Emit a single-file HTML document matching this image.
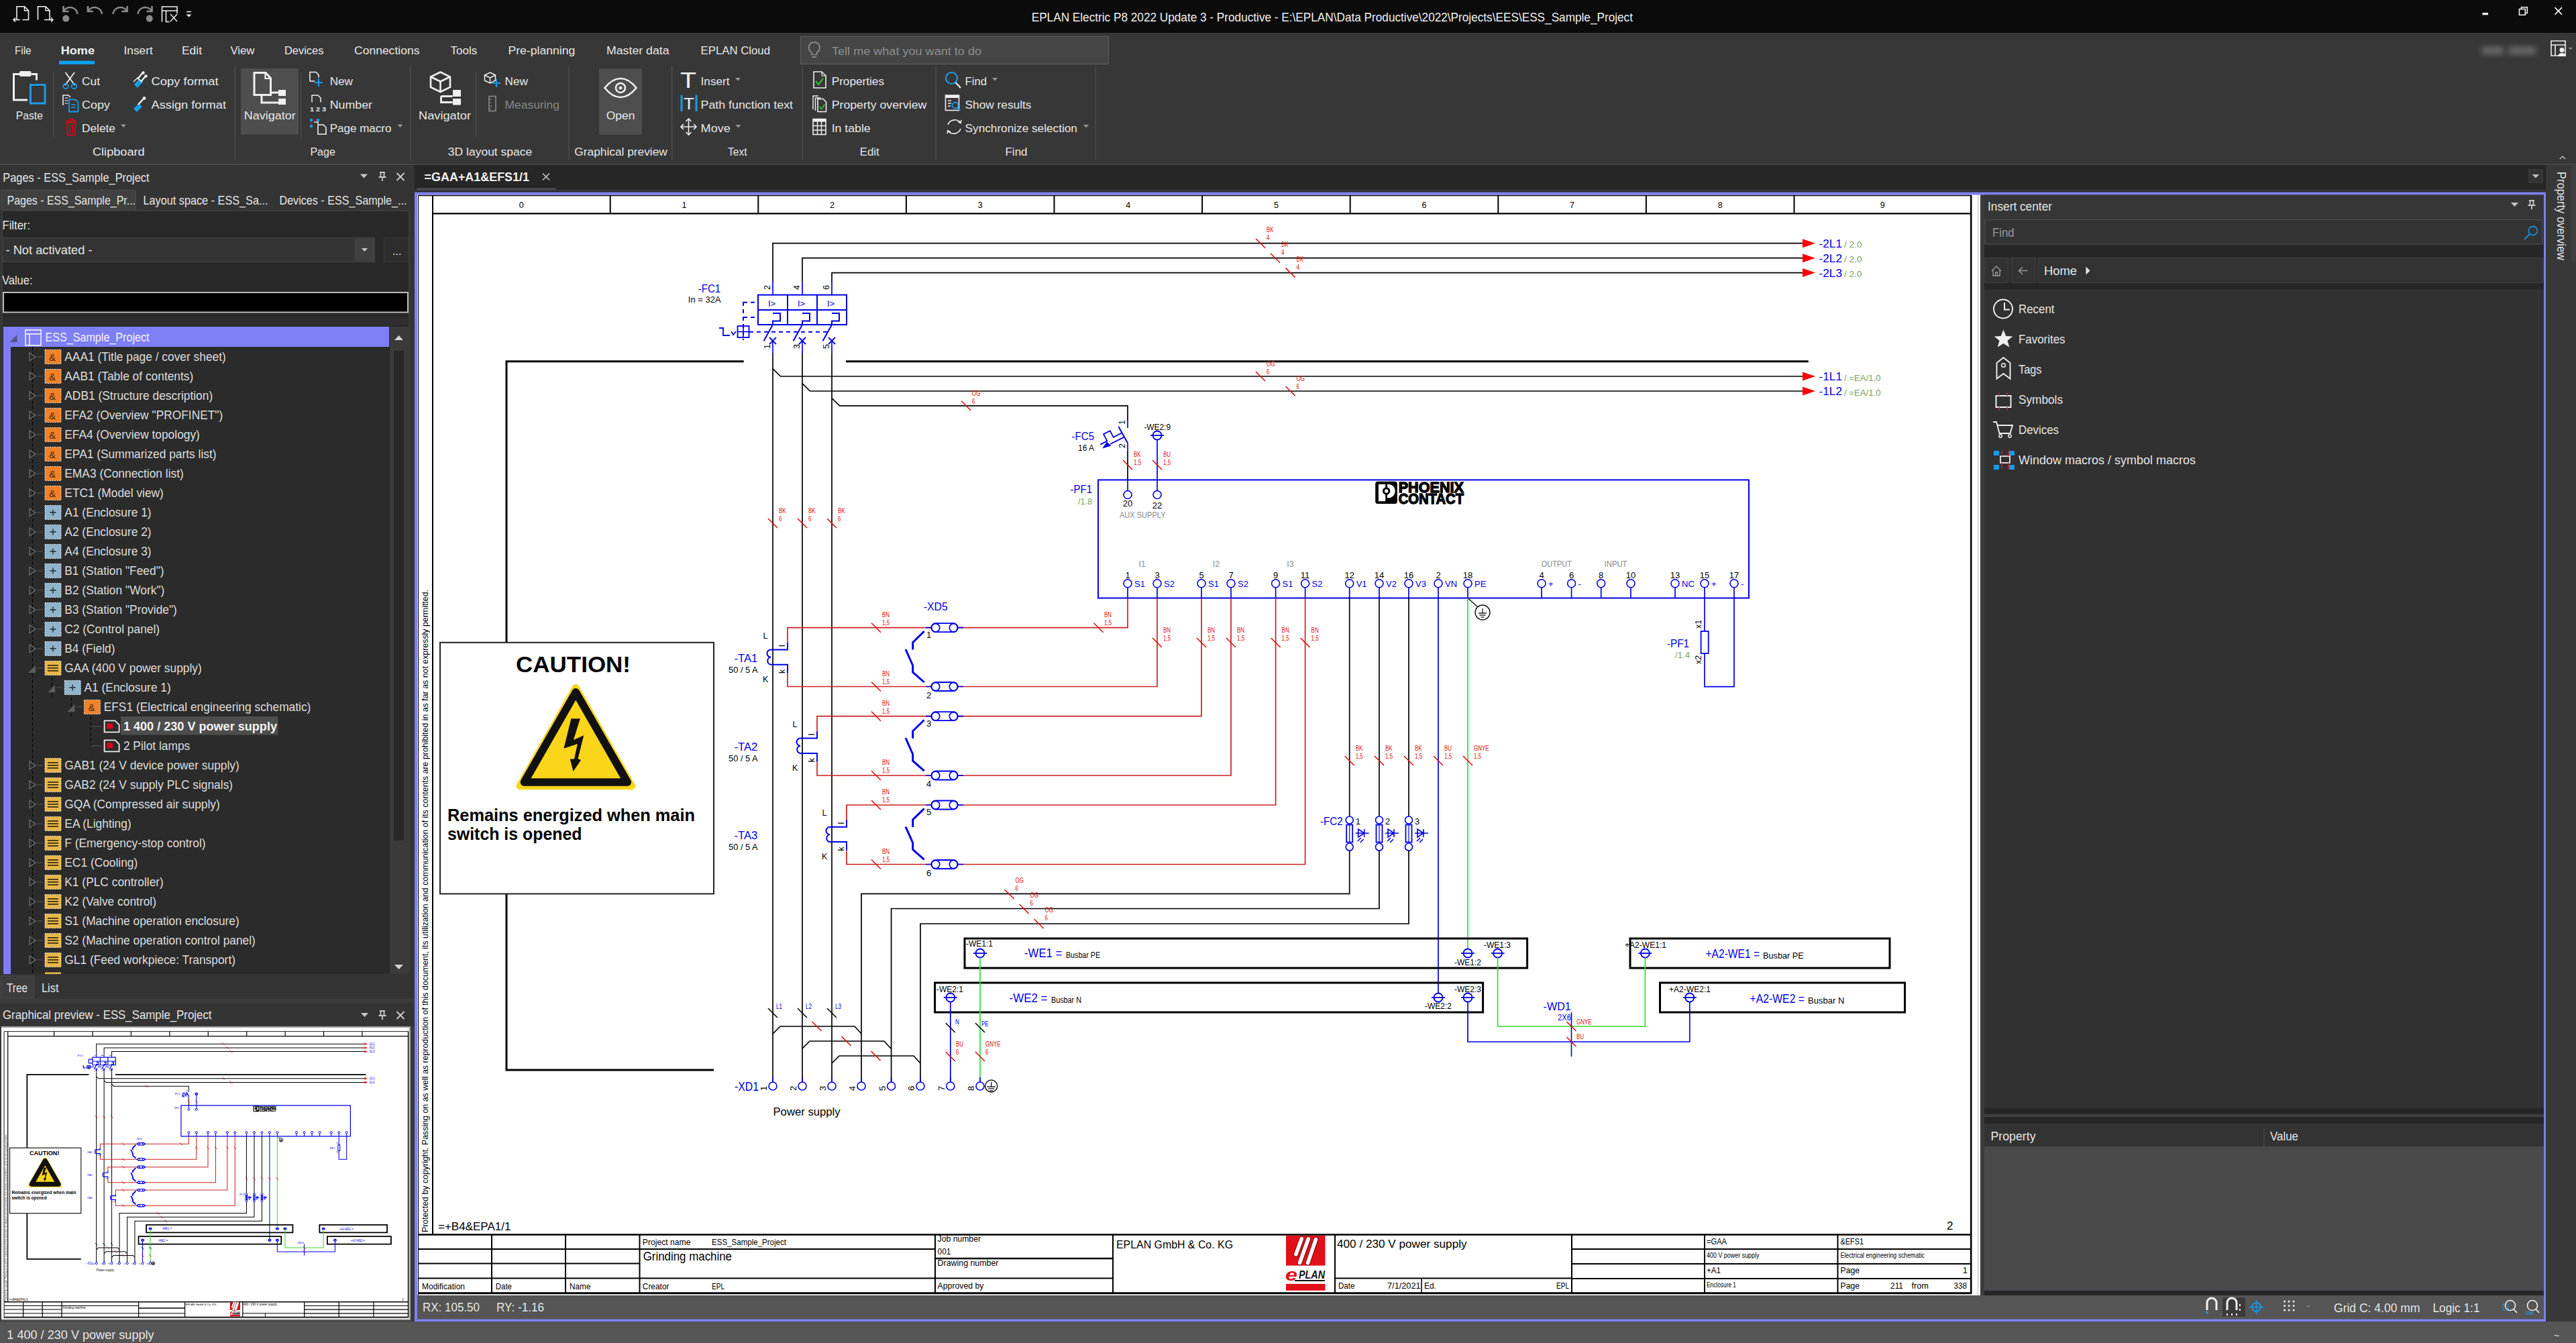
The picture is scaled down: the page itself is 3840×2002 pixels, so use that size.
<!DOCTYPE html><html><head><meta charset="utf-8"><title>EPLAN</title><style>html,body{margin:0;padding:0;background:#3a3a3a;overflow:hidden}svg{display:block}text{font-family:"Liberation Sans",sans-serif;white-space:pre}</style></head><body>
<svg width="3840" height="2002" viewBox="0 0 3840 2002">
<defs><filter id="blur" x="-50%" y="-50%" width="200%" height="200%"><feGaussianBlur stdDeviation="4"/></filter>
</defs>
<rect x="0" y="0" width="3840" height="49" fill="#0b0b0b"/>
<path d="M25 29.5V9.8h11.5l6 6v13.7h-9" fill="none" stroke="#f2f2f2" stroke-width="1.6"/>
<path d="M36.5 9.8v6h6" fill="none" stroke="#f2f2f2" stroke-width="1.4"/>
<path d="M30 29.5h-10m3 -3l-3 3l3 3" fill="none" stroke="#f2f2f2" stroke-width="1.6"/>
<path d="M56.5 29.5V9.8h11.5l6 6v13.7" fill="none" stroke="#f2f2f2" stroke-width="1.6"/>
<path d="M68 9.8v6h6" fill="none" stroke="#f2f2f2" stroke-width="1.4"/>
<path d="M66 29.5h13m-3 -3l3 3l-3 3" fill="none" stroke="#f2f2f2" stroke-width="1.6"/>
<path d="M94.5 9v8h8" fill="none" stroke="#8a8a8a" stroke-width="2.6"/>
<path d="M95 16.5a11 11 0 0 1 20.5 4.5" fill="none" stroke="#8a8a8a" stroke-width="2.6"/>
<circle cx="98.3" cy="27.6" r="5" fill="#8a8a8a" stroke="none" stroke-width="1"/>
<path d="M131 9v8h8" fill="none" stroke="#8a8a8a" stroke-width="2.6"/>
<path d="M131.5 16.5a11 11 0 0 1 20.5 4.5" fill="none" stroke="#8a8a8a" stroke-width="2.6"/>
<path d="M189.5 9v8h-8" fill="none" stroke="#8a8a8a" stroke-width="2.6"/>
<path d="M189 16.5a11 11 0 0 0 -20.5 4.5" fill="none" stroke="#8a8a8a" stroke-width="2.6"/>
<path d="M226.5 9v8h-8" fill="none" stroke="#8a8a8a" stroke-width="2.6"/>
<path d="M226 16.5a11 11 0 0 0 -20.5 4.5" fill="none" stroke="#8a8a8a" stroke-width="2.6"/>
<circle cx="222.8" cy="27.6" r="5" fill="#8a8a8a" stroke="none" stroke-width="1"/>
<path d="M241.5 32.5V10h22.5v10M241.5 16h22.5M247.5 16v16.5h5" fill="none" stroke="#f2f2f2" stroke-width="1.6"/>
<path d="M254 21l10 11M264 21l-10 11" fill="none" stroke="#f2f2f2" stroke-width="1.5"/>
<line x1="278" y1="17.5" x2="285" y2="17.5" stroke="#f2f2f2" stroke-width="1.5"/>
<path d="M277.5 21.5h8l-4 4z" fill="#f2f2f2" stroke="none" stroke-width="1"/>
<text x="1537.7" y="32" font-size="18.6" fill="#f0f0f0" textLength="896.3" lengthAdjust="spacingAndGlyphs">EPLAN Electric P8 2022 Update 3 - Productive - E:\EPLAN\Data Productive\2022\Projects\EES\ESS_Sample_Project</text>
<rect x="3700.5" y="19" width="8.5" height="3.3" fill="#f2f2f2"/>
<path d="M3755.5 13.5h8.8v8.8h-8.8z" fill="none" stroke="#f2f2f2" stroke-width="1.6"/>
<path d="M3758.5 13.5v-2.8h8.8v8.8h-3" fill="none" stroke="#f2f2f2" stroke-width="1.6"/>
<path d="M3808.5 11.2l10.5 10.5M3819 11.2l-10.5 10.5" fill="none" stroke="#f2f2f2" stroke-width="1.7"/>
<rect x="0" y="49" width="3840" height="196" fill="#373737"/>
<line x1="0" y1="245" x2="3840" y2="245" stroke="#4a4a4a" stroke-width="1.5"/>
<text x="22" y="80.5" font-size="17.4" fill="#e8e8e8" textLength="24.6" lengthAdjust="spacingAndGlyphs">File</text>
<text x="184.5" y="80.5" font-size="17.4" fill="#e8e8e8" textLength="43.2" lengthAdjust="spacingAndGlyphs">Insert</text>
<text x="271" y="80.5" font-size="17.4" fill="#e8e8e8" textLength="30.0" lengthAdjust="spacingAndGlyphs">Edit</text>
<text x="343.4" y="80.5" font-size="17.4" fill="#e8e8e8" textLength="36.1" lengthAdjust="spacingAndGlyphs">View</text>
<text x="424" y="80.5" font-size="17.4" fill="#e8e8e8" textLength="58.4" lengthAdjust="spacingAndGlyphs">Devices</text>
<text x="528" y="80.5" font-size="17.4" fill="#e8e8e8" textLength="97.4" lengthAdjust="spacingAndGlyphs">Connections</text>
<text x="671.5" y="80.5" font-size="17.4" fill="#e8e8e8" textLength="39.8" lengthAdjust="spacingAndGlyphs">Tools</text>
<text x="757.4" y="80.5" font-size="17.4" fill="#e8e8e8" textLength="100.0" lengthAdjust="spacingAndGlyphs">Pre-planning</text>
<text x="904" y="80.5" font-size="17.4" fill="#e8e8e8" textLength="93.6" lengthAdjust="spacingAndGlyphs">Master data</text>
<text x="1044.6" y="80.5" font-size="17.4" fill="#e8e8e8" textLength="103.4" lengthAdjust="spacingAndGlyphs">EPLAN Cloud</text>
<text x="90.7" y="80.5" font-size="17.4" fill="#f4f4f4" font-weight="700" textLength="50.3" lengthAdjust="spacingAndGlyphs">Home</text>
<rect x="88" y="90.7" width="53" height="5.2" fill="#0aa4f2"/>
<rect x="1193.5" y="54.5" width="459" height="41" fill="#454545" stroke="#5c5c5c" stroke-width="1.2"/>
<path d="M1210 81.5v-3.2a8.2 8.2 0 1 1 7.6 0v3.2z" fill="none" stroke="#8c8c8c" stroke-width="1.7"/>
<path d="M1210.5 85h6.6" fill="none" stroke="#8c8c8c" stroke-width="1.8"/>
<text x="1240" y="81.6" font-size="17.4" fill="#8e8e8e" textLength="223.0" lengthAdjust="spacingAndGlyphs">Tell me what you want to do</text>
<line x1="79.7" y1="107" x2="79.7" y2="204" stroke="#4e4e4e" stroke-width="1.3"/>
<line x1="350.3" y1="98" x2="350.3" y2="239" stroke="#4e4e4e" stroke-width="1.3"/>
<line x1="448.7" y1="108" x2="448.7" y2="204" stroke="#4e4e4e" stroke-width="1.3"/>
<line x1="611.7" y1="98" x2="611.7" y2="239" stroke="#4e4e4e" stroke-width="1.3"/>
<line x1="709.6" y1="108" x2="709.6" y2="204" stroke="#4e4e4e" stroke-width="1.3"/>
<line x1="848" y1="98" x2="848" y2="239" stroke="#4e4e4e" stroke-width="1.3"/>
<line x1="1001.7" y1="98" x2="1001.7" y2="239" stroke="#4e4e4e" stroke-width="1.3"/>
<line x1="1196" y1="98" x2="1196" y2="239" stroke="#4e4e4e" stroke-width="1.3"/>
<line x1="1395.2" y1="98" x2="1395.2" y2="239" stroke="#4e4e4e" stroke-width="1.3"/>
<line x1="1633" y1="98" x2="1633" y2="239" stroke="#4e4e4e" stroke-width="1.3"/>
<rect x="359" y="102" width="86" height="98.6" fill="#4e4e4e"/>
<rect x="893" y="102.4" width="64" height="98.5" fill="#4e4e4e"/>
<text x="23.8" y="177.5" font-size="17.4" fill="#e8e8e8" textLength="40.1" lengthAdjust="spacingAndGlyphs">Paste</text>
<text x="122" y="126.8" font-size="17.4" fill="#e8e8e8" textLength="27.0" lengthAdjust="spacingAndGlyphs">Cut</text>
<text x="122" y="161.8" font-size="17.4" fill="#e8e8e8" textLength="42.0" lengthAdjust="spacingAndGlyphs">Copy</text>
<text x="122" y="196.8" font-size="17.4" fill="#e8e8e8" textLength="50.0" lengthAdjust="spacingAndGlyphs">Delete</text>
<path d="M180 185.5h8l-4 4.5z" fill="#9a9a9a" stroke="none" stroke-width="1"/>
<text x="225.5" y="126.8" font-size="17.4" fill="#e8e8e8" textLength="100.2" lengthAdjust="spacingAndGlyphs">Copy format</text>
<text x="225.5" y="161.8" font-size="17.4" fill="#e8e8e8" textLength="111.5" lengthAdjust="spacingAndGlyphs">Assign format</text>
<text x="138" y="231.5" font-size="17.4" fill="#e8e8e8" textLength="77.6" lengthAdjust="spacingAndGlyphs">Clipboard</text>
<text x="363.7" y="177.9" font-size="17.4" fill="#e8e8e8" textLength="77.0" lengthAdjust="spacingAndGlyphs">Navigator</text>
<text x="491.7" y="126.8" font-size="17.4" fill="#e8e8e8" textLength="34.3" lengthAdjust="spacingAndGlyphs">New</text>
<text x="491.7" y="161.8" font-size="17.4" fill="#e8e8e8" textLength="63.3" lengthAdjust="spacingAndGlyphs">Number</text>
<text x="491.7" y="196.8" font-size="17.4" fill="#e8e8e8" textLength="91.8" lengthAdjust="spacingAndGlyphs">Page macro</text>
<path d="M592.5 185.5h8l-4 4.5z" fill="#9a9a9a" stroke="none" stroke-width="1"/>
<text x="462.4" y="231.5" font-size="17.4" fill="#e8e8e8" textLength="37.4" lengthAdjust="spacingAndGlyphs">Page</text>
<text x="624" y="177.5" font-size="17.4" fill="#e8e8e8" textLength="78.0" lengthAdjust="spacingAndGlyphs">Navigator</text>
<text x="752.6" y="126.8" font-size="17.4" fill="#e8e8e8" textLength="34.4" lengthAdjust="spacingAndGlyphs">New</text>
<text x="752.6" y="161.8" font-size="17.4" fill="#878787" textLength="81.4" lengthAdjust="spacingAndGlyphs">Measuring</text>
<text x="667.8" y="231.5" font-size="17.4" fill="#e8e8e8" textLength="125.5" lengthAdjust="spacingAndGlyphs">3D layout space</text>
<text x="903.7" y="177.5" font-size="17.4" fill="#e8e8e8" textLength="42.8" lengthAdjust="spacingAndGlyphs">Open</text>
<text x="856.3" y="231.5" font-size="17.4" fill="#e8e8e8" textLength="138.5" lengthAdjust="spacingAndGlyphs">Graphical preview</text>
<text x="1044.6" y="126.8" font-size="17.4" fill="#e8e8e8" textLength="42.9" lengthAdjust="spacingAndGlyphs">Insert</text>
<path d="M1096 116h8l-4 4.5z" fill="#9a9a9a" stroke="none" stroke-width="1"/>
<text x="1044.6" y="161.8" font-size="17.4" fill="#e8e8e8" textLength="137.4" lengthAdjust="spacingAndGlyphs">Path function text</text>
<text x="1044.6" y="196.8" font-size="17.4" fill="#e8e8e8" textLength="44.2" lengthAdjust="spacingAndGlyphs">Move</text>
<path d="M1096.5 186h8l-4 4.5z" fill="#9a9a9a" stroke="none" stroke-width="1"/>
<text x="1085" y="231.5" font-size="17.4" fill="#e8e8e8" textLength="28.5" lengthAdjust="spacingAndGlyphs">Text</text>
<text x="1239.7" y="126.8" font-size="17.4" fill="#e8e8e8" textLength="78.3" lengthAdjust="spacingAndGlyphs">Properties</text>
<text x="1239.7" y="161.8" font-size="17.4" fill="#e8e8e8" textLength="141.7" lengthAdjust="spacingAndGlyphs">Property overview</text>
<text x="1239.7" y="196.8" font-size="17.4" fill="#e8e8e8" textLength="58.0" lengthAdjust="spacingAndGlyphs">In table</text>
<text x="1281.8" y="231.5" font-size="17.4" fill="#e8e8e8" textLength="28.9" lengthAdjust="spacingAndGlyphs">Edit</text>
<text x="1438.6" y="126.8" font-size="17.4" fill="#e8e8e8" textLength="32.4" lengthAdjust="spacingAndGlyphs">Find</text>
<path d="M1479 116h8l-4 4.5z" fill="#9a9a9a" stroke="none" stroke-width="1"/>
<text x="1438.6" y="161.8" font-size="17.4" fill="#e8e8e8" textLength="98.9" lengthAdjust="spacingAndGlyphs">Show results</text>
<text x="1438.6" y="196.8" font-size="17.4" fill="#e8e8e8" textLength="167.3" lengthAdjust="spacingAndGlyphs">Synchronize selection</text>
<path d="M1615 186h8l-4 4.5z" fill="#9a9a9a" stroke="none" stroke-width="1"/>
<text x="1498.5" y="231.5" font-size="17.4" fill="#e8e8e8" textLength="33.0" lengthAdjust="spacingAndGlyphs">Find</text>
<g filter="url(#blur)">
<rect x="3700" y="70" width="32" height="11" fill="#6a6a6a"/>
<rect x="3740" y="70" width="40" height="11" fill="#6a6a6a"/>
</g>
<path d="M3803 83V61h21v22zM3803 67h21M3809 67v16" fill="none" stroke="#f0f0f0" stroke-width="1.6"/>
<circle cx="3819" cy="74.5" r="3.5" fill="#f0f0f0" stroke="none" stroke-width="1"/>
<path d="M3813 84a6 5 0 0 1 12 0z" fill="#f0f0f0" stroke="none" stroke-width="1"/>
<path d="M3829 71h6l-3 3.5z" fill="#8a8a8a" stroke="none" stroke-width="1"/>
<path d="M3816 237l4-4l4 4" fill="none" stroke="#bdbdbd" stroke-width="1.5"/>
<path d="M29 110.5h-8.5v38.5h20.5" fill="none" stroke="#f0f0f0" stroke-width="3"/>
<path d="M46.5 110.5h8v9" fill="none" stroke="#f0f0f0" stroke-width="3"/>
<rect x="29" y="106" width="17.5" height="8" fill="#f0f0f0" rx="2"/>
<rect x="45.5" y="126.5" width="21.5" height="27.5" fill="none" stroke="#1a9ae8" stroke-width="3"/>
<path d="M97.5 108l14 19M111 108l-14 19" fill="none" stroke="#f0f0f0" stroke-width="1.8"/>
<circle cx="98" cy="128.5" r="3.8" fill="none" stroke="#1a9ae8" stroke-width="1.8"/>
<circle cx="110.5" cy="128.5" r="3.8" fill="none" stroke="#1a9ae8" stroke-width="1.8"/>
<path d="M94 157v-15h8l3 3" fill="none" stroke="#f0f0f0" stroke-width="1.6"/>
<path d="M96.5 146h5M96.5 150h5M96.5 154h5" fill="none" stroke="#f0f0f0" stroke-width="1.2"/>
<path d="M103 166.5v-18h9.5l4 4v14z" fill="none" stroke="#1a9ae8" stroke-width="1.8"/>
<path d="M106 156h7M106 160h7" fill="none" stroke="#1a9ae8" stroke-width="1.4"/>
<path d="M98 180.5h16M103 180.5v-3h6v3" fill="none" stroke="#c8101e" stroke-width="1.8"/>
<path d="M99.5 183h13l-1 18.5h-11z" fill="none" stroke="#c8101e" stroke-width="2"/>
<path d="M104 186v13M108 186v13" fill="none" stroke="#c8101e" stroke-width="1.8"/>
<path d="M200 126l8-9l5 5l-8 9z" fill="#1a9ae8" stroke="none" stroke-width="1"/>
<path d="M205 118l8-10M210 122l8-10" fill="none" stroke="#f0f0f0" stroke-width="2.2"/>
<circle cx="213.5" cy="108.5" r="2.2" fill="#f0f0f0" stroke="none" stroke-width="1"/>
<circle cx="217.5" cy="113.5" r="2.2" fill="#f0f0f0" stroke="none" stroke-width="1"/>
<path d="M199 122l6-6l6 6" fill="none" stroke="#f0f0f0" stroke-width="1.4"/>
<path d="M199 162l8-8l5 5l-8 8z" fill="#1a9ae8" stroke="none" stroke-width="1"/>
<path d="M206 156l9-10" fill="none" stroke="#f0f0f0" stroke-width="2.4"/>
<circle cx="215" cy="146.5" r="2.4" fill="#f0f0f0" stroke="none" stroke-width="1"/>
<path d="M379 108.5h17l7.5 8v25h-24.5z" fill="none" stroke="#f0f0f0" stroke-width="3"/>
<path d="M395.5 108.5v8.5h8" fill="none" stroke="#f0f0f0" stroke-width="2.2"/>
<path d="M390 142v11h26M405 138h12" fill="none" stroke="#f0f0f0" stroke-width="3"/>
<rect x="415" y="134" width="11" height="9" fill="#f0f0f0"/>
<rect x="415" y="147" width="11" height="9" fill="#f0f0f0"/>
<path d="M462 121v-13.5h9l4 4v4" fill="none" stroke="#f0f0f0" stroke-width="1.6"/>
<path d="M462 121h7" fill="none" stroke="#f0f0f0" stroke-width="1.6"/>
<path d="M475 117v12M469 123h12" fill="none" stroke="#1a9ae8" stroke-width="2"/>
<path d="M465 152.5v-10.5h9l4 4v6.5" fill="none" stroke="#f0f0f0" stroke-width="1.5"/>
<text x="462" y="165.5" font-size="9.5" fill="#f0f0f0" font-weight="700" textLength="24.0" lengthAdjust="spacingAndGlyphs">1 2 3</text>
<rect x="462" y="177" width="4" height="4" fill="#1a9ae8"/>
<rect x="472" y="177" width="4" height="4" fill="#1a9ae8"/>
<rect x="462" y="186" width="4" height="4" fill="#1a9ae8"/>
<path d="M467 179h4M464 182v4" fill="none" stroke="#c8101e" stroke-width="1.5"/>
<path d="M468 182h6v3M474 186h8l4 4v10h-12z" fill="none" stroke="#f0f0f0" stroke-width="1.6"/>
<path d="M656.5 107.5l14.5 7v15.5l-14.5 7l-14.5-7v-15.5z" fill="none" stroke="#f0f0f0" stroke-width="2.6"/>
<path d="M642 114.5l14.5 7l14.5-7M656.5 121.5v15" fill="none" stroke="#f0f0f0" stroke-width="2.6"/>
<path d="M657.5 143.5h17M657.5 143.5v9h17" fill="none" stroke="#f0f0f0" stroke-width="2.8"/>
<rect x="675" y="134" width="12" height="10" fill="#f0f0f0"/>
<rect x="675" y="147" width="12" height="9.5" fill="#f0f0f0"/>
<path d="M730.5 108l8 4v8l-8 4l-8-4v-8z" fill="none" stroke="#f0f0f0" stroke-width="1.5"/>
<path d="M722.5 112l8 4l8-4M730.5 116v8" fill="none" stroke="#f0f0f0" stroke-width="1.5"/>
<path d="M740 118v12M734 124h12" fill="none" stroke="#1a9ae8" stroke-width="2"/>
<rect x="729" y="143.5" width="10" height="22" fill="none" stroke="#8a8a8a" stroke-width="1.6"/>
<path d="M729 148h4M729 153h3M729 158h4M729 162h3" fill="none" stroke="#8a8a8a" stroke-width="1.2"/>
<path d="M901.5 131c8-10 15-14 23.5-14s15.5 4 23.5 14c-8 10-15 14-23.5 14s-15.5-4-23.5-14z" fill="none" stroke="#f0f0f0" stroke-width="2.6"/>
<circle cx="925" cy="131" r="7" fill="none" stroke="#f0f0f0" stroke-width="2.6"/>
<circle cx="925" cy="131" r="2.5" fill="#f0f0f0" stroke="none" stroke-width="1"/>
<text x="1014" y="131" font-size="33" font-family="Liberation Serif" fill="#f0f0f0" textLength="24" lengthAdjust="spacingAndGlyphs">T</text>
<rect x="1014.5" y="142" width="3" height="24" fill="#1a9ae8"/>
<rect x="1036.5" y="142" width="3" height="24" fill="#1a9ae8"/>
<text x="1019" y="163" font-size="23" font-family="Liberation Serif" fill="#f0f0f0" textLength="16" lengthAdjust="spacingAndGlyphs">T</text>
<path d="M1026.5 177v24M1015 189h23" fill="none" stroke="#f0f0f0" stroke-width="1.6"/>
<path d="M1022.5 181l4-4l4 4M1022.5 197l4 4l4-4M1019 185l-4 4l4 4M1034 185l4 4l-4 4" fill="none" stroke="#f0f0f0" stroke-width="1.6"/>
<path d="M1213 131v-24h12l6 6v18z" fill="none" stroke="#f0f0f0" stroke-width="1.6"/>
<path d="M1225 107v6h6" fill="none" stroke="#f0f0f0" stroke-width="1.2"/>
<path d="M1216 121l4 5l7-9" fill="none" stroke="#38b838" stroke-width="2.2"/>
<path d="M1212 163v-20h8M1215.5 165v-19h8" fill="none" stroke="#f0f0f0" stroke-width="1.4"/>
<path d="M1219 166.5v-19h8l4.5 4.5v14.5z" fill="none" stroke="#f0f0f0" stroke-width="1.6"/>
<path d="M1221.5 159l3 3.5l5-7" fill="none" stroke="#38b838" stroke-width="1.8"/>
<rect x="1212" y="177.5" width="19" height="23" fill="none" stroke="#f0f0f0" stroke-width="1.6"/>
<rect x="1212" y="177.5" width="19" height="4" fill="#f0f0f0"/>
<path d="M1218.5 181v19M1224.5 181v19M1212 187.5h19M1212 194h19" fill="none" stroke="#f0f0f0" stroke-width="1.4"/>
<circle cx="1418.5" cy="116.5" r="8.5" fill="none" stroke="#1a9ae8" stroke-width="2.2"/>
<line x1="1424.5" y1="123" x2="1432" y2="131" stroke="#f0f0f0" stroke-width="2.2"/>
<rect x="1409.5" y="142" width="20" height="22.5" fill="none" stroke="#f0f0f0" stroke-width="1.6"/>
<rect x="1409.5" y="142" width="20" height="4" fill="#f0f0f0"/>
<path d="M1413 150h5M1413 154h5M1413 158h4" fill="none" stroke="#f0f0f0" stroke-width="1.3"/>
<circle cx="1424" cy="157" r="4.5" fill="none" stroke="#1a9ae8" stroke-width="1.8"/>
<line x1="1427" y1="160.5" x2="1431.5" y2="165" stroke="#1a9ae8" stroke-width="2"/>
<path d="M1413 186a11 11 0 0 1 19 -3" fill="none" stroke="#f0f0f0" stroke-width="1.6"/>
<path d="M1432 192a11 11 0 0 1 -19 3" fill="none" stroke="#f0f0f0" stroke-width="1.6"/>
<path d="M1428 181l4 2.5l1-4.5M1417 197l-4-2.5l-1 4.5" fill="none" stroke="#f0f0f0" stroke-width="1.6"/>
<rect x="0" y="246" width="618" height="37" fill="#343434"/>
<text x="4.3" y="271" font-size="17.8" fill="#e6e6e6" textLength="218.3" lengthAdjust="spacingAndGlyphs">Pages - ESS_Sample_Project</text>
<path d="M537 259.5h11l-5.5 6z" fill="#c8c8c8" stroke="none" stroke-width="1"/>
<path d="M566 257h8M567.5 257v7h5v-7M564.5 264h11M570 264v6" fill="none" stroke="#c8c8c8" stroke-width="1.8"/>
<path d="M591.5 258l11 11M602.5 258l-11 11" fill="none" stroke="#cfcfcf" stroke-width="1.8"/>
<rect x="0" y="283" width="618" height="30" fill="#343434"/>
<rect x="1.5" y="283.5" width="201" height="29.5" fill="#404040" stroke="#4a4a4a" stroke-width="1"/>
<text x="10.5" y="304.5" font-size="17.8" fill="#e6e6e6" textLength="191.5" lengthAdjust="spacingAndGlyphs">Pages - ESS_Sample_Pr...</text>
<text x="213.5" y="304.5" font-size="17.8" fill="#e6e6e6" textLength="186.0" lengthAdjust="spacingAndGlyphs">Layout space - ESS_Sa...</text>
<text x="416.5" y="304.5" font-size="17.8" fill="#e6e6e6" textLength="190.0" lengthAdjust="spacingAndGlyphs">Devices - ESS_Sample_...</text>
<rect x="0" y="313" width="618" height="1657" fill="#343434"/>
<rect x="3" y="314" width="607" height="1144" fill="#282828" stroke="#3c3c3c" stroke-width="2"/>
<text x="3.5" y="342" font-size="17.8" fill="#e6e6e6" textLength="41.5" lengthAdjust="spacingAndGlyphs">Filter:</text>
<rect x="4.5" y="354.5" width="554" height="36" fill="#333333" stroke="#3e3e3e" stroke-width="1.5"/>
<rect x="528.5" y="355.5" width="29.5" height="34" fill="#404040"/>
<path d="M539 370h9l-4.5 5z" fill="#c8c8c8" stroke="none" stroke-width="1"/>
<text x="8.5" y="379" font-size="17.8" fill="#e6e6e6" textLength="129.0" lengthAdjust="spacingAndGlyphs">- Not activated -</text>
<rect x="572.5" y="354.5" width="36.5" height="36" fill="#2d2d2d" stroke="#3a3a3a" stroke-width="1.2"/>
<text x="585" y="380" font-size="16" fill="#e6e6e6">...</text>
<text x="3" y="424" font-size="17.8" fill="#e6e6e6" textLength="45.5" lengthAdjust="spacingAndGlyphs">Value:</text>
<rect x="5" y="436" width="603" height="29.5" fill="#000000" stroke="#bdbdbd" stroke-width="2"/>
<rect x="5" y="473" width="603" height="12" fill="#2e2e2e"/>
<rect x="5" y="487" width="575" height="30" fill="#7f7ff5"/>
<rect x="5" y="517" width="11" height="935" fill="#7f7ff5"/>
<rect x="16" y="517" width="564" height="935" fill="#2b2b2b"/>
<rect x="581" y="487" width="30" height="966" fill="#3a3a3a"/>
<rect x="587" y="523" width="15" height="730" fill="#282828"/>
<path d="M588 507h13l-6.5-7z" fill="#d5d5d5" stroke="none" stroke-width="1"/>
<path d="M588 1438h13l-6.5 7z" fill="#d5d5d5" stroke="none" stroke-width="1"/>
<rect x="3" y="1453" width="608" height="4" fill="#3d3d3d"/>
<g>
<g stroke="#5e5e5e" stroke-width="1.2" stroke-dasharray="5,3">
<line x1="48.5" y1="517" x2="48.5" y2="1452" stroke="#000" stroke-width="1"/>
<line x1="77.5" y1="1010" x2="77.5" y2="1040" stroke="#000" stroke-width="1"/>
<line x1="106.5" y1="1040" x2="106.5" y2="1068" stroke="#000" stroke-width="1"/>
<line x1="135.5" y1="1068" x2="135.5" y2="1112" stroke="#000" stroke-width="1"/>
</g>
<path d="M14.5 509.9h11v-11z" fill="#555580" stroke="none" stroke-width="1"/>
<path d="M38 491.9h23v23h-23zM38 497.9h23M44 497.9v17" fill="none" stroke="#f0f0f0" stroke-width="1.6"/>
<text x="67.4" y="509.3" font-size="17.8" fill="#f4f4f4" textLength="155.2" lengthAdjust="spacingAndGlyphs">ESS_Sample_Project</text>
<path d="M44.0 525.9l9 6l-9 6z" fill="none" stroke="#6a6a6a" stroke-width="1.3"/>
<line x1="55" y1="531.9" x2="64" y2="531.9" stroke="#555" stroke-width="1"/>
<rect x="67" y="521.4" width="24" height="21" fill="#f0822a" stroke="#f3e6d6" stroke-width="1" stroke-dasharray="2,1.5"/>
<text x="73" y="537.9" font-size="15" fill="#4a2a10">&amp;</text>
<text x="96.3" y="538.3" font-size="17.8" fill="#dedede" textLength="240.5" lengthAdjust="spacingAndGlyphs">AAA1 (Title page / cover sheet)</text>
<path d="M44.0 554.9l9 6l-9 6z" fill="none" stroke="#6a6a6a" stroke-width="1.3"/>
<line x1="55" y1="560.9" x2="64" y2="560.9" stroke="#555" stroke-width="1"/>
<rect x="67" y="550.4" width="24" height="21" fill="#f0822a" stroke="#f3e6d6" stroke-width="1" stroke-dasharray="2,1.5"/>
<text x="73" y="566.9" font-size="15" fill="#4a2a10">&amp;</text>
<text x="96.3" y="567.3" font-size="17.8" fill="#dedede" textLength="192.0" lengthAdjust="spacingAndGlyphs">AAB1 (Table of contents)</text>
<path d="M44.0 583.9l9 6l-9 6z" fill="none" stroke="#6a6a6a" stroke-width="1.3"/>
<line x1="55" y1="589.9" x2="64" y2="589.9" stroke="#555" stroke-width="1"/>
<rect x="67" y="579.4" width="24" height="21" fill="#f0822a" stroke="#f3e6d6" stroke-width="1" stroke-dasharray="2,1.5"/>
<text x="73" y="595.9" font-size="15" fill="#4a2a10">&amp;</text>
<text x="96.3" y="596.3" font-size="17.8" fill="#dedede" textLength="220.9" lengthAdjust="spacingAndGlyphs">ADB1 (Structure description)</text>
<path d="M44.0 612.9l9 6l-9 6z" fill="none" stroke="#6a6a6a" stroke-width="1.3"/>
<line x1="55" y1="618.9" x2="64" y2="618.9" stroke="#555" stroke-width="1"/>
<rect x="67" y="608.4" width="24" height="21" fill="#f0822a" stroke="#f3e6d6" stroke-width="1" stroke-dasharray="2,1.5"/>
<text x="73" y="624.9" font-size="15" fill="#4a2a10">&amp;</text>
<text x="96.3" y="625.3" font-size="17.8" fill="#dedede" textLength="236.0" lengthAdjust="spacingAndGlyphs">EFA2 (Overview "PROFINET")</text>
<path d="M44.0 641.9l9 6l-9 6z" fill="none" stroke="#6a6a6a" stroke-width="1.3"/>
<line x1="55" y1="647.9" x2="64" y2="647.9" stroke="#555" stroke-width="1"/>
<rect x="67" y="637.4" width="24" height="21" fill="#f0822a" stroke="#f3e6d6" stroke-width="1" stroke-dasharray="2,1.5"/>
<text x="73" y="653.9" font-size="15" fill="#4a2a10">&amp;</text>
<text x="96.3" y="654.3" font-size="17.8" fill="#dedede" textLength="201.6" lengthAdjust="spacingAndGlyphs">EFA4 (Overview topology)</text>
<path d="M44.0 670.9l9 6l-9 6z" fill="none" stroke="#6a6a6a" stroke-width="1.3"/>
<line x1="55" y1="676.9" x2="64" y2="676.9" stroke="#555" stroke-width="1"/>
<rect x="67" y="666.4" width="24" height="21" fill="#f0822a" stroke="#f3e6d6" stroke-width="1" stroke-dasharray="2,1.5"/>
<text x="73" y="682.9" font-size="15" fill="#4a2a10">&amp;</text>
<text x="96.3" y="683.3" font-size="17.8" fill="#dedede" textLength="226.3" lengthAdjust="spacingAndGlyphs">EPA1 (Summarized parts list)</text>
<path d="M44.0 699.9l9 6l-9 6z" fill="none" stroke="#6a6a6a" stroke-width="1.3"/>
<line x1="55" y1="705.9" x2="64" y2="705.9" stroke="#555" stroke-width="1"/>
<rect x="67" y="695.4" width="24" height="21" fill="#f0822a" stroke="#f3e6d6" stroke-width="1" stroke-dasharray="2,1.5"/>
<text x="73" y="711.9" font-size="15" fill="#4a2a10">&amp;</text>
<text x="96.3" y="712.3" font-size="17.8" fill="#dedede" textLength="177.5" lengthAdjust="spacingAndGlyphs">EMA3 (Connection list)</text>
<path d="M44.0 728.9l9 6l-9 6z" fill="none" stroke="#6a6a6a" stroke-width="1.3"/>
<line x1="55" y1="734.9" x2="64" y2="734.9" stroke="#555" stroke-width="1"/>
<rect x="67" y="724.4" width="24" height="21" fill="#f0822a" stroke="#f3e6d6" stroke-width="1" stroke-dasharray="2,1.5"/>
<text x="73" y="740.9" font-size="15" fill="#4a2a10">&amp;</text>
<text x="96.3" y="741.3" font-size="17.8" fill="#dedede" textLength="147.6" lengthAdjust="spacingAndGlyphs">ETC1 (Model view)</text>
<path d="M44.0 757.9l9 6l-9 6z" fill="none" stroke="#6a6a6a" stroke-width="1.3"/>
<line x1="55" y1="763.9" x2="64" y2="763.9" stroke="#555" stroke-width="1"/>
<rect x="67" y="753.4" width="24" height="21" fill="#8fb4cc" stroke="#e8eef2" stroke-width="1" stroke-dasharray="2,1.5"/>
<path d="M74.5 763.9h9M79.0 759.4v9" fill="none" stroke="#2c3a44" stroke-width="1.6"/>
<text x="96.3" y="770.3" font-size="17.8" fill="#dedede" textLength="129.3" lengthAdjust="spacingAndGlyphs">A1 (Enclosure 1)</text>
<path d="M44.0 786.9l9 6l-9 6z" fill="none" stroke="#6a6a6a" stroke-width="1.3"/>
<line x1="55" y1="792.9" x2="64" y2="792.9" stroke="#555" stroke-width="1"/>
<rect x="67" y="782.4" width="24" height="21" fill="#8fb4cc" stroke="#e8eef2" stroke-width="1" stroke-dasharray="2,1.5"/>
<path d="M74.5 792.9h9M79.0 788.4v9" fill="none" stroke="#2c3a44" stroke-width="1.6"/>
<text x="96.3" y="799.3" font-size="17.8" fill="#dedede" textLength="129.3" lengthAdjust="spacingAndGlyphs">A2 (Enclosure 2)</text>
<path d="M44.0 815.9l9 6l-9 6z" fill="none" stroke="#6a6a6a" stroke-width="1.3"/>
<line x1="55" y1="821.9" x2="64" y2="821.9" stroke="#555" stroke-width="1"/>
<rect x="67" y="811.4" width="24" height="21" fill="#8fb4cc" stroke="#e8eef2" stroke-width="1" stroke-dasharray="2,1.5"/>
<path d="M74.5 821.9h9M79.0 817.4v9" fill="none" stroke="#2c3a44" stroke-width="1.6"/>
<text x="96.3" y="828.3" font-size="17.8" fill="#dedede" textLength="129.3" lengthAdjust="spacingAndGlyphs">A4 (Enclosure 3)</text>
<path d="M44.0 844.9l9 6l-9 6z" fill="none" stroke="#6a6a6a" stroke-width="1.3"/>
<line x1="55" y1="850.9" x2="64" y2="850.9" stroke="#555" stroke-width="1"/>
<rect x="67" y="840.4" width="24" height="21" fill="#8fb4cc" stroke="#e8eef2" stroke-width="1" stroke-dasharray="2,1.5"/>
<path d="M74.5 850.9h9M79.0 846.4v9" fill="none" stroke="#2c3a44" stroke-width="1.6"/>
<text x="96.3" y="857.3" font-size="17.8" fill="#dedede" textLength="148.3" lengthAdjust="spacingAndGlyphs">B1 (Station "Feed")</text>
<path d="M44.0 873.9l9 6l-9 6z" fill="none" stroke="#6a6a6a" stroke-width="1.3"/>
<line x1="55" y1="879.9" x2="64" y2="879.9" stroke="#555" stroke-width="1"/>
<rect x="67" y="869.4" width="24" height="21" fill="#8fb4cc" stroke="#e8eef2" stroke-width="1" stroke-dasharray="2,1.5"/>
<path d="M74.5 879.9h9M79.0 875.4v9" fill="none" stroke="#2c3a44" stroke-width="1.6"/>
<text x="96.3" y="886.3" font-size="17.8" fill="#dedede" textLength="149.0" lengthAdjust="spacingAndGlyphs">B2 (Station "Work")</text>
<path d="M44.0 902.9l9 6l-9 6z" fill="none" stroke="#6a6a6a" stroke-width="1.3"/>
<line x1="55" y1="908.9" x2="64" y2="908.9" stroke="#555" stroke-width="1"/>
<rect x="67" y="898.4" width="24" height="21" fill="#8fb4cc" stroke="#e8eef2" stroke-width="1" stroke-dasharray="2,1.5"/>
<path d="M74.5 908.9h9M79.0 904.4v9" fill="none" stroke="#2c3a44" stroke-width="1.6"/>
<text x="96.3" y="915.3" font-size="17.8" fill="#dedede" textLength="167.6" lengthAdjust="spacingAndGlyphs">B3 (Station "Provide")</text>
<path d="M44.0 931.9l9 6l-9 6z" fill="none" stroke="#6a6a6a" stroke-width="1.3"/>
<line x1="55" y1="937.9" x2="64" y2="937.9" stroke="#555" stroke-width="1"/>
<rect x="67" y="927.4" width="24" height="21" fill="#8fb4cc" stroke="#e8eef2" stroke-width="1" stroke-dasharray="2,1.5"/>
<path d="M74.5 937.9h9M79.0 933.4v9" fill="none" stroke="#2c3a44" stroke-width="1.6"/>
<text x="96.3" y="944.3" font-size="17.8" fill="#dedede" textLength="141.8" lengthAdjust="spacingAndGlyphs">C2 (Control panel)</text>
<path d="M44.0 960.9l9 6l-9 6z" fill="none" stroke="#6a6a6a" stroke-width="1.3"/>
<line x1="55" y1="966.9" x2="64" y2="966.9" stroke="#555" stroke-width="1"/>
<rect x="67" y="956.4" width="24" height="21" fill="#8fb4cc" stroke="#e8eef2" stroke-width="1" stroke-dasharray="2,1.5"/>
<path d="M74.5 966.9h9M79.0 962.4v9" fill="none" stroke="#2c3a44" stroke-width="1.6"/>
<text x="96.3" y="973.3" font-size="17.8" fill="#dedede" textLength="75.2" lengthAdjust="spacingAndGlyphs">B4 (Field)</text>
<path d="M42.0 1002.9h11v-11z" fill="#5c5c5c" stroke="none" stroke-width="1"/>
<line x1="55" y1="995.9" x2="64" y2="995.9" stroke="#555" stroke-width="1"/>
<rect x="67" y="985.4" width="24" height="21" fill="#e8b64a" stroke="#f2ead2" stroke-width="1" stroke-dasharray="2,1.5"/>
<path d="M71.0 991.9h16M71.0 995.9h16M71.0 999.9h16" fill="none" stroke="#3a2e10" stroke-width="1.6"/>
<text x="96.3" y="1002.3" font-size="17.8" fill="#dedede" textLength="204.5" lengthAdjust="spacingAndGlyphs">GAA (400 V power supply)</text>
<path d="M71.2 1031.9h11v-11z" fill="#5c5c5c" stroke="none" stroke-width="1"/>
<line x1="84.2" y1="1024.9" x2="93.2" y2="1024.9" stroke="#555" stroke-width="1"/>
<rect x="96.2" y="1014.4" width="24" height="21" fill="#8fb4cc" stroke="#e8eef2" stroke-width="1" stroke-dasharray="2,1.5"/>
<path d="M103.7 1024.9h9M108.2 1020.4000000000001v9" fill="none" stroke="#2c3a44" stroke-width="1.6"/>
<text x="125.5" y="1031.3" font-size="17.8" fill="#dedede" textLength="129.3" lengthAdjust="spacingAndGlyphs">A1 (Enclosure 1)</text>
<path d="M100.4 1060.9h11v-11z" fill="#5c5c5c" stroke="none" stroke-width="1"/>
<line x1="113.4" y1="1053.9" x2="122.4" y2="1053.9" stroke="#555" stroke-width="1"/>
<rect x="125.4" y="1043.4" width="24" height="21" fill="#f0822a" stroke="#f3e6d6" stroke-width="1" stroke-dasharray="2,1.5"/>
<text x="131.4" y="1059.9" font-size="15" fill="#4a2a10">&amp;</text>
<text x="154.7" y="1060.3" font-size="17.8" fill="#dedede" textLength="308.7" lengthAdjust="spacingAndGlyphs">EFS1 (Electrical engineering schematic)</text>
<line x1="134.6" y1="1082.9" x2="151.6" y2="1082.9" stroke="#555" stroke-width="1"/>
<path d="M155.6 1074.4h16l6 6v11h-22z" fill="#2b2b2b" stroke="#f0f0f0" stroke-width="1.8"/>
<rect x="159.1" y="1078.4" width="9" height="8" fill="#e0001a"/>
<rect x="180" y="1068" width="234.4" height="27.5" fill="#4d4d4d"/>
<text x="183.9" y="1089.3" font-size="17.8" fill="#f4f4f4" font-weight="700" textLength="229.1" lengthAdjust="spacingAndGlyphs">1 400 / 230 V power supply</text>
<line x1="134.6" y1="1111.9" x2="151.6" y2="1111.9" stroke="#555" stroke-width="1"/>
<path d="M155.6 1103.4h16l6 6v11h-22z" fill="#2b2b2b" stroke="#f0f0f0" stroke-width="1.8"/>
<rect x="159.1" y="1107.4" width="9" height="8" fill="#e0001a"/>
<text x="183.9" y="1118.3" font-size="17.8" fill="#dedede" textLength="99.4" lengthAdjust="spacingAndGlyphs">2 Pilot lamps</text>
<path d="M44.0 1134.9l9 6l-9 6z" fill="none" stroke="#6a6a6a" stroke-width="1.3"/>
<line x1="55" y1="1140.9" x2="64" y2="1140.9" stroke="#555" stroke-width="1"/>
<rect x="67" y="1130.4" width="24" height="21" fill="#e8b64a" stroke="#f2ead2" stroke-width="1" stroke-dasharray="2,1.5"/>
<path d="M71.0 1136.9h16M71.0 1140.9h16M71.0 1144.9h16" fill="none" stroke="#3a2e10" stroke-width="1.6"/>
<text x="96.3" y="1147.3" font-size="17.8" fill="#dedede" textLength="260.5" lengthAdjust="spacingAndGlyphs">GAB1 (24 V device power supply)</text>
<path d="M44.0 1163.9l9 6l-9 6z" fill="none" stroke="#6a6a6a" stroke-width="1.3"/>
<line x1="55" y1="1169.9" x2="64" y2="1169.9" stroke="#555" stroke-width="1"/>
<rect x="67" y="1159.4" width="24" height="21" fill="#e8b64a" stroke="#f2ead2" stroke-width="1" stroke-dasharray="2,1.5"/>
<path d="M71.0 1165.9h16M71.0 1169.9h16M71.0 1173.9h16" fill="none" stroke="#3a2e10" stroke-width="1.6"/>
<text x="96.3" y="1176.3" font-size="17.8" fill="#dedede" textLength="250.8" lengthAdjust="spacingAndGlyphs">GAB2 (24 V supply PLC signals)</text>
<path d="M44.0 1192.9l9 6l-9 6z" fill="none" stroke="#6a6a6a" stroke-width="1.3"/>
<line x1="55" y1="1198.9" x2="64" y2="1198.9" stroke="#555" stroke-width="1"/>
<rect x="67" y="1188.4" width="24" height="21" fill="#e8b64a" stroke="#f2ead2" stroke-width="1" stroke-dasharray="2,1.5"/>
<path d="M71.0 1194.9h16M71.0 1198.9h16M71.0 1202.9h16" fill="none" stroke="#3a2e10" stroke-width="1.6"/>
<text x="96.3" y="1205.3" font-size="17.8" fill="#dedede" textLength="231.5" lengthAdjust="spacingAndGlyphs">GQA (Compressed air supply)</text>
<path d="M44.0 1221.9l9 6l-9 6z" fill="none" stroke="#6a6a6a" stroke-width="1.3"/>
<line x1="55" y1="1227.9" x2="64" y2="1227.9" stroke="#555" stroke-width="1"/>
<rect x="67" y="1217.4" width="24" height="21" fill="#e8b64a" stroke="#f2ead2" stroke-width="1" stroke-dasharray="2,1.5"/>
<path d="M71.0 1223.9h16M71.0 1227.9h16M71.0 1231.9h16" fill="none" stroke="#3a2e10" stroke-width="1.6"/>
<text x="96.3" y="1234.3" font-size="17.8" fill="#dedede" textLength="99.4" lengthAdjust="spacingAndGlyphs">EA (Lighting)</text>
<path d="M44.0 1250.9l9 6l-9 6z" fill="none" stroke="#6a6a6a" stroke-width="1.3"/>
<line x1="55" y1="1256.9" x2="64" y2="1256.9" stroke="#555" stroke-width="1"/>
<rect x="67" y="1246.4" width="24" height="21" fill="#e8b64a" stroke="#f2ead2" stroke-width="1" stroke-dasharray="2,1.5"/>
<path d="M71.0 1252.9h16M71.0 1256.9h16M71.0 1260.9h16" fill="none" stroke="#3a2e10" stroke-width="1.6"/>
<text x="96.3" y="1263.3" font-size="17.8" fill="#dedede" textLength="210.3" lengthAdjust="spacingAndGlyphs">F (Emergency-stop control)</text>
<path d="M44.0 1279.9l9 6l-9 6z" fill="none" stroke="#6a6a6a" stroke-width="1.3"/>
<line x1="55" y1="1285.9" x2="64" y2="1285.9" stroke="#555" stroke-width="1"/>
<rect x="67" y="1275.4" width="24" height="21" fill="#e8b64a" stroke="#f2ead2" stroke-width="1" stroke-dasharray="2,1.5"/>
<path d="M71.0 1281.9h16M71.0 1285.9h16M71.0 1289.9h16" fill="none" stroke="#3a2e10" stroke-width="1.6"/>
<text x="96.3" y="1292.3" font-size="17.8" fill="#dedede" textLength="109.0" lengthAdjust="spacingAndGlyphs">EC1 (Cooling)</text>
<path d="M44.0 1308.9l9 6l-9 6z" fill="none" stroke="#6a6a6a" stroke-width="1.3"/>
<line x1="55" y1="1314.9" x2="64" y2="1314.9" stroke="#555" stroke-width="1"/>
<rect x="67" y="1304.4" width="24" height="21" fill="#e8b64a" stroke="#f2ead2" stroke-width="1" stroke-dasharray="2,1.5"/>
<path d="M71.0 1310.9h16M71.0 1314.9h16M71.0 1318.9h16" fill="none" stroke="#3a2e10" stroke-width="1.6"/>
<text x="96.3" y="1321.3" font-size="17.8" fill="#dedede" textLength="147.6" lengthAdjust="spacingAndGlyphs">K1 (PLC controller)</text>
<path d="M44.0 1337.9l9 6l-9 6z" fill="none" stroke="#6a6a6a" stroke-width="1.3"/>
<line x1="55" y1="1343.9" x2="64" y2="1343.9" stroke="#555" stroke-width="1"/>
<rect x="67" y="1333.4" width="24" height="21" fill="#e8b64a" stroke="#f2ead2" stroke-width="1" stroke-dasharray="2,1.5"/>
<path d="M71.0 1339.9h16M71.0 1343.9h16M71.0 1347.9h16" fill="none" stroke="#3a2e10" stroke-width="1.6"/>
<text x="96.3" y="1350.3" font-size="17.8" fill="#dedede" textLength="136.7" lengthAdjust="spacingAndGlyphs">K2 (Valve control)</text>
<path d="M44.0 1366.9l9 6l-9 6z" fill="none" stroke="#6a6a6a" stroke-width="1.3"/>
<line x1="55" y1="1372.9" x2="64" y2="1372.9" stroke="#555" stroke-width="1"/>
<rect x="67" y="1362.4" width="24" height="21" fill="#e8b64a" stroke="#f2ead2" stroke-width="1" stroke-dasharray="2,1.5"/>
<path d="M71.0 1368.9h16M71.0 1372.9h16M71.0 1376.9h16" fill="none" stroke="#3a2e10" stroke-width="1.6"/>
<text x="96.3" y="1379.3" font-size="17.8" fill="#dedede" textLength="260.5" lengthAdjust="spacingAndGlyphs">S1 (Machine operation enclosure)</text>
<path d="M44.0 1395.9l9 6l-9 6z" fill="none" stroke="#6a6a6a" stroke-width="1.3"/>
<line x1="55" y1="1401.9" x2="64" y2="1401.9" stroke="#555" stroke-width="1"/>
<rect x="67" y="1391.4" width="24" height="21" fill="#e8b64a" stroke="#f2ead2" stroke-width="1" stroke-dasharray="2,1.5"/>
<path d="M71.0 1397.9h16M71.0 1401.9h16M71.0 1405.9h16" fill="none" stroke="#3a2e10" stroke-width="1.6"/>
<text x="96.3" y="1408.3" font-size="17.8" fill="#dedede" textLength="284.6" lengthAdjust="spacingAndGlyphs">S2 (Machine operation control panel)</text>
<path d="M44.0 1424.9l9 6l-9 6z" fill="none" stroke="#6a6a6a" stroke-width="1.3"/>
<line x1="55" y1="1430.9" x2="64" y2="1430.9" stroke="#555" stroke-width="1"/>
<rect x="67" y="1420.4" width="24" height="21" fill="#e8b64a" stroke="#f2ead2" stroke-width="1" stroke-dasharray="2,1.5"/>
<path d="M71.0 1426.9h16M71.0 1430.9h16M71.0 1434.9h16" fill="none" stroke="#3a2e10" stroke-width="1.6"/>
<text x="96.3" y="1437.3" font-size="17.8" fill="#dedede" textLength="254.7" lengthAdjust="spacingAndGlyphs">GL1 (Feed workpiece: Transport)</text>
<rect x="67" y="1449.4" width="24" height="8" fill="#e8b64a"/>
</g>
<rect x="0" y="1452" width="618" height="36" fill="#343434"/>
<rect x="1" y="1455" width="49.5" height="33" fill="#3d3d3d" stroke="#4a4a4a" stroke-width="1"/>
<text x="10" y="1478.5" font-size="17.8" fill="#e6e6e6" textLength="31.0" lengthAdjust="spacingAndGlyphs">Tree</text>
<text x="62" y="1478.5" font-size="17.8" fill="#e6e6e6" textLength="25.5" lengthAdjust="spacingAndGlyphs">List</text>
<rect x="0" y="1489" width="618" height="6" fill="#3c3c3c"/>
<rect x="0" y="1496" width="618" height="34" fill="#343434"/>
<text x="4" y="1519" font-size="17.8" fill="#e6e6e6" textLength="311.5" lengthAdjust="spacingAndGlyphs">Graphical preview - ESS_Sample_Project</text>
<path d="M538 1510h11l-5.5 6z" fill="#c8c8c8" stroke="none" stroke-width="1"/>
<path d="M566 1507h8M567.5 1507v7h5v-7M564.5 1514h11M570 1514v6" fill="none" stroke="#c8c8c8" stroke-width="1.8"/>
<path d="M591.5 1508l11 11M602.5 1508l-11 11" fill="none" stroke="#cfcfcf" stroke-width="1.8"/>
<rect x="0" y="1530" width="618" height="440" fill="#3a3a3a"/>
<rect x="2" y="1530" width="610" height="438" fill="#a8a8a8"/>
<rect x="2" y="1532" width="607.5" height="434" fill="#ffffff"/>
<rect x="618" y="246" width="3222" height="41" fill="#262626"/>
<rect x="621" y="280" width="208" height="3.5" fill="#46464e"/>
<text x="632.6" y="270" font-size="17.8" fill="#f2f2f2" font-weight="700" textLength="156.4" lengthAdjust="spacingAndGlyphs">=GAA+A1&amp;EFS1/1</text>
<path d="M809 258.5l10 10M819 258.5l-10 10" fill="none" stroke="#c8c8c8" stroke-width="1.6"/>
<rect x="3770" y="253" width="20" height="19" fill="#333333" stroke="#444" stroke-width="1"/>
<path d="M3774.5 260h11l-5.5 5.5z" fill="#bdbdbd" stroke="none" stroke-width="1"/>
<rect x="3795" y="246" width="45" height="1724" fill="#383838"/>
<rect x="3833" y="246" width="7" height="145" fill="#404040"/>
<text x="0" y="0" font-size="18" fill="#e6e6e6" transform="translate(3811.5,256) rotate(90)" textLength="132" lengthAdjust="spacingAndGlyphs">Property overview</text>
<line x1="618" y1="283.8" x2="3794" y2="283.8" stroke="#444444" stroke-width="1.2"/>
<rect x="618" y="286.5" width="3177" height="1684" fill="#8080f2"/>
<rect x="622" y="290.5" width="2330" height="1640.5" fill="#ffffff"/>
<line x1="2948.7" y1="291" x2="2948.7" y2="1931" stroke="#b8b8b8" stroke-width="1"/>
<rect x="2952" y="290.5" width="6" height="1640.5" fill="#3c3c3c"/>
<rect x="2958" y="290.5" width="834" height="1361.5" fill="#313131"/>
<rect x="2958" y="290.5" width="834" height="36" fill="#363636"/>
<text x="2963" y="314" font-size="17.8" fill="#e6e6e6" textLength="96.0" lengthAdjust="spacingAndGlyphs">Insert center</text>
<path d="M3743 302h11l-5.5 6z" fill="#c8c8c8" stroke="none" stroke-width="1"/>
<path d="M3770 299h8M3771.5 299v7h5v-7M3768.5 306h11M3774 306v6" fill="none" stroke="#c8c8c8" stroke-width="1.8"/>
<rect x="2958" y="326.5" width="834" height="57" fill="#262626"/>
<rect x="2959" y="327.5" width="831" height="36.5" fill="#333333" stroke="#4a4a4a" stroke-width="1.5"/>
<text x="2970" y="353" font-size="17.8" fill="#9a9a9a" textLength="32.5" lengthAdjust="spacingAndGlyphs">Find</text>
<circle cx="3776" cy="344" r="6.5" fill="none" stroke="#1a8ad4" stroke-width="1.8"/>
<line x1="3771.5" y1="348.5" x2="3763" y2="357" stroke="#1a8ad4" stroke-width="2.2"/>
<rect x="2958" y="421.5" width="834" height="10" fill="#262626"/>
<rect x="2959" y="384.5" width="34" height="37" fill="#323232" stroke="#3f3f3f" stroke-width="1.2"/>
<rect x="2999" y="384.5" width="34.5" height="37" fill="#323232" stroke="#3f3f3f" stroke-width="1.2"/>
<rect x="3039" y="384.5" width="751" height="37" fill="#323232" stroke="#3f3f3f" stroke-width="1.2"/>
<path d="M2969 404l7-7l7 7M2971 402v9h10v-9M2974.5 411v-5h3v5" fill="none" stroke="#9a9a9a" stroke-width="1.3"/>
<path d="M3009.5 403.5h13M3015 398l-5.5 5.5l5.5 5.5" fill="none" stroke="#9a9a9a" stroke-width="1.5"/>
<text x="3047" y="409.5" font-size="17.8" fill="#e6e6e6" textLength="49.0" lengthAdjust="spacingAndGlyphs">Home</text>
<path d="M3109.5 397.5l6 6l-6 6z" fill="#e6e6e6" stroke="none" stroke-width="1"/>
<text x="3009" y="467" font-size="17.8" fill="#e6e6e6" textLength="53.5" lengthAdjust="spacingAndGlyphs">Recent</text>
<text x="3009" y="512.05" font-size="17.8" fill="#e6e6e6" textLength="69.5" lengthAdjust="spacingAndGlyphs">Favorites</text>
<text x="3009" y="557.1" font-size="17.8" fill="#e6e6e6" textLength="34.5" lengthAdjust="spacingAndGlyphs">Tags</text>
<text x="3009" y="602.15" font-size="17.8" fill="#e6e6e6" textLength="66.0" lengthAdjust="spacingAndGlyphs">Symbols</text>
<text x="3009" y="647.2" font-size="17.8" fill="#e6e6e6" textLength="60.0" lengthAdjust="spacingAndGlyphs">Devices</text>
<text x="3009" y="692.25" font-size="17.8" fill="#e6e6e6" textLength="264.0" lengthAdjust="spacingAndGlyphs">Window macros / symbol macros</text>
<circle cx="2986" cy="460.5" r="14" fill="none" stroke="#eeeeee" stroke-width="2"/>
<path d="M2988 451v10.5h8" fill="none" stroke="#eeeeee" stroke-width="2"/>
<path d="M2986.5 491.5l3.8 9.5l10 .6l-7.8 6.2l2.8 9.8l-8.8-5.6l-8.8 5.6l2.8-9.8l-7.8-6.2l10-.6z" fill="#eeeeee" stroke="none" stroke-width="1"/>
<path d="M2976.5 564.5v-23.5l10-8l10 8v23.5l-10-7.5z" fill="none" stroke="#eeeeee" stroke-width="1.9"/>
<circle cx="2986.5" cy="544.5" r="2.8" fill="none" stroke="#eeeeee" stroke-width="1.5"/>
<rect x="2975.5" y="590" width="22" height="17" fill="none" stroke="#eeeeee" stroke-width="2"/>
<path d="M2980 590v-5M2992 590v-5M2980 607v5M2992 607v5" fill="none" stroke="#c0203a" stroke-width="1.8"/>
<path d="M2971 629h5l4.5 17h16l3.5-12h-22" fill="none" stroke="#eeeeee" stroke-width="1.9"/>
<circle cx="2982" cy="650" r="2.2" fill="none" stroke="#eeeeee" stroke-width="1.5"/>
<circle cx="2996" cy="650" r="2.2" fill="none" stroke="#eeeeee" stroke-width="1.5"/>
<rect x="2982" y="680" width="14" height="10" fill="none" stroke="#eeeeee" stroke-width="1.8"/>
<rect x="2972" y="672" width="8" height="7" fill="#1a9ae8"/>
<rect x="2995" y="672" width="8" height="7" fill="#1a9ae8"/>
<rect x="2972" y="693" width="8" height="7" fill="#1a9ae8"/>
<rect x="2995" y="693" width="8" height="7" fill="#1a9ae8"/>
<path d="M2984 672v8M2994 672v8M2984 690v9M2994 690v9" fill="none" stroke="#c0203a" stroke-width="1.5"/>
<rect x="2958" y="1652" width="834" height="9" fill="#262626"/>
<rect x="2958" y="1661" width="834" height="4" fill="#3e3e3e"/>
<rect x="2958" y="1665" width="834" height="10" fill="#262626"/>
<rect x="2958" y="1675" width="834" height="34" fill="#333333"/>
<line x1="3375" y1="1681" x2="3375" y2="1709" stroke="#4a4a4a" stroke-width="1"/>
<text x="2967.5" y="1700" font-size="17.8" fill="#e6e6e6" textLength="67.0" lengthAdjust="spacingAndGlyphs">Property</text>
<text x="3384" y="1700" font-size="17.8" fill="#e6e6e6" textLength="42.0" lengthAdjust="spacingAndGlyphs">Value</text>
<rect x="2958" y="1709" width="834" height="214.5" fill="#4a4a4a"/>
<rect x="2958" y="1923.5" width="834" height="7.5" fill="#262626"/>
<rect x="622" y="1931" width="3170" height="35.5" fill="#555555"/>
<text x="630" y="1955" font-size="17.8" fill="#e6e6e6" textLength="85.0" lengthAdjust="spacingAndGlyphs">RX: 105.50</text>
<text x="740" y="1955" font-size="17.8" fill="#e6e6e6" textLength="71.0" lengthAdjust="spacingAndGlyphs">RY: -1.16</text>
<text x="3479" y="1956" font-size="17.8" fill="#e6e6e6" textLength="128.5" lengthAdjust="spacingAndGlyphs">Grid C: 4.00 mm</text>
<text x="3626.5" y="1956" font-size="17.8" fill="#e6e6e6" textLength="70.0" lengthAdjust="spacingAndGlyphs">Logic 1:1</text>
<path d="M3290 1953v-11a7 7 0 0 1 14 0v11" fill="none" stroke="#f0f0f0" stroke-width="3"/>
<circle cx="3290" cy="1956.5" r="2" fill="#1a9ae8" stroke="none" stroke-width="1"/>
<rect x="3313" y="1934.5" width="34" height="28" fill="#3a3a3a"/>
<path d="M3320 1953v-11a7 7 0 0 1 14 0v11" fill="none" stroke="#f0f0f0" stroke-width="3"/>
<path d="M3320 1958v3M3327 1958v3M3334 1958v3M3339 1944v3M3339 1951v3" fill="none" stroke="#f0f0f0" stroke-width="2"/>
<circle cx="3363.5" cy="1948.5" r="6.5" fill="none" stroke="#1a9ae8" stroke-width="1.8"/>
<path d="M3363.5 1938v21M3353 1948.5h21M3360 1948.5h7M3363.5 1945v7" fill="none" stroke="#1a9ae8" stroke-width="1.3"/>
<rect x="3404.3" y="1938.8" width="2.6" height="2.6" fill="#f0f0f0"/>
<rect x="3410.8" y="1938.8" width="2.6" height="2.6" fill="#f0f0f0"/>
<rect x="3417.8" y="1938.8" width="2.6" height="2.6" fill="#f0f0f0"/>
<rect x="3404.3" y="1945.3" width="2.6" height="2.6" fill="#f0f0f0"/>
<rect x="3410.8" y="1945.3" width="2.6" height="2.6" fill="#f0f0f0"/>
<rect x="3417.8" y="1945.3" width="2.6" height="2.6" fill="#f0f0f0"/>
<rect x="3404.3" y="1951.8" width="2.6" height="2.6" fill="#f0f0f0"/>
<rect x="3410.8" y="1951.8" width="2.6" height="2.6" fill="#f0f0f0"/>
<rect x="3417.8" y="1951.8" width="2.6" height="2.6" fill="#f0f0f0"/>
<path d="M3438 1946h6l-3 3.5z" fill="#777" stroke="none" stroke-width="1"/>
<rect x="3731" y="1944" width="8" height="9" fill="none" stroke="#1a9ae8" stroke-width="1.5" stroke-dasharray="2,1.5"/>
<circle cx="3742" cy="1946" r="7.5" fill="none" stroke="#f0f0f0" stroke-width="1.6"/>
<line x1="3747" y1="1951.5" x2="3752" y2="1957" stroke="#f0f0f0" stroke-width="1.8"/>
<circle cx="3775" cy="1946" r="7.5" fill="none" stroke="#f0f0f0" stroke-width="1.6"/>
<line x1="3780" y1="1951.5" x2="3785" y2="1957" stroke="#f0f0f0" stroke-width="1.8"/>
<text x="3765" y="1959.5" font-size="7" fill="#1a9ae8" font-weight="700">100</text>
<rect x="0" y="1970" width="3840" height="32" fill="#555555"/>
<text x="10.3" y="1995.5" font-size="17.8" fill="#e6e6e6" textLength="219.3" lengthAdjust="spacingAndGlyphs">1 400 / 230 V power supply</text>
<text x="3807" y="1996" font-size="14" fill="#e6e6e6">~</text>
<line x1="623.5" y1="291.5" x2="2939" y2="291.5" stroke="#000" stroke-width="1.5"/>
<line x1="623.5" y1="291.5" x2="623.5" y2="1931" stroke="#000" stroke-width="1.2"/>
<line x1="645" y1="291.5" x2="645" y2="1841" stroke="#000" stroke-width="2"/>
<line x1="645" y1="318.3" x2="2938" y2="318.3" stroke="#000" stroke-width="2.2"/>
<line x1="2938.2" y1="291.5" x2="2938.2" y2="1929" stroke="#000" stroke-width="2.6"/>
<line x1="909.7" y1="292" x2="909.7" y2="318" stroke="#000" stroke-width="2"/>
<line x1="1130.3" y1="292" x2="1130.3" y2="318" stroke="#000" stroke-width="2"/>
<line x1="1350.9" y1="292" x2="1350.9" y2="318" stroke="#000" stroke-width="2"/>
<line x1="1571.5" y1="292" x2="1571.5" y2="318" stroke="#000" stroke-width="2"/>
<line x1="1792.1" y1="292" x2="1792.1" y2="318" stroke="#000" stroke-width="2"/>
<line x1="2012.7" y1="292" x2="2012.7" y2="318" stroke="#000" stroke-width="2"/>
<line x1="2233.3" y1="292" x2="2233.3" y2="318" stroke="#000" stroke-width="2"/>
<line x1="2453.9" y1="292" x2="2453.9" y2="318" stroke="#000" stroke-width="2"/>
<line x1="2674.5" y1="292" x2="2674.5" y2="318" stroke="#000" stroke-width="2"/>
<text x="777.35" y="310" font-size="12.5" fill="#000000" text-anchor="middle">0</text>
<text x="1020" y="310" font-size="12.5" fill="#000000" text-anchor="middle">1</text>
<text x="1240.6" y="310" font-size="12.5" fill="#000000" text-anchor="middle">2</text>
<text x="1461.2" y="310" font-size="12.5" fill="#000000" text-anchor="middle">3</text>
<text x="1681.8" y="310" font-size="12.5" fill="#000000" text-anchor="middle">4</text>
<text x="1902.4" y="310" font-size="12.5" fill="#000000" text-anchor="middle">5</text>
<text x="2123" y="310" font-size="12.5" fill="#000000" text-anchor="middle">6</text>
<text x="2343.6" y="310" font-size="12.5" fill="#000000" text-anchor="middle">7</text>
<text x="2564.2" y="310" font-size="12.5" fill="#000000" text-anchor="middle">8</text>
<text x="2806.35" y="310" font-size="12.5" fill="#000000" text-anchor="middle">9</text>
<text x="0" y="0" font-size="12.6" fill="#000" transform="translate(637.5,1837) rotate(-90)" textLength="958" lengthAdjust="spacingAndGlyphs">Protected by copyright. Passing on as well as reproduction of this document, its utilization and communication of its contents are prohibited in as far as not expressly permitted.</text>
<text x="653" y="1834.2" font-size="17" fill="#000000" textLength="108.4" lengthAdjust="spacingAndGlyphs">=+B4&amp;EPA1/1</text>
<text x="2902" y="1833" font-size="17" fill="#000000">2</text>
<line x1="623.5" y1="1840.6" x2="2938.2" y2="1840.6" stroke="#000" stroke-width="2.5"/>
<line x1="623.5" y1="1927.7" x2="2938.2" y2="1927.7" stroke="#000" stroke-width="3"/>
<line x1="733" y1="1840.6" x2="733" y2="1927.7" stroke="#000" stroke-width="2"/>
<line x1="843" y1="1840.6" x2="843" y2="1927.7" stroke="#000" stroke-width="2"/>
<line x1="953.5" y1="1840.6" x2="953.5" y2="1927.7" stroke="#000" stroke-width="2"/>
<line x1="1394" y1="1840.6" x2="1394" y2="1927.7" stroke="#000" stroke-width="2"/>
<line x1="1659" y1="1840.6" x2="1659" y2="1927.7" stroke="#000" stroke-width="2"/>
<line x1="1990" y1="1840.6" x2="1990" y2="1927.7" stroke="#000" stroke-width="2"/>
<line x1="2343" y1="1840.6" x2="2343" y2="1927.7" stroke="#000" stroke-width="2"/>
<line x1="2541" y1="1840.6" x2="2541" y2="1927.7" stroke="#000" stroke-width="2"/>
<line x1="2739.5" y1="1840.6" x2="2739.5" y2="1927.7" stroke="#000" stroke-width="2"/>
<line x1="623.5" y1="1862" x2="953.5" y2="1862" stroke="#000" stroke-width="1.8"/>
<line x1="623.5" y1="1883.5" x2="953.5" y2="1883.5" stroke="#000" stroke-width="1.8"/>
<line x1="623.5" y1="1905.5" x2="953.5" y2="1905.5" stroke="#000" stroke-width="1.8"/>
<line x1="953.5" y1="1862" x2="1394" y2="1862" stroke="#000" stroke-width="1.8"/>
<line x1="953.5" y1="1905.5" x2="1394" y2="1905.5" stroke="#000" stroke-width="1.8"/>
<line x1="1394" y1="1876" x2="1659" y2="1876" stroke="#000" stroke-width="2.6"/>
<line x1="1394" y1="1905.5" x2="1659" y2="1905.5" stroke="#000" stroke-width="1.8"/>
<line x1="1990" y1="1905.5" x2="2343" y2="1905.5" stroke="#000" stroke-width="1.8"/>
<line x1="2119" y1="1905.5" x2="2119" y2="1927.7" stroke="#000" stroke-width="1.6"/>
<line x1="2343" y1="1862" x2="2938.2" y2="1862" stroke="#000" stroke-width="1.8"/>
<line x1="2343" y1="1884" x2="2938.2" y2="1884" stroke="#000" stroke-width="1.8"/>
<line x1="2343" y1="1906" x2="2938.2" y2="1906" stroke="#000" stroke-width="1.8"/>
<text x="629" y="1921.7" font-size="13" fill="#000000" textLength="64.0" lengthAdjust="spacingAndGlyphs">Modification</text>
<text x="738.8" y="1921.7" font-size="13" fill="#000000" textLength="24.2" lengthAdjust="spacingAndGlyphs">Date</text>
<text x="849" y="1921.7" font-size="13" fill="#000000" textLength="31.5" lengthAdjust="spacingAndGlyphs">Name</text>
<text x="957.8" y="1855.5" font-size="13" fill="#000000" textLength="71.7" lengthAdjust="spacingAndGlyphs">Project name</text>
<text x="1061" y="1855.5" font-size="13" fill="#000000" textLength="111.0" lengthAdjust="spacingAndGlyphs">ESS_Sample_Project</text>
<text x="958.7" y="1879" font-size="17.5" fill="#000000" textLength="132.3" lengthAdjust="spacingAndGlyphs">Grinding machine</text>
<text x="957.8" y="1921.7" font-size="13" fill="#000000" textLength="39.7" lengthAdjust="spacingAndGlyphs">Creator</text>
<text x="1061" y="1921.7" font-size="13" fill="#000000" textLength="19.0" lengthAdjust="spacingAndGlyphs">EPL</text>
<text x="1397.6" y="1851" font-size="13" fill="#000000" textLength="64.4" lengthAdjust="spacingAndGlyphs">Job number</text>
<text x="1397.6" y="1869.6" font-size="13" fill="#000000" textLength="19.9" lengthAdjust="spacingAndGlyphs">001</text>
<text x="1397.6" y="1886.7" font-size="13" fill="#000000" textLength="90.9" lengthAdjust="spacingAndGlyphs">Drawing number</text>
<text x="1397.6" y="1920.8" font-size="13" fill="#000000" textLength="68.9" lengthAdjust="spacingAndGlyphs">Approved by</text>
<text x="1664" y="1861" font-size="16.5" fill="#000000" textLength="174.0" lengthAdjust="spacingAndGlyphs">EPLAN GmbH &amp; Co. KG</text>
<text x="1993" y="1860" font-size="17" fill="#000000" textLength="193.6" lengthAdjust="spacingAndGlyphs">400 / 230 V power supply</text>
<text x="1995" y="1920.5" font-size="13" fill="#000000" textLength="24.5" lengthAdjust="spacingAndGlyphs">Date</text>
<text x="2068" y="1920.5" font-size="13" fill="#000000" textLength="49.6" lengthAdjust="spacingAndGlyphs">7/1/2021</text>
<text x="2123" y="1920.5" font-size="13" fill="#000000" textLength="18.0" lengthAdjust="spacingAndGlyphs">Ed.</text>
<text x="2320" y="1920.5" font-size="13" fill="#000000" textLength="19.0" lengthAdjust="spacingAndGlyphs">EPL</text>
<text x="2544" y="1855" font-size="13" fill="#000000" textLength="30.0" lengthAdjust="spacingAndGlyphs">=GAA</text>
<text x="2544" y="1874.8" font-size="10" fill="#000000" textLength="78.5" lengthAdjust="spacingAndGlyphs">400 V power supply</text>
<text x="2544" y="1898" font-size="13" fill="#000000" textLength="21.0" lengthAdjust="spacingAndGlyphs">+A1</text>
<text x="2544" y="1918.5" font-size="10" fill="#000000" textLength="44.0" lengthAdjust="spacingAndGlyphs">Enclosure 1</text>
<text x="2743.6" y="1855" font-size="13" fill="#000000" textLength="34.4" lengthAdjust="spacingAndGlyphs">&amp;EFS1</text>
<text x="2743.6" y="1874.8" font-size="10" fill="#000000" textLength="125.4" lengthAdjust="spacingAndGlyphs">Electrical engineering schematic</text>
<text x="2743.6" y="1898" font-size="13" fill="#000000" textLength="28.4" lengthAdjust="spacingAndGlyphs">Page</text>
<text x="2933" y="1898" font-size="13" fill="#000000" text-anchor="end">1</text>
<text x="2743.6" y="1920.5" font-size="13" fill="#000000" textLength="28.4" lengthAdjust="spacingAndGlyphs">Page</text>
<text x="2818" y="1920.5" font-size="13" fill="#000000" textLength="19.0" lengthAdjust="spacingAndGlyphs">211</text>
<text x="2849.4" y="1920.5" font-size="13" fill="#000000" textLength="25.6" lengthAdjust="spacingAndGlyphs">from</text>
<text x="2912.5" y="1920.5" font-size="13" fill="#000000" textLength="19.5" lengthAdjust="spacingAndGlyphs">338</text>
<rect x="1917" y="1842" width="58.5" height="44.6" fill="#e1101a"/>
<line x1="1940.3" y1="1846.7" x2="1931.8" y2="1869.7" stroke="#7a0a10" stroke-width="7.6" stroke-linecap="round"/>
<line x1="1940.3" y1="1846.7" x2="1931.8" y2="1869.7" stroke="#ffffff" stroke-width="5.6" stroke-linecap="round"/>
<line x1="1950.2" y1="1847" x2="1937.5" y2="1882.4" stroke="#7a0a10" stroke-width="7.6" stroke-linecap="round"/>
<line x1="1950.2" y1="1847" x2="1937.5" y2="1882.4" stroke="#ffffff" stroke-width="5.6" stroke-linecap="round"/>
<line x1="1961.5" y1="1847.7" x2="1949.5" y2="1882.7" stroke="#7a0a10" stroke-width="7.6" stroke-linecap="round"/>
<line x1="1961.5" y1="1847.7" x2="1949.5" y2="1882.7" stroke="#ffffff" stroke-width="5.6" stroke-linecap="round"/>
<text x="1916" y="1909" font-size="26" font-weight="700" font-style="italic" fill="#e1101a" textLength="18" lengthAdjust="spacingAndGlyphs">e</text>
<text x="1936" y="1905.7" font-size="16.5" font-weight="700" font-style="italic" fill="#111" textLength="39" lengthAdjust="spacingAndGlyphs">PLAN</text>
<line x1="1930" y1="1909" x2="1975" y2="1909" stroke="#111" stroke-width="2"/>
<rect x="1917" y="1913.9" width="58.5" height="9.9" fill="#e1101a"/>
<polyline points="755,957.8 755,538.7 1108.7,538.7" fill="none" stroke="#000" stroke-width="3"/>
<line x1="1261" y1="538.7" x2="2695.8" y2="538.7" stroke="#000" stroke-width="3"/>
<polyline points="755,1332.4 755,1595 1064,1595" fill="none" stroke="#000" stroke-width="3"/>
<rect x="656" y="957.8" width="408" height="374.6" fill="#fff" stroke="#222" stroke-width="2"/>
<text x="854.5" y="1001.6" font-size="33" fill="#000000" font-weight="700" text-anchor="middle" textLength="171" lengthAdjust="spacingAndGlyphs">CAUTION!</text>
<path d="M774.8 1171.8L941.9 1171.8L858.3 1025.2z" fill="#fbd51a" stroke="#fbd51a" stroke-width="10.6" stroke-linejoin="round"/>
<path d="M781.5 1166L935.2 1166L858.3 1031.9z" fill="none" stroke="#111" stroke-width="11.7" stroke-linejoin="round"/>
<path d="M851.4 1071.3L864.8 1071.3L855 1103L870.2 1096.3L861.5 1131L866 1133L854.5 1150L849.8 1131.5L856 1131.5L860.8 1109L840.4 1115.7z" fill="#111" stroke="none" stroke-width="1"/>
<text x="667" y="1224" font-size="25.5" fill="#000000" font-weight="700" textLength="369.0" lengthAdjust="spacingAndGlyphs">Remains energized when main</text>
<text x="667" y="1252" font-size="25.5" fill="#000000" font-weight="700" textLength="200.5" lengthAdjust="spacingAndGlyphs">switch is opened</text>
<polyline points="1152,420 1152,362.7 2688,362.7" fill="none" stroke="#000" stroke-width="1.7"/>
<polyline points="1196,420 1196,384.7 2688,384.7" fill="none" stroke="#000" stroke-width="1.7"/>
<polyline points="1240,420 1240,406.6 2688,406.6" fill="none" stroke="#000" stroke-width="1.7"/>
<path d="M2687 356.2L2706 362.7L2687 369.2z" fill="#ff0000" stroke="none" stroke-width="1"/>
<text x="2711.6" y="368.7" font-size="17" fill="#0000e6" textLength="34.4" lengthAdjust="spacingAndGlyphs">-2L1</text>
<text x="2749" y="369.2" font-size="12.5" fill="#7ba05b" textLength="26.5" lengthAdjust="spacingAndGlyphs">/ 2.0</text>
<path d="M2687 378.2L2706 384.7L2687 391.2z" fill="#ff0000" stroke="none" stroke-width="1"/>
<text x="2711.6" y="390.7" font-size="17" fill="#0000e6" textLength="34.4" lengthAdjust="spacingAndGlyphs">-2L2</text>
<text x="2749" y="391.2" font-size="12.5" fill="#7ba05b" textLength="26.5" lengthAdjust="spacingAndGlyphs">/ 2.0</text>
<path d="M2687 400.1L2706 406.6L2687 413.1z" fill="#ff0000" stroke="none" stroke-width="1"/>
<text x="2711.6" y="412.6" font-size="17" fill="#0000e6" textLength="34.4" lengthAdjust="spacingAndGlyphs">-2L3</text>
<text x="2749" y="413.1" font-size="12.5" fill="#7ba05b" textLength="26.5" lengthAdjust="spacingAndGlyphs">/ 2.0</text>
<line x1="1872" y1="355.7" x2="1886" y2="369.7" stroke="#dd1111" stroke-width="1.6"/>
<text x="1888" y="345.7" font-size="10" fill="#dd1111" textLength="10.7" lengthAdjust="spacingAndGlyphs">BK</text>
<text x="1888" y="357.7" font-size="10" fill="#dd1111" textLength="4.4" lengthAdjust="spacingAndGlyphs">4</text>
<line x1="1894" y1="377.7" x2="1908" y2="391.7" stroke="#dd1111" stroke-width="1.6"/>
<text x="1910" y="367.7" font-size="10" fill="#dd1111" textLength="10.7" lengthAdjust="spacingAndGlyphs">BK</text>
<text x="1910" y="379.7" font-size="10" fill="#dd1111" textLength="4.4" lengthAdjust="spacingAndGlyphs">4</text>
<line x1="1916.6" y1="399.6" x2="1930.6" y2="413.6" stroke="#dd1111" stroke-width="1.6"/>
<text x="1932.6" y="389.6" font-size="10" fill="#dd1111" textLength="10.7" lengthAdjust="spacingAndGlyphs">BK</text>
<text x="1932.6" y="401.6" font-size="10" fill="#dd1111" textLength="4.4" lengthAdjust="spacingAndGlyphs">4</text>
<line x1="1152" y1="420" x2="1152" y2="439.6" stroke="#0000e6" stroke-width="1.7"/>
<text x="0" y="0" font-size="12.5" fill="#000000" transform="translate(1148,432) rotate(-90)">2</text>
<line x1="1196" y1="420" x2="1196" y2="439.6" stroke="#0000e6" stroke-width="1.7"/>
<text x="0" y="0" font-size="12.5" fill="#000000" transform="translate(1192,432) rotate(-90)">4</text>
<line x1="1240" y1="420" x2="1240" y2="439.6" stroke="#0000e6" stroke-width="1.7"/>
<text x="0" y="0" font-size="12.5" fill="#000000" transform="translate(1236,432) rotate(-90)">6</text>
<rect x="1130" y="439.6" width="132" height="44.4" fill="none" stroke="#0000e6" stroke-width="2"/>
<line x1="1130" y1="462" x2="1262" y2="462" stroke="#0000e6" stroke-width="2"/>
<line x1="1174" y1="439.6" x2="1174" y2="484" stroke="#0000e6" stroke-width="2"/>
<line x1="1218" y1="439.6" x2="1218" y2="484" stroke="#0000e6" stroke-width="2"/>
<text x="1145" y="456.5" font-size="13" fill="#0000e6" font-family="Liberation Serif">I&gt;</text>
<polyline points="1152,467 1163,467 1163,478.5 1152,478.5 1152,484" fill="none" stroke="#0000e6" stroke-width="2"/>
<line x1="1152" y1="484" x2="1138.5" y2="508.3" stroke="#0000e6" stroke-width="2"/>
<line x1="1147" y1="503" x2="1157" y2="513" stroke="#0000e6" stroke-width="1.8"/>
<line x1="1157" y1="503" x2="1147" y2="513" stroke="#0000e6" stroke-width="1.8"/>
<line x1="1152" y1="508" x2="1152" y2="527" stroke="#0000e6" stroke-width="1.7"/>
<text x="1189" y="456.5" font-size="13" fill="#0000e6" font-family="Liberation Serif">I&gt;</text>
<polyline points="1196,467 1207,467 1207,478.5 1196,478.5 1196,484" fill="none" stroke="#0000e6" stroke-width="2"/>
<line x1="1196" y1="484" x2="1182.5" y2="508.3" stroke="#0000e6" stroke-width="2"/>
<line x1="1191" y1="503" x2="1201" y2="513" stroke="#0000e6" stroke-width="1.8"/>
<line x1="1201" y1="503" x2="1191" y2="513" stroke="#0000e6" stroke-width="1.8"/>
<line x1="1196" y1="508" x2="1196" y2="527" stroke="#0000e6" stroke-width="1.7"/>
<text x="1233" y="456.5" font-size="13" fill="#0000e6" font-family="Liberation Serif">I&gt;</text>
<polyline points="1240,467 1251,467 1251,478.5 1240,478.5 1240,484" fill="none" stroke="#0000e6" stroke-width="2"/>
<line x1="1240" y1="484" x2="1226.5" y2="508.3" stroke="#0000e6" stroke-width="2"/>
<line x1="1235" y1="503" x2="1245" y2="513" stroke="#0000e6" stroke-width="1.8"/>
<line x1="1245" y1="503" x2="1235" y2="513" stroke="#0000e6" stroke-width="1.8"/>
<line x1="1240" y1="508" x2="1240" y2="527" stroke="#0000e6" stroke-width="1.7"/>
<g stroke-dasharray="6,5">
<line x1="1108" y1="450" x2="1108" y2="507" stroke="#0000e6" stroke-width="2"/>
<line x1="1108" y1="450.8" x2="1130" y2="450.8" stroke="#0000e6" stroke-width="2"/>
<line x1="1108" y1="473" x2="1130" y2="473" stroke="#0000e6" stroke-width="2"/>
<line x1="1117" y1="494.7" x2="1236" y2="494.7" stroke="#0000e6" stroke-width="2"/>
</g>
<rect x="1099.5" y="486" width="17" height="17" fill="none" stroke="#0000e6" stroke-width="1.8"/>
<line x1="1108" y1="486" x2="1108" y2="503" stroke="#0000e6" stroke-width="1.6"/>
<line x1="1099.5" y1="494.5" x2="1116.5" y2="494.5" stroke="#0000e6" stroke-width="1.6"/>
<polyline points="1072,489 1078,489 1078,500 1088,500" fill="none" stroke="#0000e6" stroke-width="1.8"/>
<polyline points="1090,494 1093,499 1097,494" fill="none" stroke="#0000e6" stroke-width="1.6"/>
<text x="0" y="0" font-size="12.5" fill="#000000" transform="translate(1148,520) rotate(-90)">1</text>
<text x="0" y="0" font-size="12.5" fill="#000000" transform="translate(1192,520) rotate(-90)">3</text>
<text x="0" y="0" font-size="12.5" fill="#000000" transform="translate(1236,520) rotate(-90)">5</text>
<text x="1040.8" y="436.3" font-size="16.5" fill="#0000e6" textLength="33.2" lengthAdjust="spacingAndGlyphs">-FC1</text>
<text x="1025.8" y="451" font-size="13" fill="#000000" textLength="48.9" lengthAdjust="spacingAndGlyphs">In = 32A</text>
<line x1="1152" y1="527" x2="1152" y2="1613" stroke="#000" stroke-width="1.7"/>
<line x1="1145" y1="773" x2="1159" y2="787" stroke="#dd1111" stroke-width="1.6"/>
<line x1="1196" y1="527" x2="1196" y2="1613" stroke="#000" stroke-width="1.7"/>
<line x1="1189" y1="773" x2="1203" y2="787" stroke="#dd1111" stroke-width="1.6"/>
<line x1="1240" y1="527" x2="1240" y2="1613" stroke="#000" stroke-width="1.7"/>
<line x1="1233" y1="773" x2="1247" y2="787" stroke="#dd1111" stroke-width="1.6"/>
<text x="1161" y="765" font-size="10" fill="#dd1111" textLength="10.7" lengthAdjust="spacingAndGlyphs">BK</text>
<text x="1161" y="777" font-size="10" fill="#dd1111" textLength="4.4" lengthAdjust="spacingAndGlyphs">6</text>
<text x="1205" y="765" font-size="10" fill="#dd1111" textLength="10.7" lengthAdjust="spacingAndGlyphs">BK</text>
<text x="1205" y="777" font-size="10" fill="#dd1111" textLength="4.4" lengthAdjust="spacingAndGlyphs">6</text>
<text x="1249" y="765" font-size="10" fill="#dd1111" textLength="10.7" lengthAdjust="spacingAndGlyphs">BK</text>
<text x="1249" y="777" font-size="10" fill="#dd1111" textLength="4.4" lengthAdjust="spacingAndGlyphs">6</text>
<polyline points="1152,549.7 1163.5,561 2688,561" fill="none" stroke="#000" stroke-width="1.7"/>
<polyline points="1196,571.7 1207.5,583 2688,583" fill="none" stroke="#000" stroke-width="1.7"/>
<polyline points="1240,593.5 1251.5,604.8 1681,604.8 1681,627" fill="none" stroke="#000" stroke-width="1.7"/>
<path d="M2687 554.5L2706 561L2687 567.5z" fill="#ff0000" stroke="none" stroke-width="1"/>
<text x="2711.6" y="567" font-size="17" fill="#0000e6" textLength="34.4" lengthAdjust="spacingAndGlyphs">-1L1</text>
<text x="2749" y="567.5" font-size="12.5" fill="#7ba05b" textLength="54.5" lengthAdjust="spacingAndGlyphs">/ =EA/1.0</text>
<path d="M2687 576.5L2706 583L2687 589.5z" fill="#ff0000" stroke="none" stroke-width="1"/>
<text x="2711.6" y="589" font-size="17" fill="#0000e6" textLength="34.4" lengthAdjust="spacingAndGlyphs">-1L2</text>
<text x="2749" y="589.5" font-size="12.5" fill="#7ba05b" textLength="54.5" lengthAdjust="spacingAndGlyphs">/ =EA/1.0</text>
<line x1="1872" y1="554" x2="1886" y2="568" stroke="#dd1111" stroke-width="1.6"/>
<text x="1888" y="546" font-size="10" fill="#dd1111" textLength="12.4" lengthAdjust="spacingAndGlyphs">OG</text>
<text x="1888" y="558" font-size="10" fill="#dd1111" textLength="4.4" lengthAdjust="spacingAndGlyphs">6</text>
<line x1="1916.6" y1="576" x2="1930.6" y2="590" stroke="#dd1111" stroke-width="1.6"/>
<text x="1932.6" y="568" font-size="10" fill="#dd1111" textLength="12.4" lengthAdjust="spacingAndGlyphs">OG</text>
<text x="1932.6" y="580" font-size="10" fill="#dd1111" textLength="4.4" lengthAdjust="spacingAndGlyphs">6</text>
<line x1="1433" y1="597.8" x2="1447" y2="611.8" stroke="#dd1111" stroke-width="1.6"/>
<text x="1449" y="589.8" font-size="10" fill="#dd1111" textLength="12.4" lengthAdjust="spacingAndGlyphs">OG</text>
<text x="1449" y="601.8" font-size="10" fill="#dd1111" textLength="4.4" lengthAdjust="spacingAndGlyphs">6</text>
<line x1="1681" y1="627" x2="1681" y2="638" stroke="#0000e6" stroke-width="1.7"/>
<line x1="1667.4" y1="636" x2="1681" y2="660.5" stroke="#0000e6" stroke-width="2"/>
<line x1="1681" y1="660.5" x2="1681" y2="671.5" stroke="#0000e6" stroke-width="1.7"/>
<line x1="1681" y1="671.5" x2="1681" y2="715.4" stroke="#000" stroke-width="1.7"/>
<polyline points="1640.3,662.6 1650.3,657.3 1645,647.2 1654.7,642.2 1659.7,651.9 1671.8,645.5" fill="none" stroke="#0000e6" stroke-width="1.8"/>
<line x1="1675.1" y1="651.9" x2="1655" y2="662" stroke="#0000e6" stroke-width="1.8"/>
<path d="M1643.3 668.6L1650 658.5L1656.5 664.5z" fill="#0000e6" stroke="none" stroke-width="1"/>
<text x="0" y="0" font-size="12.5" fill="#000000" transform="translate(1677,633) rotate(-90)">1</text>
<text x="0" y="0" font-size="12.5" fill="#000000" transform="translate(1677,668) rotate(-90)">2</text>
<text x="1597.6" y="655.6" font-size="16.5" fill="#0000e6" textLength="33.4" lengthAdjust="spacingAndGlyphs">-FC5</text>
<text x="1607" y="672" font-size="13" fill="#000000" textLength="24.0" lengthAdjust="spacingAndGlyphs">16 A</text>
<circle cx="1725" cy="649" r="6.5" fill="#fff" stroke="#0000e6" stroke-width="1.8"/>
<line x1="1715" y1="649" x2="1735" y2="649" stroke="#0000e6" stroke-width="1.8"/>
<text x="1705.4" y="641" font-size="13" fill="#000000" textLength="39.6" lengthAdjust="spacingAndGlyphs">-WE2:9</text>
<line x1="1725" y1="655.5" x2="1725" y2="731.5" stroke="#0000e6" stroke-width="1.7"/>
<line x1="1674" y1="686" x2="1688" y2="700" stroke="#dd1111" stroke-width="1.6"/>
<text x="1690" y="681" font-size="10" fill="#dd1111" textLength="10.7" lengthAdjust="spacingAndGlyphs">BK</text>
<text x="1690" y="692.5" font-size="10" fill="#dd1111" textLength="11.1" lengthAdjust="spacingAndGlyphs">1,5</text>
<line x1="1718" y1="686" x2="1732" y2="700" stroke="#dd1111" stroke-width="1.6"/>
<text x="1734" y="681" font-size="10" fill="#dd1111" textLength="11.1" lengthAdjust="spacingAndGlyphs">BU</text>
<text x="1734" y="692.5" font-size="10" fill="#dd1111" textLength="11.1" lengthAdjust="spacingAndGlyphs">1,5</text>
<rect x="1637" y="715.4" width="970" height="176.1" fill="none" stroke="#0000e6" stroke-width="2"/>
<line x1="1681" y1="715.4" x2="1681" y2="731.5" stroke="#0000e6" stroke-width="1.7"/>
<circle cx="1681" cy="737.5" r="6" fill="#fff" stroke="#0000e6" stroke-width="1.6"/>
<circle cx="1725" cy="737.5" r="6" fill="#fff" stroke="#0000e6" stroke-width="1.6"/>
<text x="1681" y="755" font-size="13" fill="#000000" text-anchor="middle">20</text>
<text x="1725" y="758" font-size="13" fill="#000000" text-anchor="middle">22</text>
<text x="1669" y="772" font-size="12" fill="#8a8a8a" textLength="68.5" lengthAdjust="spacingAndGlyphs">AUX SUPPLY</text>
<text x="1595.6" y="734.5" font-size="16.5" fill="#0000e6" textLength="32.4" lengthAdjust="spacingAndGlyphs">-PF1</text>
<text x="1607" y="751.6" font-size="13" fill="#7ba05b" textLength="21.0" lengthAdjust="spacingAndGlyphs">/1.8</text>
<rect x="2050.2" y="717.7" width="32.7" height="33.3" fill="#000" rx="3.5"/>
<rect x="2054.9" y="721.8" width="10.3" height="25.4" fill="#fff"/>
<path d="M2068 721.8h1.5a10.3 10.25 0 0 1 0 20.5h-1.5z" fill="#fff" stroke="none" stroke-width="1"/>
<circle cx="2066.7" cy="732" r="4.2" fill="#fff" stroke="#000" stroke-width="3"/>
<text x="2084.7" y="733.6" font-size="22" fill="#000" font-weight="700" textLength="97.3" lengthAdjust="spacingAndGlyphs" stroke="#000" stroke-width="1.3">PHOENIX</text>
<text x="2084.7" y="751" font-size="22" fill="#000" font-weight="700" textLength="97.3" lengthAdjust="spacingAndGlyphs" stroke="#000" stroke-width="1.3">CONTACT</text>
<text x="1702.7" y="844.8" font-size="12.5" fill="#8a8a8a" text-anchor="middle" font-family="Liberation Serif">I1</text>
<text x="1813" y="844.8" font-size="12.5" fill="#8a8a8a" text-anchor="middle" font-family="Liberation Serif">I2</text>
<text x="1923.4" y="844.8" font-size="12.5" fill="#8a8a8a" text-anchor="middle" font-family="Liberation Serif">I3</text>
<text x="2297.8" y="844.7" font-size="12" fill="#8a8a8a" textLength="45.2" lengthAdjust="spacingAndGlyphs">OUTPUT</text>
<text x="2391.6" y="844.7" font-size="12" fill="#8a8a8a" textLength="33.9" lengthAdjust="spacingAndGlyphs">INPUT</text>
<line x1="1681" y1="876" x2="1681" y2="891.5" stroke="#0000e6" stroke-width="1.7"/>
<circle cx="1681" cy="869.8" r="6" fill="#fff" stroke="#0000e6" stroke-width="1.6"/>
<text x="1681" y="861.6" font-size="13" fill="#000000" text-anchor="middle">1</text>
<text x="1691" y="875.2" font-size="13" fill="#0000e6">S1</text>
<line x1="1725" y1="876" x2="1725" y2="891.5" stroke="#0000e6" stroke-width="1.7"/>
<circle cx="1725" cy="869.8" r="6" fill="#fff" stroke="#0000e6" stroke-width="1.6"/>
<text x="1725" y="861.6" font-size="13" fill="#000000" text-anchor="middle">3</text>
<text x="1735" y="875.2" font-size="13" fill="#0000e6">S2</text>
<line x1="1791" y1="876" x2="1791" y2="891.5" stroke="#0000e6" stroke-width="1.7"/>
<circle cx="1791" cy="869.8" r="6" fill="#fff" stroke="#0000e6" stroke-width="1.6"/>
<text x="1791" y="861.6" font-size="13" fill="#000000" text-anchor="middle">5</text>
<text x="1801" y="875.2" font-size="13" fill="#0000e6">S1</text>
<line x1="1835" y1="876" x2="1835" y2="891.5" stroke="#0000e6" stroke-width="1.7"/>
<circle cx="1835" cy="869.8" r="6" fill="#fff" stroke="#0000e6" stroke-width="1.6"/>
<text x="1835" y="861.6" font-size="13" fill="#000000" text-anchor="middle">7</text>
<text x="1845" y="875.2" font-size="13" fill="#0000e6">S2</text>
<line x1="1901.6" y1="876" x2="1901.6" y2="891.5" stroke="#0000e6" stroke-width="1.7"/>
<circle cx="1901.6" cy="869.8" r="6" fill="#fff" stroke="#0000e6" stroke-width="1.6"/>
<text x="1901.6" y="861.6" font-size="13" fill="#000000" text-anchor="middle">9</text>
<text x="1911.6" y="875.2" font-size="13" fill="#0000e6">S1</text>
<line x1="1945.6" y1="876" x2="1945.6" y2="891.5" stroke="#0000e6" stroke-width="1.7"/>
<circle cx="1945.6" cy="869.8" r="6" fill="#fff" stroke="#0000e6" stroke-width="1.6"/>
<text x="1945.6" y="861.6" font-size="13" fill="#000000" text-anchor="middle">11</text>
<text x="1955.6" y="875.2" font-size="13" fill="#0000e6">S2</text>
<line x1="2011.7" y1="876" x2="2011.7" y2="891.5" stroke="#0000e6" stroke-width="1.7"/>
<circle cx="2011.7" cy="869.8" r="6" fill="#fff" stroke="#0000e6" stroke-width="1.6"/>
<text x="2011.7" y="861.6" font-size="13" fill="#000000" text-anchor="middle">12</text>
<text x="2021.7" y="875.2" font-size="13" fill="#0000e6">V1</text>
<line x1="2056" y1="876" x2="2056" y2="891.5" stroke="#0000e6" stroke-width="1.7"/>
<circle cx="2056" cy="869.8" r="6" fill="#fff" stroke="#0000e6" stroke-width="1.6"/>
<text x="2056" y="861.6" font-size="13" fill="#000000" text-anchor="middle">14</text>
<text x="2066" y="875.2" font-size="13" fill="#0000e6">V2</text>
<line x1="2100" y1="876" x2="2100" y2="891.5" stroke="#0000e6" stroke-width="1.7"/>
<circle cx="2100" cy="869.8" r="6" fill="#fff" stroke="#0000e6" stroke-width="1.6"/>
<text x="2100" y="861.6" font-size="13" fill="#000000" text-anchor="middle">16</text>
<text x="2110" y="875.2" font-size="13" fill="#0000e6">V3</text>
<line x1="2144" y1="876" x2="2144" y2="891.5" stroke="#0000e6" stroke-width="1.7"/>
<circle cx="2144" cy="869.8" r="6" fill="#fff" stroke="#0000e6" stroke-width="1.6"/>
<text x="2144" y="861.6" font-size="13" fill="#000000" text-anchor="middle">2</text>
<text x="2154" y="875.2" font-size="13" fill="#0000e6">VN</text>
<line x1="2188" y1="876" x2="2188" y2="891.5" stroke="#0000e6" stroke-width="1.7"/>
<circle cx="2188" cy="869.8" r="6" fill="#fff" stroke="#0000e6" stroke-width="1.6"/>
<text x="2188" y="861.6" font-size="13" fill="#000000" text-anchor="middle">18</text>
<text x="2198" y="875.2" font-size="13" fill="#0000e6">PE</text>
<line x1="2298" y1="876" x2="2298" y2="891.5" stroke="#0000e6" stroke-width="1.7"/>
<circle cx="2298" cy="869.8" r="6" fill="#fff" stroke="#0000e6" stroke-width="1.6"/>
<text x="2298" y="861.6" font-size="13" fill="#000000" text-anchor="middle">4</text>
<text x="2308" y="875.2" font-size="13" fill="#0000e6">+</text>
<line x1="2342.6" y1="876" x2="2342.6" y2="891.5" stroke="#0000e6" stroke-width="1.7"/>
<circle cx="2342.6" cy="869.8" r="6" fill="#fff" stroke="#0000e6" stroke-width="1.6"/>
<text x="2342.6" y="861.6" font-size="13" fill="#000000" text-anchor="middle">6</text>
<text x="2352.6" y="875.2" font-size="13" fill="#0000e6">-</text>
<line x1="2386.7" y1="876" x2="2386.7" y2="891.5" stroke="#0000e6" stroke-width="1.7"/>
<circle cx="2386.7" cy="869.8" r="6" fill="#fff" stroke="#0000e6" stroke-width="1.6"/>
<text x="2386.7" y="861.6" font-size="13" fill="#000000" text-anchor="middle">8</text>
<line x1="2431" y1="876" x2="2431" y2="891.5" stroke="#0000e6" stroke-width="1.7"/>
<circle cx="2431" cy="869.8" r="6" fill="#fff" stroke="#0000e6" stroke-width="1.6"/>
<text x="2431" y="861.6" font-size="13" fill="#000000" text-anchor="middle">10</text>
<line x1="2497" y1="876" x2="2497" y2="891.5" stroke="#0000e6" stroke-width="1.7"/>
<circle cx="2497" cy="869.8" r="6" fill="#fff" stroke="#0000e6" stroke-width="1.6"/>
<text x="2497" y="861.6" font-size="13" fill="#000000" text-anchor="middle">13</text>
<text x="2507" y="875.2" font-size="13" fill="#0000e6">NC</text>
<line x1="2541" y1="876" x2="2541" y2="891.5" stroke="#0000e6" stroke-width="1.7"/>
<circle cx="2541" cy="869.8" r="6" fill="#fff" stroke="#0000e6" stroke-width="1.6"/>
<text x="2541" y="861.6" font-size="13" fill="#000000" text-anchor="middle">15</text>
<text x="2551" y="875.2" font-size="13" fill="#0000e6">+</text>
<line x1="2585" y1="876" x2="2585" y2="891.5" stroke="#0000e6" stroke-width="1.7"/>
<circle cx="2585" cy="869.8" r="6" fill="#fff" stroke="#0000e6" stroke-width="1.6"/>
<text x="2585" y="861.6" font-size="13" fill="#000000" text-anchor="middle">17</text>
<text x="2595" y="875.2" font-size="13" fill="#0000e6">-</text>
<line x1="2188" y1="891.5" x2="2203" y2="905" stroke="#111" stroke-width="1.4"/>
<circle cx="2210" cy="913" r="11" fill="#fff" stroke="#111" stroke-width="1.4"/>
<line x1="2210" y1="907" x2="2210" y2="914" stroke="#111" stroke-width="1.3"/>
<line x1="2204" y1="914" x2="2216" y2="914" stroke="#111" stroke-width="1.4"/>
<line x1="2205.5" y1="917" x2="2214.5" y2="917" stroke="#111" stroke-width="1.3"/>
<line x1="2207.5" y1="920" x2="2212.5" y2="920" stroke="#111" stroke-width="1.2"/>
<polyline points="2541,891.5 2541,941" fill="none" stroke="#0000e6" stroke-width="1.7"/>
<rect x="2535.6" y="941" width="11.1" height="33" fill="none" stroke="#0000e6" stroke-width="1.8"/>
<polyline points="2541,974 2541,1023.7 2585,1023.7 2585,891.5" fill="none" stroke="#0000e6" stroke-width="1.7"/>
<text x="0" y="0" font-size="12.5" fill="#000000" transform="translate(2536,937) rotate(-90)">x1</text>
<text x="0" y="0" font-size="12.5" fill="#000000" transform="translate(2536,990) rotate(-90)">x2</text>
<text x="2485" y="964.8" font-size="16.5" fill="#0000e6" textLength="33.0" lengthAdjust="spacingAndGlyphs">-PF1</text>
<text x="2497" y="980.5" font-size="13" fill="#7ba05b" textLength="22.0" lengthAdjust="spacingAndGlyphs">/1.4</text>
<polyline points="1681,891.5 1681,935.7 1174,935.7 1174,957.7" fill="none" stroke="#cc2020" stroke-width="1.7"/>
<line x1="1380" y1="935.7" x2="1436" y2="935.7" stroke="#0000e6" stroke-width="1.7"/>
<rect x="1388.5" y="929.2" width="39" height="13" fill="#fff" stroke="#0000e6" stroke-width="1.8" rx="6.5"/>
<circle cx="1394.5" cy="935.7" r="6.2" fill="none" stroke="#0000e6" stroke-width="1.8"/>
<circle cx="1421.5" cy="935.7" r="6.2" fill="none" stroke="#0000e6" stroke-width="1.8"/>
<text x="1381" y="950.7" font-size="13" fill="#000000">1</text>
<line x1="1299" y1="928.7" x2="1313" y2="942.7" stroke="#dd1111" stroke-width="1.6"/>
<text x="1315" y="919.7" font-size="10" fill="#dd1111" textLength="11.1" lengthAdjust="spacingAndGlyphs">BN</text>
<text x="1315" y="931.7" font-size="10" fill="#dd1111" textLength="11.1" lengthAdjust="spacingAndGlyphs">1,5</text>
<polyline points="1725,891.5 1725,1023.5 1174,1023.5 1174,1003.5" fill="none" stroke="#cc2020" stroke-width="1.7"/>
<line x1="1380" y1="1023.5" x2="1436" y2="1023.5" stroke="#0000e6" stroke-width="1.7"/>
<rect x="1388.5" y="1017" width="39" height="13" fill="#fff" stroke="#0000e6" stroke-width="1.8" rx="6.5"/>
<circle cx="1394.5" cy="1023.5" r="6.2" fill="none" stroke="#0000e6" stroke-width="1.8"/>
<circle cx="1421.5" cy="1023.5" r="6.2" fill="none" stroke="#0000e6" stroke-width="1.8"/>
<text x="1381" y="1040.5" font-size="13" fill="#000000">2</text>
<line x1="1299" y1="1016.5" x2="1313" y2="1030.5" stroke="#dd1111" stroke-width="1.6"/>
<text x="1315" y="1007.5" font-size="10" fill="#dd1111" textLength="11.1" lengthAdjust="spacingAndGlyphs">BN</text>
<text x="1315" y="1019.5" font-size="10" fill="#dd1111" textLength="11.1" lengthAdjust="spacingAndGlyphs">1,5</text>
<polyline points="1791,891.5 1791,1067.7 1218,1067.7 1218,1089.7" fill="none" stroke="#cc2020" stroke-width="1.7"/>
<line x1="1380" y1="1067.7" x2="1436" y2="1067.7" stroke="#0000e6" stroke-width="1.7"/>
<rect x="1388.5" y="1061.2" width="39" height="13" fill="#fff" stroke="#0000e6" stroke-width="1.8" rx="6.5"/>
<circle cx="1394.5" cy="1067.7" r="6.2" fill="none" stroke="#0000e6" stroke-width="1.8"/>
<circle cx="1421.5" cy="1067.7" r="6.2" fill="none" stroke="#0000e6" stroke-width="1.8"/>
<text x="1381" y="1082.7" font-size="13" fill="#000000">3</text>
<line x1="1299" y1="1060.7" x2="1313" y2="1074.7" stroke="#dd1111" stroke-width="1.6"/>
<text x="1315" y="1051.7" font-size="10" fill="#dd1111" textLength="11.1" lengthAdjust="spacingAndGlyphs">BN</text>
<text x="1315" y="1063.7" font-size="10" fill="#dd1111" textLength="11.1" lengthAdjust="spacingAndGlyphs">1,5</text>
<polyline points="1835,891.5 1835,1156 1218,1156 1218,1136" fill="none" stroke="#cc2020" stroke-width="1.7"/>
<line x1="1380" y1="1156" x2="1436" y2="1156" stroke="#0000e6" stroke-width="1.7"/>
<rect x="1388.5" y="1149.5" width="39" height="13" fill="#fff" stroke="#0000e6" stroke-width="1.8" rx="6.5"/>
<circle cx="1394.5" cy="1156" r="6.2" fill="none" stroke="#0000e6" stroke-width="1.8"/>
<circle cx="1421.5" cy="1156" r="6.2" fill="none" stroke="#0000e6" stroke-width="1.8"/>
<text x="1381" y="1173" font-size="13" fill="#000000">4</text>
<line x1="1299" y1="1149" x2="1313" y2="1163" stroke="#dd1111" stroke-width="1.6"/>
<text x="1315" y="1140" font-size="10" fill="#dd1111" textLength="11.1" lengthAdjust="spacingAndGlyphs">BN</text>
<text x="1315" y="1152" font-size="10" fill="#dd1111" textLength="11.1" lengthAdjust="spacingAndGlyphs">1,5</text>
<polyline points="1901.6,891.5 1901.6,1200 1262,1200 1262,1222" fill="none" stroke="#cc2020" stroke-width="1.7"/>
<line x1="1380" y1="1200" x2="1436" y2="1200" stroke="#0000e6" stroke-width="1.7"/>
<rect x="1388.5" y="1193.5" width="39" height="13" fill="#fff" stroke="#0000e6" stroke-width="1.8" rx="6.5"/>
<circle cx="1394.5" cy="1200" r="6.2" fill="none" stroke="#0000e6" stroke-width="1.8"/>
<circle cx="1421.5" cy="1200" r="6.2" fill="none" stroke="#0000e6" stroke-width="1.8"/>
<text x="1381" y="1215" font-size="13" fill="#000000">5</text>
<line x1="1299" y1="1193" x2="1313" y2="1207" stroke="#dd1111" stroke-width="1.6"/>
<text x="1315" y="1184" font-size="10" fill="#dd1111" textLength="11.1" lengthAdjust="spacingAndGlyphs">BN</text>
<text x="1315" y="1196" font-size="10" fill="#dd1111" textLength="11.1" lengthAdjust="spacingAndGlyphs">1,5</text>
<polyline points="1945.6,891.5 1945.6,1288.5 1262,1288.5 1262,1268.5" fill="none" stroke="#cc2020" stroke-width="1.7"/>
<line x1="1380" y1="1288.5" x2="1436" y2="1288.5" stroke="#0000e6" stroke-width="1.7"/>
<rect x="1388.5" y="1282" width="39" height="13" fill="#fff" stroke="#0000e6" stroke-width="1.8" rx="6.5"/>
<circle cx="1394.5" cy="1288.5" r="6.2" fill="none" stroke="#0000e6" stroke-width="1.8"/>
<circle cx="1421.5" cy="1288.5" r="6.2" fill="none" stroke="#0000e6" stroke-width="1.8"/>
<text x="1381" y="1305.5" font-size="13" fill="#000000">6</text>
<line x1="1299" y1="1281.5" x2="1313" y2="1295.5" stroke="#dd1111" stroke-width="1.6"/>
<text x="1315" y="1272.5" font-size="10" fill="#dd1111" textLength="11.1" lengthAdjust="spacingAndGlyphs">BN</text>
<text x="1315" y="1284.5" font-size="10" fill="#dd1111" textLength="11.1" lengthAdjust="spacingAndGlyphs">1,5</text>
<line x1="1630.5" y1="928.7" x2="1644.5" y2="942.7" stroke="#dd1111" stroke-width="1.6"/>
<text x="1646" y="920" font-size="10" fill="#dd1111" textLength="11.1" lengthAdjust="spacingAndGlyphs">BN</text>
<text x="1646" y="932" font-size="10" fill="#dd1111" textLength="11.1" lengthAdjust="spacingAndGlyphs">1,5</text>
<line x1="1718" y1="951" x2="1732" y2="965" stroke="#dd1111" stroke-width="1.6"/>
<text x="1734" y="943" font-size="10" fill="#dd1111" textLength="11.1" lengthAdjust="spacingAndGlyphs">BN</text>
<text x="1734" y="955" font-size="10" fill="#dd1111" textLength="11.1" lengthAdjust="spacingAndGlyphs">1,5</text>
<line x1="1784" y1="951" x2="1798" y2="965" stroke="#dd1111" stroke-width="1.6"/>
<text x="1800" y="943" font-size="10" fill="#dd1111" textLength="11.1" lengthAdjust="spacingAndGlyphs">BN</text>
<text x="1800" y="955" font-size="10" fill="#dd1111" textLength="11.1" lengthAdjust="spacingAndGlyphs">1,5</text>
<line x1="1828" y1="951" x2="1842" y2="965" stroke="#dd1111" stroke-width="1.6"/>
<text x="1844" y="943" font-size="10" fill="#dd1111" textLength="11.1" lengthAdjust="spacingAndGlyphs">BN</text>
<text x="1844" y="955" font-size="10" fill="#dd1111" textLength="11.1" lengthAdjust="spacingAndGlyphs">1,5</text>
<line x1="1894.6" y1="951" x2="1908.6" y2="965" stroke="#dd1111" stroke-width="1.6"/>
<text x="1910.6" y="943" font-size="10" fill="#dd1111" textLength="11.1" lengthAdjust="spacingAndGlyphs">BN</text>
<text x="1910.6" y="955" font-size="10" fill="#dd1111" textLength="11.1" lengthAdjust="spacingAndGlyphs">1,5</text>
<line x1="1938.6" y1="951" x2="1952.6" y2="965" stroke="#dd1111" stroke-width="1.6"/>
<text x="1954.6" y="943" font-size="10" fill="#dd1111" textLength="11.1" lengthAdjust="spacingAndGlyphs">BN</text>
<text x="1954.6" y="955" font-size="10" fill="#dd1111" textLength="11.1" lengthAdjust="spacingAndGlyphs">1,5</text>
<polyline points="1174,957.7 1174,968.4 1149,968.4" fill="none" stroke="#0000e6" stroke-width="2"/>
<polyline points="1174,1003.5 1174,990.7 1149,990.7" fill="none" stroke="#0000e6" stroke-width="2"/>
<path d="M1149 968.4a5.5 5.6 0 0 0 0 11.2a5.5 5.6 0 0 0 0 11.1" fill="none" stroke="#0000e6" stroke-width="2"/>
<text x="1137.5" y="952" font-size="12.5" fill="#000000">L</text>
<text x="1137" y="1017" font-size="12.5" fill="#000000">K</text>
<text x="0" y="0" font-size="12.5" fill="#000000" transform="translate(1170,964) rotate(-90)">l</text>
<text x="0" y="0" font-size="12.5" fill="#000000" transform="translate(1170,1004) rotate(-90)">k</text>
<path d="M1377.7 941.0L1360.7 957.6V968.5M1350 968.0L1360.7 992.0V1002.0L1377.7 1017.0" fill="none" stroke="#0000e6" stroke-width="3"/>
<polyline points="1218,1089.9 1218,1100.6 1193,1100.6" fill="none" stroke="#0000e6" stroke-width="2"/>
<polyline points="1218,1135.7 1218,1122.9 1193,1122.9" fill="none" stroke="#0000e6" stroke-width="2"/>
<path d="M1193 1100.6a5.5 5.6 0 0 0 0 11.2a5.5 5.6 0 0 0 0 11.1" fill="none" stroke="#0000e6" stroke-width="2"/>
<text x="1181.5" y="1084.2" font-size="12.5" fill="#000000">L</text>
<text x="1181" y="1149.2" font-size="12.5" fill="#000000">K</text>
<text x="0" y="0" font-size="12.5" fill="#000000" transform="translate(1214,1096.2) rotate(-90)">l</text>
<text x="0" y="0" font-size="12.5" fill="#000000" transform="translate(1214,1136.2) rotate(-90)">k</text>
<path d="M1377.7 1073.2L1360.7 1089.8V1100.7M1350 1100.2L1360.7 1124.2V1134.2L1377.7 1149.2" fill="none" stroke="#0000e6" stroke-width="3"/>
<polyline points="1262,1222.1 1262,1232.8 1237,1232.8" fill="none" stroke="#0000e6" stroke-width="2"/>
<polyline points="1262,1267.9 1262,1255.1 1237,1255.1" fill="none" stroke="#0000e6" stroke-width="2"/>
<path d="M1237 1232.8a5.5 5.6 0 0 0 0 11.2a5.5 5.6 0 0 0 0 11.1" fill="none" stroke="#0000e6" stroke-width="2"/>
<text x="1225.5" y="1216.4" font-size="12.5" fill="#000000">L</text>
<text x="1225" y="1281.4" font-size="12.5" fill="#000000">K</text>
<text x="0" y="0" font-size="12.5" fill="#000000" transform="translate(1258,1228.4) rotate(-90)">l</text>
<text x="0" y="0" font-size="12.5" fill="#000000" transform="translate(1258,1268.4) rotate(-90)">k</text>
<path d="M1377.7 1205.4L1360.7 1222.0V1232.9M1350 1232.4L1360.7 1256.4V1266.4L1377.7 1281.4" fill="none" stroke="#0000e6" stroke-width="3"/>
<text x="1094.4" y="986.5" font-size="16.5" fill="#0000e6" textLength="35.0" lengthAdjust="spacingAndGlyphs">-TA1</text>
<text x="1086" y="1002.8" font-size="13" fill="#000000" textLength="43.7" lengthAdjust="spacingAndGlyphs">50 / 5 A</text>
<text x="1094.4" y="1118.5" font-size="16.5" fill="#0000e6" textLength="35.0" lengthAdjust="spacingAndGlyphs">-TA2</text>
<text x="1086" y="1134.8" font-size="13" fill="#000000" textLength="43.7" lengthAdjust="spacingAndGlyphs">50 / 5 A</text>
<text x="1094.4" y="1250.8" font-size="16.5" fill="#0000e6" textLength="35.0" lengthAdjust="spacingAndGlyphs">-TA3</text>
<text x="1086" y="1267.1" font-size="13" fill="#000000" textLength="43.7" lengthAdjust="spacingAndGlyphs">50 / 5 A</text>
<text x="1376.7" y="910" font-size="16.5" fill="#0000e6" textLength="36.1" lengthAdjust="spacingAndGlyphs">-XD5</text>
<line x1="2011.7" y1="891.5" x2="2011.7" y2="1217" stroke="#000" stroke-width="1.7"/>
<circle cx="2011.7" cy="1222.5" r="5.5" fill="#fff" stroke="#0000e6" stroke-width="1.6"/>
<rect x="2007.2" y="1229.5" width="9" height="26" fill="none" stroke="#0000e6" stroke-width="1.8"/>
<line x1="2011.7" y1="1229.5" x2="2011.7" y2="1255.5" stroke="#0000e6" stroke-width="1.2"/>
<circle cx="2011.7" cy="1262.5" r="5.5" fill="#fff" stroke="#0000e6" stroke-width="1.6"/>
<polyline points="2011.7,1268 2011.7,1332.3 1284,1332.3 1284,1613" fill="none" stroke="#000" stroke-width="1.7"/>
<text x="2020.7" y="1229" font-size="13" fill="#000000">1</text>
<path d="M2020.7 1242h20M2024.7 1236v12l9-6z" fill="none" stroke="#0000e6" stroke-width="1.6"/>
<line x1="2033.7" y1="1236" x2="2033.7" y2="1248" stroke="#0000e6" stroke-width="1.6"/>
<path d="M2023.7 1254l5-5M2027.7 1256l5-5" fill="none" stroke="#0000e6" stroke-width="1.6"/>
<line x1="2004.7" y1="1127" x2="2018.7" y2="1141" stroke="#dd1111" stroke-width="1.6"/>
<text x="2020.7" y="1119" font-size="10" fill="#dd1111" textLength="10.7" lengthAdjust="spacingAndGlyphs">BK</text>
<text x="2020.7" y="1131" font-size="10" fill="#dd1111" textLength="11.1" lengthAdjust="spacingAndGlyphs">1,5</text>
<line x1="2056" y1="891.5" x2="2056" y2="1217" stroke="#000" stroke-width="1.7"/>
<circle cx="2056" cy="1222.5" r="5.5" fill="#fff" stroke="#0000e6" stroke-width="1.6"/>
<rect x="2051.5" y="1229.5" width="9" height="26" fill="none" stroke="#0000e6" stroke-width="1.8"/>
<line x1="2056" y1="1229.5" x2="2056" y2="1255.5" stroke="#0000e6" stroke-width="1.2"/>
<circle cx="2056" cy="1262.5" r="5.5" fill="#fff" stroke="#0000e6" stroke-width="1.6"/>
<polyline points="2056,1268 2056,1354.5 1328.6,1354.5 1328.6,1613" fill="none" stroke="#000" stroke-width="1.7"/>
<text x="2065" y="1229" font-size="13" fill="#000000">2</text>
<path d="M2065 1242h20M2069 1236v12l9-6z" fill="none" stroke="#0000e6" stroke-width="1.6"/>
<line x1="2078" y1="1236" x2="2078" y2="1248" stroke="#0000e6" stroke-width="1.6"/>
<path d="M2068 1254l5-5M2072 1256l5-5" fill="none" stroke="#0000e6" stroke-width="1.6"/>
<line x1="2049" y1="1127" x2="2063" y2="1141" stroke="#dd1111" stroke-width="1.6"/>
<text x="2065" y="1119" font-size="10" fill="#dd1111" textLength="10.7" lengthAdjust="spacingAndGlyphs">BK</text>
<text x="2065" y="1131" font-size="10" fill="#dd1111" textLength="11.1" lengthAdjust="spacingAndGlyphs">1,5</text>
<line x1="2100" y1="891.5" x2="2100" y2="1217" stroke="#000" stroke-width="1.7"/>
<circle cx="2100" cy="1222.5" r="5.5" fill="#fff" stroke="#0000e6" stroke-width="1.6"/>
<rect x="2095.5" y="1229.5" width="9" height="26" fill="none" stroke="#0000e6" stroke-width="1.8"/>
<line x1="2100" y1="1229.5" x2="2100" y2="1255.5" stroke="#0000e6" stroke-width="1.2"/>
<circle cx="2100" cy="1262.5" r="5.5" fill="#fff" stroke="#0000e6" stroke-width="1.6"/>
<polyline points="2100,1268 2100,1377 1372,1377 1372,1613" fill="none" stroke="#000" stroke-width="1.7"/>
<text x="2109" y="1229" font-size="13" fill="#000000">3</text>
<path d="M2109 1242h20M2113 1236v12l9-6z" fill="none" stroke="#0000e6" stroke-width="1.6"/>
<line x1="2122" y1="1236" x2="2122" y2="1248" stroke="#0000e6" stroke-width="1.6"/>
<path d="M2112 1254l5-5M2116 1256l5-5" fill="none" stroke="#0000e6" stroke-width="1.6"/>
<line x1="2093" y1="1127" x2="2107" y2="1141" stroke="#dd1111" stroke-width="1.6"/>
<text x="2109" y="1119" font-size="10" fill="#dd1111" textLength="10.7" lengthAdjust="spacingAndGlyphs">BK</text>
<text x="2109" y="1131" font-size="10" fill="#dd1111" textLength="11.1" lengthAdjust="spacingAndGlyphs">1,5</text>
<text x="1968" y="1229.5" font-size="16.5" fill="#0000e6" textLength="33.7" lengthAdjust="spacingAndGlyphs">-FC2</text>
<line x1="2144" y1="891.5" x2="2144" y2="1480.5" stroke="#0000e6" stroke-width="1.7"/>
<line x1="2137" y1="1127" x2="2151" y2="1141" stroke="#dd1111" stroke-width="1.6"/>
<text x="2153" y="1119" font-size="10" fill="#dd1111" textLength="11.1" lengthAdjust="spacingAndGlyphs">BU</text>
<text x="2153" y="1131" font-size="10" fill="#dd1111" textLength="11.1" lengthAdjust="spacingAndGlyphs">1,5</text>
<line x1="2188" y1="891.5" x2="2188" y2="1414.5" stroke="#33dd33" stroke-width="1.7"/>
<line x1="2181" y1="1127" x2="2195" y2="1141" stroke="#dd1111" stroke-width="1.6"/>
<text x="2197" y="1119" font-size="10" fill="#dd1111" textLength="22.7" lengthAdjust="spacingAndGlyphs">GNYE</text>
<text x="2197" y="1131" font-size="10" fill="#dd1111" textLength="11.1" lengthAdjust="spacingAndGlyphs">1,5</text>
<line x1="1497.6" y1="1326" x2="1511.6" y2="1340" stroke="#dd1111" stroke-width="1.6"/>
<text x="1513.6" y="1316" font-size="10" fill="#dd1111" textLength="12.4" lengthAdjust="spacingAndGlyphs">OG</text>
<text x="1513.6" y="1328" font-size="10" fill="#dd1111" textLength="4.4" lengthAdjust="spacingAndGlyphs">6</text>
<line x1="1519.6" y1="1348" x2="1533.6" y2="1362" stroke="#dd1111" stroke-width="1.6"/>
<text x="1535.6" y="1338" font-size="10" fill="#dd1111" textLength="12.4" lengthAdjust="spacingAndGlyphs">OG</text>
<text x="1535.6" y="1350" font-size="10" fill="#dd1111" textLength="4.4" lengthAdjust="spacingAndGlyphs">6</text>
<line x1="1541.6" y1="1370" x2="1555.6" y2="1384" stroke="#dd1111" stroke-width="1.6"/>
<text x="1557.6" y="1360" font-size="10" fill="#dd1111" textLength="12.4" lengthAdjust="spacingAndGlyphs">OG</text>
<text x="1557.6" y="1372" font-size="10" fill="#dd1111" textLength="4.4" lengthAdjust="spacingAndGlyphs">6</text>
<polyline points="1152,1541 1163,1530 1274,1530 1284,1541" fill="none" stroke="#000" stroke-width="1.7"/>
<line x1="1210.6" y1="1523" x2="1224.6" y2="1537" stroke="#dd1111" stroke-width="1.6"/>
<polyline points="1196,1563 1207,1552 1318,1552 1328,1563" fill="none" stroke="#000" stroke-width="1.7"/>
<line x1="1254.6" y1="1545" x2="1268.6" y2="1559" stroke="#dd1111" stroke-width="1.6"/>
<polyline points="1240,1585 1251,1574 1362,1574 1372,1585" fill="none" stroke="#000" stroke-width="1.7"/>
<line x1="1298.6" y1="1567" x2="1312.6" y2="1581" stroke="#dd1111" stroke-width="1.6"/>
<rect x="1438" y="1399" width="838.6" height="44" fill="none" stroke="#000" stroke-width="3"/>
<rect x="1393.6" y="1465" width="817" height="44" fill="none" stroke="#000" stroke-width="3"/>
<rect x="2430" y="1399" width="387" height="44" fill="none" stroke="#000" stroke-width="3"/>
<rect x="2474.5" y="1465" width="365" height="44" fill="none" stroke="#000" stroke-width="3"/>
<text x="1440" y="1411.3" font-size="13" fill="#000000" textLength="40.0" lengthAdjust="spacingAndGlyphs">-WE1:1</text>
<circle cx="1461" cy="1421" r="6.5" fill="#fff" stroke="#0000e6" stroke-width="1.8"/>
<line x1="1451" y1="1421" x2="1471" y2="1421" stroke="#0000e6" stroke-width="1.8"/>
<text x="1527" y="1427" font-size="18" fill="#0000e6" textLength="56.4" lengthAdjust="spacingAndGlyphs">-WE1 =</text>
<text x="1589" y="1428" font-size="12" fill="#000000" textLength="51.0" lengthAdjust="spacingAndGlyphs">Busbar PE</text>
<circle cx="2188" cy="1421" r="6.5" fill="#fff" stroke="#0000e6" stroke-width="1.8"/>
<line x1="2178" y1="1421" x2="2198" y2="1421" stroke="#0000e6" stroke-width="1.8"/>
<text x="2168" y="1439" font-size="13" fill="#000000" textLength="40.0" lengthAdjust="spacingAndGlyphs">-WE1:2</text>
<circle cx="2232.6" cy="1421" r="6.5" fill="#fff" stroke="#0000e6" stroke-width="1.8"/>
<line x1="2222.6" y1="1421" x2="2242.6" y2="1421" stroke="#0000e6" stroke-width="1.8"/>
<text x="2212" y="1412.7" font-size="13" fill="#000000" textLength="40.0" lengthAdjust="spacingAndGlyphs">-WE1:3</text>
<text x="1396" y="1478.6" font-size="13" fill="#000000" textLength="40.0" lengthAdjust="spacingAndGlyphs">-WE2:1</text>
<circle cx="1416.8" cy="1487" r="6.5" fill="#fff" stroke="#0000e6" stroke-width="1.8"/>
<line x1="1406.8" y1="1487" x2="1426.8" y2="1487" stroke="#0000e6" stroke-width="1.8"/>
<text x="1504.6" y="1494" font-size="18" fill="#0000e6" textLength="56.9" lengthAdjust="spacingAndGlyphs">-WE2 =</text>
<text x="1567" y="1495" font-size="12" fill="#000000" textLength="45.0" lengthAdjust="spacingAndGlyphs">Busbar N</text>
<circle cx="2144" cy="1487" r="6.5" fill="#fff" stroke="#0000e6" stroke-width="1.8"/>
<line x1="2134" y1="1487" x2="2154" y2="1487" stroke="#0000e6" stroke-width="1.8"/>
<text x="2124" y="1504.3" font-size="13" fill="#000000" textLength="40.0" lengthAdjust="spacingAndGlyphs">-WE2:2</text>
<circle cx="2188" cy="1487" r="6.5" fill="#fff" stroke="#0000e6" stroke-width="1.8"/>
<line x1="2178" y1="1487" x2="2198" y2="1487" stroke="#0000e6" stroke-width="1.8"/>
<text x="2168" y="1478.7" font-size="13" fill="#000000" textLength="40.0" lengthAdjust="spacingAndGlyphs">-WE2:3</text>
<text x="2422" y="1412.7" font-size="13" fill="#000000" textLength="62.0" lengthAdjust="spacingAndGlyphs">+A2-WE1:1</text>
<circle cx="2452.4" cy="1421" r="6.5" fill="#fff" stroke="#0000e6" stroke-width="1.8"/>
<line x1="2442.4" y1="1421" x2="2462.4" y2="1421" stroke="#0000e6" stroke-width="1.8"/>
<text x="2542.5" y="1428.2" font-size="18" fill="#0000e6" textLength="80.5" lengthAdjust="spacingAndGlyphs">+A2-WE1 =</text>
<text x="2628" y="1429" font-size="12" fill="#000000" textLength="60.8" lengthAdjust="spacingAndGlyphs">Busbar PE</text>
<text x="2488" y="1478.7" font-size="13" fill="#000000" textLength="62.0" lengthAdjust="spacingAndGlyphs">+A2-WE2:1</text>
<circle cx="2518.8" cy="1487" r="6.5" fill="#fff" stroke="#0000e6" stroke-width="1.8"/>
<line x1="2508.8" y1="1487" x2="2528.8" y2="1487" stroke="#0000e6" stroke-width="1.8"/>
<text x="2608.5" y="1494.6" font-size="18" fill="#0000e6" textLength="81.5" lengthAdjust="spacingAndGlyphs">+A2-WE2 =</text>
<text x="2695" y="1495.5" font-size="12" fill="#000000" textLength="54.4" lengthAdjust="spacingAndGlyphs">Busbar N</text>
<line x1="1461" y1="1427.5" x2="1461" y2="1613" stroke="#33dd33" stroke-width="1.7"/>
<line x1="1416.8" y1="1493.5" x2="1416.8" y2="1613" stroke="#0000e6" stroke-width="1.7"/>
<polyline points="2232.6,1427.5 2232.6,1530 2452.4,1530 2452.4,1427.5" fill="none" stroke="#33dd33" stroke-width="1.7"/>
<polyline points="2188,1493.5 2188,1553 2518.8,1553 2518.8,1493.5" fill="none" stroke="#0000e6" stroke-width="1.7"/>
<line x1="2342.5" y1="1509" x2="2342.5" y2="1575" stroke="#0000e6" stroke-width="1.6"/>
<line x1="2335.5" y1="1523" x2="2349.5" y2="1537" stroke="#dd1111" stroke-width="1.6"/>
<line x1="2335.5" y1="1546" x2="2349.5" y2="1560" stroke="#dd1111" stroke-width="1.6"/>
<text x="2300.6" y="1505.9" font-size="16.5" fill="#0000e6" textLength="41.2" lengthAdjust="spacingAndGlyphs">-WD1</text>
<text x="2322" y="1520.6" font-size="12.5" fill="#0000e6" textLength="20.0" lengthAdjust="spacingAndGlyphs">2X6</text>
<text x="2350" y="1527" font-size="10" fill="#dd1111" textLength="22.7" lengthAdjust="spacingAndGlyphs">GNYE</text>
<text x="2350" y="1549" font-size="10" fill="#dd1111" textLength="11.1" lengthAdjust="spacingAndGlyphs">BU</text>
<line x1="1152" y1="1606" x2="1152" y2="1613" stroke="#0000e6" stroke-width="1.7"/>
<circle cx="1152" cy="1619" r="6" fill="#fff" stroke="#0000e6" stroke-width="1.6"/>
<text x="0" y="0" font-size="13" fill="#000000" transform="translate(1143,1626) rotate(-90)">1</text>
<line x1="1196" y1="1606" x2="1196" y2="1613" stroke="#0000e6" stroke-width="1.7"/>
<circle cx="1196" cy="1619" r="6" fill="#fff" stroke="#0000e6" stroke-width="1.6"/>
<text x="0" y="0" font-size="13" fill="#000000" transform="translate(1187,1626) rotate(-90)">2</text>
<line x1="1240" y1="1606" x2="1240" y2="1613" stroke="#0000e6" stroke-width="1.7"/>
<circle cx="1240" cy="1619" r="6" fill="#fff" stroke="#0000e6" stroke-width="1.6"/>
<text x="0" y="0" font-size="13" fill="#000000" transform="translate(1231,1626) rotate(-90)">3</text>
<line x1="1284" y1="1606" x2="1284" y2="1613" stroke="#0000e6" stroke-width="1.7"/>
<circle cx="1284" cy="1619" r="6" fill="#fff" stroke="#0000e6" stroke-width="1.6"/>
<text x="0" y="0" font-size="13" fill="#000000" transform="translate(1275,1626) rotate(-90)">4</text>
<line x1="1328.6" y1="1606" x2="1328.6" y2="1613" stroke="#0000e6" stroke-width="1.7"/>
<circle cx="1328.6" cy="1619" r="6" fill="#fff" stroke="#0000e6" stroke-width="1.6"/>
<text x="0" y="0" font-size="13" fill="#000000" transform="translate(1319.6,1626) rotate(-90)">5</text>
<line x1="1372" y1="1606" x2="1372" y2="1613" stroke="#0000e6" stroke-width="1.7"/>
<circle cx="1372" cy="1619" r="6" fill="#fff" stroke="#0000e6" stroke-width="1.6"/>
<text x="0" y="0" font-size="13" fill="#000000" transform="translate(1363,1626) rotate(-90)">6</text>
<line x1="1416.8" y1="1606" x2="1416.8" y2="1613" stroke="#0000e6" stroke-width="1.7"/>
<circle cx="1416.8" cy="1619" r="6" fill="#fff" stroke="#0000e6" stroke-width="1.6"/>
<text x="0" y="0" font-size="13" fill="#000000" transform="translate(1407.8,1626) rotate(-90)">7</text>
<line x1="1461" y1="1606" x2="1461" y2="1613" stroke="#0000e6" stroke-width="1.7"/>
<circle cx="1461" cy="1619" r="6" fill="#fff" stroke="#0000e6" stroke-width="1.6"/>
<text x="0" y="0" font-size="13" fill="#000000" transform="translate(1452,1626) rotate(-90)">8</text>
<circle cx="1477.7" cy="1619" r="9" fill="#fff" stroke="#111" stroke-width="1.4"/>
<line x1="1477.7" y1="1613" x2="1477.7" y2="1620" stroke="#111" stroke-width="1.3"/>
<line x1="1471.7" y1="1620" x2="1483.7" y2="1620" stroke="#111" stroke-width="1.4"/>
<line x1="1473.2" y1="1623" x2="1482.2" y2="1623" stroke="#111" stroke-width="1.3"/>
<line x1="1475.2" y1="1626" x2="1480.2" y2="1626" stroke="#111" stroke-width="1.2"/>
<line x1="1467" y1="1619" x2="1468" y2="1619" stroke="#111" stroke-width="1"/>
<text x="1095" y="1625.5" font-size="17.5" fill="#0000e6" textLength="36.0" lengthAdjust="spacingAndGlyphs">-XD1</text>
<text x="1152.5" y="1663" font-size="17" fill="#000000" textLength="100.1" lengthAdjust="spacingAndGlyphs">Power supply</text>
<line x1="1145" y1="1503" x2="1159" y2="1517" stroke="#000" stroke-width="1.5"/>
<text x="1157" y="1503.6" font-size="10" fill="#0000e6" textLength="8.9" lengthAdjust="spacingAndGlyphs">L1</text>
<line x1="1189" y1="1503" x2="1203" y2="1517" stroke="#000" stroke-width="1.5"/>
<text x="1201" y="1503.6" font-size="10" fill="#0000e6" textLength="8.9" lengthAdjust="spacingAndGlyphs">L2</text>
<line x1="1233" y1="1503" x2="1247" y2="1517" stroke="#000" stroke-width="1.5"/>
<text x="1245" y="1503.6" font-size="10" fill="#0000e6" textLength="8.9" lengthAdjust="spacingAndGlyphs">L3</text>
<line x1="1409.8" y1="1525" x2="1423.8" y2="1539" stroke="#000" stroke-width="1.5"/>
<text x="1424" y="1527" font-size="10" fill="#0000e6" textLength="5.8" lengthAdjust="spacingAndGlyphs">N</text>
<line x1="1454" y1="1525" x2="1468" y2="1539" stroke="#000" stroke-width="1.5"/>
<text x="1463" y="1530" font-size="10" fill="#0000e6" textLength="10.7" lengthAdjust="spacingAndGlyphs">PE</text>
<line x1="1409.8" y1="1568" x2="1423.8" y2="1582" stroke="#dd1111" stroke-width="1.6"/>
<text x="1425" y="1560" font-size="10" fill="#dd1111" textLength="11.1" lengthAdjust="spacingAndGlyphs">BU</text>
<text x="1425" y="1572" font-size="10" fill="#dd1111" textLength="4.4" lengthAdjust="spacingAndGlyphs">6</text>
<line x1="1454" y1="1568" x2="1468" y2="1582" stroke="#dd1111" stroke-width="1.6"/>
<text x="1469" y="1560" font-size="10" fill="#dd1111" textLength="22.7" lengthAdjust="spacingAndGlyphs">GNYE</text>
<text x="1469" y="1572" font-size="10" fill="#dd1111" textLength="4.4" lengthAdjust="spacingAndGlyphs">6</text>
<svg x="2" y="1532" width="607.5" height="434" overflow="hidden"><g transform="translate(-158.2,-70.25) scale(0.2603)">
<line x1="623.5" y1="291.5" x2="2939" y2="291.5" stroke="#000" stroke-width="0.9" vector-effect="non-scaling-stroke"/>
<line x1="623.5" y1="291.5" x2="623.5" y2="1931" stroke="#000" stroke-width="0.9" vector-effect="non-scaling-stroke"/>
<line x1="645" y1="291.5" x2="645" y2="1841" stroke="#000" stroke-width="1.2" vector-effect="non-scaling-stroke"/>
<line x1="645" y1="318.3" x2="2938" y2="318.3" stroke="#000" stroke-width="1.32" vector-effect="non-scaling-stroke"/>
<line x1="2938.2" y1="291.5" x2="2938.2" y2="1929" stroke="#000" stroke-width="1.56" vector-effect="non-scaling-stroke"/>
<line x1="909.7" y1="292" x2="909.7" y2="318" stroke="#000" stroke-width="1.2" vector-effect="non-scaling-stroke"/>
<line x1="1130.3" y1="292" x2="1130.3" y2="318" stroke="#000" stroke-width="1.2" vector-effect="non-scaling-stroke"/>
<line x1="1350.9" y1="292" x2="1350.9" y2="318" stroke="#000" stroke-width="1.2" vector-effect="non-scaling-stroke"/>
<line x1="1571.5" y1="292" x2="1571.5" y2="318" stroke="#000" stroke-width="1.2" vector-effect="non-scaling-stroke"/>
<line x1="1792.1" y1="292" x2="1792.1" y2="318" stroke="#000" stroke-width="1.2" vector-effect="non-scaling-stroke"/>
<line x1="2012.7" y1="292" x2="2012.7" y2="318" stroke="#000" stroke-width="1.2" vector-effect="non-scaling-stroke"/>
<line x1="2233.3" y1="292" x2="2233.3" y2="318" stroke="#000" stroke-width="1.2" vector-effect="non-scaling-stroke"/>
<line x1="2453.9" y1="292" x2="2453.9" y2="318" stroke="#000" stroke-width="1.2" vector-effect="non-scaling-stroke"/>
<line x1="2674.5" y1="292" x2="2674.5" y2="318" stroke="#000" stroke-width="1.2" vector-effect="non-scaling-stroke"/>
<text x="0" y="0" font-size="12.6" fill="#000" transform="translate(637.5,1837) rotate(-90)" textLength="958" lengthAdjust="spacingAndGlyphs">Protected by copyright. Passing on as well as reproduction of this document, its utilization and communication of its contents are prohibited in as far as not expressly permitted.</text>
<text x="653" y="1834.2" font-size="17" fill="#000000" textLength="108.4" lengthAdjust="spacingAndGlyphs">=+B4&amp;EPA1/1</text>
<text x="2902" y="1833" font-size="17" fill="#000000">2</text>
<line x1="623.5" y1="1840.6" x2="2938.2" y2="1840.6" stroke="#000" stroke-width="1.5" vector-effect="non-scaling-stroke"/>
<line x1="623.5" y1="1927.7" x2="2938.2" y2="1927.7" stroke="#000" stroke-width="1.8" vector-effect="non-scaling-stroke"/>
<line x1="733" y1="1840.6" x2="733" y2="1927.7" stroke="#000" stroke-width="1.2" vector-effect="non-scaling-stroke"/>
<line x1="843" y1="1840.6" x2="843" y2="1927.7" stroke="#000" stroke-width="1.2" vector-effect="non-scaling-stroke"/>
<line x1="953.5" y1="1840.6" x2="953.5" y2="1927.7" stroke="#000" stroke-width="1.2" vector-effect="non-scaling-stroke"/>
<line x1="1394" y1="1840.6" x2="1394" y2="1927.7" stroke="#000" stroke-width="1.2" vector-effect="non-scaling-stroke"/>
<line x1="1659" y1="1840.6" x2="1659" y2="1927.7" stroke="#000" stroke-width="1.2" vector-effect="non-scaling-stroke"/>
<line x1="1990" y1="1840.6" x2="1990" y2="1927.7" stroke="#000" stroke-width="1.2" vector-effect="non-scaling-stroke"/>
<line x1="2343" y1="1840.6" x2="2343" y2="1927.7" stroke="#000" stroke-width="1.2" vector-effect="non-scaling-stroke"/>
<line x1="2541" y1="1840.6" x2="2541" y2="1927.7" stroke="#000" stroke-width="1.2" vector-effect="non-scaling-stroke"/>
<line x1="2739.5" y1="1840.6" x2="2739.5" y2="1927.7" stroke="#000" stroke-width="1.2" vector-effect="non-scaling-stroke"/>
<line x1="623.5" y1="1862" x2="953.5" y2="1862" stroke="#000" stroke-width="1.08" vector-effect="non-scaling-stroke"/>
<line x1="623.5" y1="1883.5" x2="953.5" y2="1883.5" stroke="#000" stroke-width="1.08" vector-effect="non-scaling-stroke"/>
<line x1="623.5" y1="1905.5" x2="953.5" y2="1905.5" stroke="#000" stroke-width="1.08" vector-effect="non-scaling-stroke"/>
<line x1="953.5" y1="1862" x2="1394" y2="1862" stroke="#000" stroke-width="1.08" vector-effect="non-scaling-stroke"/>
<line x1="953.5" y1="1905.5" x2="1394" y2="1905.5" stroke="#000" stroke-width="1.08" vector-effect="non-scaling-stroke"/>
<line x1="1394" y1="1876" x2="1659" y2="1876" stroke="#000" stroke-width="1.56" vector-effect="non-scaling-stroke"/>
<line x1="1394" y1="1905.5" x2="1659" y2="1905.5" stroke="#000" stroke-width="1.08" vector-effect="non-scaling-stroke"/>
<line x1="1990" y1="1905.5" x2="2343" y2="1905.5" stroke="#000" stroke-width="1.08" vector-effect="non-scaling-stroke"/>
<line x1="2119" y1="1905.5" x2="2119" y2="1927.7" stroke="#000" stroke-width="0.96" vector-effect="non-scaling-stroke"/>
<line x1="2343" y1="1862" x2="2938.2" y2="1862" stroke="#000" stroke-width="1.08" vector-effect="non-scaling-stroke"/>
<line x1="2343" y1="1884" x2="2938.2" y2="1884" stroke="#000" stroke-width="1.08" vector-effect="non-scaling-stroke"/>
<line x1="2343" y1="1906" x2="2938.2" y2="1906" stroke="#000" stroke-width="1.08" vector-effect="non-scaling-stroke"/>
<text x="958.7" y="1879" font-size="17.5" fill="#000000" textLength="132.3" lengthAdjust="spacingAndGlyphs">Grinding machine</text>
<text x="1664" y="1861" font-size="16.5" fill="#000000" textLength="174.0" lengthAdjust="spacingAndGlyphs">EPLAN GmbH &amp; Co. KG</text>
<text x="1993" y="1860" font-size="17" fill="#000000" textLength="193.6" lengthAdjust="spacingAndGlyphs">400 / 230 V power supply</text>
<rect x="1917" y="1842" width="58.5" height="44.6" fill="#e1101a"/>
<line x1="1940.3" y1="1846.7" x2="1931.8" y2="1869.7" stroke="#7a0a10" stroke-width="4.56" vector-effect="non-scaling-stroke" stroke-linecap="round"/>
<line x1="1940.3" y1="1846.7" x2="1931.8" y2="1869.7" stroke="#ffffff" stroke-width="3.36" vector-effect="non-scaling-stroke" stroke-linecap="round"/>
<line x1="1950.2" y1="1847" x2="1937.5" y2="1882.4" stroke="#7a0a10" stroke-width="4.56" vector-effect="non-scaling-stroke" stroke-linecap="round"/>
<line x1="1950.2" y1="1847" x2="1937.5" y2="1882.4" stroke="#ffffff" stroke-width="3.36" vector-effect="non-scaling-stroke" stroke-linecap="round"/>
<line x1="1961.5" y1="1847.7" x2="1949.5" y2="1882.7" stroke="#7a0a10" stroke-width="4.56" vector-effect="non-scaling-stroke" stroke-linecap="round"/>
<line x1="1961.5" y1="1847.7" x2="1949.5" y2="1882.7" stroke="#ffffff" stroke-width="3.36" vector-effect="non-scaling-stroke" stroke-linecap="round"/>
<text x="1916" y="1909" font-size="26" font-weight="700" font-style="italic" fill="#e1101a" textLength="18" lengthAdjust="spacingAndGlyphs">e</text>
<text x="1936" y="1905.7" font-size="16.5" font-weight="700" font-style="italic" fill="#111" textLength="39" lengthAdjust="spacingAndGlyphs">PLAN</text>
<line x1="1930" y1="1909" x2="1975" y2="1909" stroke="#111" stroke-width="1.2" vector-effect="non-scaling-stroke"/>
<rect x="1917" y="1913.9" width="58.5" height="9.9" fill="#e1101a"/>
<polyline points="755,957.8 755,538.7 1108.7,538.7" fill="none" stroke="#000" stroke-width="1.8" vector-effect="non-scaling-stroke"/>
<line x1="1261" y1="538.7" x2="2695.8" y2="538.7" stroke="#000" stroke-width="1.8" vector-effect="non-scaling-stroke"/>
<polyline points="755,1332.4 755,1595 1064,1595" fill="none" stroke="#000" stroke-width="1.8" vector-effect="non-scaling-stroke"/>
<rect x="656" y="957.8" width="408" height="374.6" fill="#fff" stroke="#222" stroke-width="1.2" vector-effect="non-scaling-stroke"/>
<text x="854.5" y="1001.6" font-size="33" fill="#000000" font-weight="700" text-anchor="middle" textLength="171" lengthAdjust="spacingAndGlyphs">CAUTION!</text>
<path d="M774.8 1171.8L941.9 1171.8L858.3 1025.2z" fill="#fbd51a" stroke="#fbd51a" stroke-width="6.36" vector-effect="non-scaling-stroke" stroke-linejoin="round"/>
<path d="M781.5 1166L935.2 1166L858.3 1031.9z" fill="none" stroke="#111" stroke-width="7.02" vector-effect="non-scaling-stroke" stroke-linejoin="round"/>
<path d="M851.4 1071.3L864.8 1071.3L855 1103L870.2 1096.3L861.5 1131L866 1133L854.5 1150L849.8 1131.5L856 1131.5L860.8 1109L840.4 1115.7z" fill="#111" stroke="none" stroke-width="0.9" vector-effect="non-scaling-stroke"/>
<text x="667" y="1224" font-size="25.5" fill="#000000" font-weight="700" textLength="369.0" lengthAdjust="spacingAndGlyphs">Remains energized when main</text>
<text x="667" y="1252" font-size="25.5" fill="#000000" font-weight="700" textLength="200.5" lengthAdjust="spacingAndGlyphs">switch is opened</text>
<polyline points="1152,420 1152,362.7 2688,362.7" fill="none" stroke="#000" stroke-width="1.02" vector-effect="non-scaling-stroke"/>
<polyline points="1196,420 1196,384.7 2688,384.7" fill="none" stroke="#000" stroke-width="1.02" vector-effect="non-scaling-stroke"/>
<polyline points="1240,420 1240,406.6 2688,406.6" fill="none" stroke="#000" stroke-width="1.02" vector-effect="non-scaling-stroke"/>
<path d="M2687 356.2L2706 362.7L2687 369.2z" fill="#ff0000" stroke="none" stroke-width="0.9" vector-effect="non-scaling-stroke"/>
<text x="2711.6" y="368.7" font-size="17" fill="#0000e6" textLength="34.4" lengthAdjust="spacingAndGlyphs">-2L1</text>
<path d="M2687 378.2L2706 384.7L2687 391.2z" fill="#ff0000" stroke="none" stroke-width="0.9" vector-effect="non-scaling-stroke"/>
<text x="2711.6" y="390.7" font-size="17" fill="#0000e6" textLength="34.4" lengthAdjust="spacingAndGlyphs">-2L2</text>
<path d="M2687 400.1L2706 406.6L2687 413.1z" fill="#ff0000" stroke="none" stroke-width="0.9" vector-effect="non-scaling-stroke"/>
<text x="2711.6" y="412.6" font-size="17" fill="#0000e6" textLength="34.4" lengthAdjust="spacingAndGlyphs">-2L3</text>
<line x1="1872" y1="355.7" x2="1886" y2="369.7" stroke="#dd1111" stroke-width="0.96" vector-effect="non-scaling-stroke"/>
<line x1="1894" y1="377.7" x2="1908" y2="391.7" stroke="#dd1111" stroke-width="0.96" vector-effect="non-scaling-stroke"/>
<line x1="1916.6" y1="399.6" x2="1930.6" y2="413.6" stroke="#dd1111" stroke-width="0.96" vector-effect="non-scaling-stroke"/>
<line x1="1152" y1="420" x2="1152" y2="439.6" stroke="#0000e6" stroke-width="1.02" vector-effect="non-scaling-stroke"/>
<text x="0" y="0" font-size="12.5" fill="#000000" transform="translate(1148,432) rotate(-90)">2</text>
<line x1="1196" y1="420" x2="1196" y2="439.6" stroke="#0000e6" stroke-width="1.02" vector-effect="non-scaling-stroke"/>
<text x="0" y="0" font-size="12.5" fill="#000000" transform="translate(1192,432) rotate(-90)">4</text>
<line x1="1240" y1="420" x2="1240" y2="439.6" stroke="#0000e6" stroke-width="1.02" vector-effect="non-scaling-stroke"/>
<text x="0" y="0" font-size="12.5" fill="#000000" transform="translate(1236,432) rotate(-90)">6</text>
<rect x="1130" y="439.6" width="132" height="44.4" fill="none" stroke="#0000e6" stroke-width="1.2" vector-effect="non-scaling-stroke"/>
<line x1="1130" y1="462" x2="1262" y2="462" stroke="#0000e6" stroke-width="1.2" vector-effect="non-scaling-stroke"/>
<line x1="1174" y1="439.6" x2="1174" y2="484" stroke="#0000e6" stroke-width="1.2" vector-effect="non-scaling-stroke"/>
<line x1="1218" y1="439.6" x2="1218" y2="484" stroke="#0000e6" stroke-width="1.2" vector-effect="non-scaling-stroke"/>
<polyline points="1152,467 1163,467 1163,478.5 1152,478.5 1152,484" fill="none" stroke="#0000e6" stroke-width="1.2" vector-effect="non-scaling-stroke"/>
<line x1="1152" y1="484" x2="1138.5" y2="508.3" stroke="#0000e6" stroke-width="1.2" vector-effect="non-scaling-stroke"/>
<line x1="1147" y1="503" x2="1157" y2="513" stroke="#0000e6" stroke-width="1.08" vector-effect="non-scaling-stroke"/>
<line x1="1157" y1="503" x2="1147" y2="513" stroke="#0000e6" stroke-width="1.08" vector-effect="non-scaling-stroke"/>
<line x1="1152" y1="508" x2="1152" y2="527" stroke="#0000e6" stroke-width="1.02" vector-effect="non-scaling-stroke"/>
<polyline points="1196,467 1207,467 1207,478.5 1196,478.5 1196,484" fill="none" stroke="#0000e6" stroke-width="1.2" vector-effect="non-scaling-stroke"/>
<line x1="1196" y1="484" x2="1182.5" y2="508.3" stroke="#0000e6" stroke-width="1.2" vector-effect="non-scaling-stroke"/>
<line x1="1191" y1="503" x2="1201" y2="513" stroke="#0000e6" stroke-width="1.08" vector-effect="non-scaling-stroke"/>
<line x1="1201" y1="503" x2="1191" y2="513" stroke="#0000e6" stroke-width="1.08" vector-effect="non-scaling-stroke"/>
<line x1="1196" y1="508" x2="1196" y2="527" stroke="#0000e6" stroke-width="1.02" vector-effect="non-scaling-stroke"/>
<polyline points="1240,467 1251,467 1251,478.5 1240,478.5 1240,484" fill="none" stroke="#0000e6" stroke-width="1.2" vector-effect="non-scaling-stroke"/>
<line x1="1240" y1="484" x2="1226.5" y2="508.3" stroke="#0000e6" stroke-width="1.2" vector-effect="non-scaling-stroke"/>
<line x1="1235" y1="503" x2="1245" y2="513" stroke="#0000e6" stroke-width="1.08" vector-effect="non-scaling-stroke"/>
<line x1="1245" y1="503" x2="1235" y2="513" stroke="#0000e6" stroke-width="1.08" vector-effect="non-scaling-stroke"/>
<line x1="1240" y1="508" x2="1240" y2="527" stroke="#0000e6" stroke-width="1.02" vector-effect="non-scaling-stroke"/>
<g stroke-dasharray="6,5">
<line x1="1108" y1="450" x2="1108" y2="507" stroke="#0000e6" stroke-width="1.2" vector-effect="non-scaling-stroke"/>
<line x1="1108" y1="450.8" x2="1130" y2="450.8" stroke="#0000e6" stroke-width="1.2" vector-effect="non-scaling-stroke"/>
<line x1="1108" y1="473" x2="1130" y2="473" stroke="#0000e6" stroke-width="1.2" vector-effect="non-scaling-stroke"/>
<line x1="1117" y1="494.7" x2="1236" y2="494.7" stroke="#0000e6" stroke-width="1.2" vector-effect="non-scaling-stroke"/>
</g>
<rect x="1099.5" y="486" width="17" height="17" fill="none" stroke="#0000e6" stroke-width="1.08" vector-effect="non-scaling-stroke"/>
<line x1="1108" y1="486" x2="1108" y2="503" stroke="#0000e6" stroke-width="0.96" vector-effect="non-scaling-stroke"/>
<line x1="1099.5" y1="494.5" x2="1116.5" y2="494.5" stroke="#0000e6" stroke-width="0.96" vector-effect="non-scaling-stroke"/>
<polyline points="1072,489 1078,489 1078,500 1088,500" fill="none" stroke="#0000e6" stroke-width="1.08" vector-effect="non-scaling-stroke"/>
<polyline points="1090,494 1093,499 1097,494" fill="none" stroke="#0000e6" stroke-width="0.96" vector-effect="non-scaling-stroke"/>
<text x="0" y="0" font-size="12.5" fill="#000000" transform="translate(1148,520) rotate(-90)">1</text>
<text x="0" y="0" font-size="12.5" fill="#000000" transform="translate(1192,520) rotate(-90)">3</text>
<text x="0" y="0" font-size="12.5" fill="#000000" transform="translate(1236,520) rotate(-90)">5</text>
<text x="1040.8" y="436.3" font-size="16.5" fill="#0000e6" textLength="33.2" lengthAdjust="spacingAndGlyphs">-FC1</text>
<line x1="1152" y1="527" x2="1152" y2="1613" stroke="#000" stroke-width="1.02" vector-effect="non-scaling-stroke"/>
<line x1="1145" y1="773" x2="1159" y2="787" stroke="#dd1111" stroke-width="0.96" vector-effect="non-scaling-stroke"/>
<line x1="1196" y1="527" x2="1196" y2="1613" stroke="#000" stroke-width="1.02" vector-effect="non-scaling-stroke"/>
<line x1="1189" y1="773" x2="1203" y2="787" stroke="#dd1111" stroke-width="0.96" vector-effect="non-scaling-stroke"/>
<line x1="1240" y1="527" x2="1240" y2="1613" stroke="#000" stroke-width="1.02" vector-effect="non-scaling-stroke"/>
<line x1="1233" y1="773" x2="1247" y2="787" stroke="#dd1111" stroke-width="0.96" vector-effect="non-scaling-stroke"/>
<polyline points="1152,549.7 1163.5,561 2688,561" fill="none" stroke="#000" stroke-width="1.02" vector-effect="non-scaling-stroke"/>
<polyline points="1196,571.7 1207.5,583 2688,583" fill="none" stroke="#000" stroke-width="1.02" vector-effect="non-scaling-stroke"/>
<polyline points="1240,593.5 1251.5,604.8 1681,604.8 1681,627" fill="none" stroke="#000" stroke-width="1.02" vector-effect="non-scaling-stroke"/>
<path d="M2687 554.5L2706 561L2687 567.5z" fill="#ff0000" stroke="none" stroke-width="0.9" vector-effect="non-scaling-stroke"/>
<text x="2711.6" y="567" font-size="17" fill="#0000e6" textLength="34.4" lengthAdjust="spacingAndGlyphs">-1L1</text>
<path d="M2687 576.5L2706 583L2687 589.5z" fill="#ff0000" stroke="none" stroke-width="0.9" vector-effect="non-scaling-stroke"/>
<text x="2711.6" y="589" font-size="17" fill="#0000e6" textLength="34.4" lengthAdjust="spacingAndGlyphs">-1L2</text>
<line x1="1872" y1="554" x2="1886" y2="568" stroke="#dd1111" stroke-width="0.96" vector-effect="non-scaling-stroke"/>
<line x1="1916.6" y1="576" x2="1930.6" y2="590" stroke="#dd1111" stroke-width="0.96" vector-effect="non-scaling-stroke"/>
<line x1="1433" y1="597.8" x2="1447" y2="611.8" stroke="#dd1111" stroke-width="0.96" vector-effect="non-scaling-stroke"/>
<line x1="1681" y1="627" x2="1681" y2="638" stroke="#0000e6" stroke-width="1.02" vector-effect="non-scaling-stroke"/>
<line x1="1667.4" y1="636" x2="1681" y2="660.5" stroke="#0000e6" stroke-width="1.2" vector-effect="non-scaling-stroke"/>
<line x1="1681" y1="660.5" x2="1681" y2="671.5" stroke="#0000e6" stroke-width="1.02" vector-effect="non-scaling-stroke"/>
<line x1="1681" y1="671.5" x2="1681" y2="715.4" stroke="#000" stroke-width="1.02" vector-effect="non-scaling-stroke"/>
<polyline points="1640.3,662.6 1650.3,657.3 1645,647.2 1654.7,642.2 1659.7,651.9 1671.8,645.5" fill="none" stroke="#0000e6" stroke-width="1.08" vector-effect="non-scaling-stroke"/>
<line x1="1675.1" y1="651.9" x2="1655" y2="662" stroke="#0000e6" stroke-width="1.08" vector-effect="non-scaling-stroke"/>
<path d="M1643.3 668.6L1650 658.5L1656.5 664.5z" fill="#0000e6" stroke="none" stroke-width="0.9" vector-effect="non-scaling-stroke"/>
<text x="0" y="0" font-size="12.5" fill="#000000" transform="translate(1677,633) rotate(-90)">1</text>
<text x="0" y="0" font-size="12.5" fill="#000000" transform="translate(1677,668) rotate(-90)">2</text>
<text x="1597.6" y="655.6" font-size="16.5" fill="#0000e6" textLength="33.4" lengthAdjust="spacingAndGlyphs">-FC5</text>
<circle cx="1725" cy="649" r="6.5" fill="#fff" stroke="#0000e6" stroke-width="1.08" vector-effect="non-scaling-stroke"/>
<line x1="1715" y1="649" x2="1735" y2="649" stroke="#0000e6" stroke-width="1.08" vector-effect="non-scaling-stroke"/>
<line x1="1725" y1="655.5" x2="1725" y2="731.5" stroke="#0000e6" stroke-width="1.02" vector-effect="non-scaling-stroke"/>
<line x1="1674" y1="686" x2="1688" y2="700" stroke="#dd1111" stroke-width="0.96" vector-effect="non-scaling-stroke"/>
<line x1="1718" y1="686" x2="1732" y2="700" stroke="#dd1111" stroke-width="0.96" vector-effect="non-scaling-stroke"/>
<rect x="1637" y="715.4" width="970" height="176.1" fill="none" stroke="#0000e6" stroke-width="1.2" vector-effect="non-scaling-stroke"/>
<line x1="1681" y1="715.4" x2="1681" y2="731.5" stroke="#0000e6" stroke-width="1.02" vector-effect="non-scaling-stroke"/>
<circle cx="1681" cy="737.5" r="6" fill="#fff" stroke="#0000e6" stroke-width="0.96" vector-effect="non-scaling-stroke"/>
<circle cx="1725" cy="737.5" r="6" fill="#fff" stroke="#0000e6" stroke-width="0.96" vector-effect="non-scaling-stroke"/>
<text x="1595.6" y="734.5" font-size="16.5" fill="#0000e6" textLength="32.4" lengthAdjust="spacingAndGlyphs">-PF1</text>
<rect x="2050.2" y="717.7" width="32.7" height="33.3" fill="#000" rx="3.5"/>
<rect x="2054.9" y="721.8" width="10.3" height="25.4" fill="#fff"/>
<path d="M2068 721.8h1.5a10.3 10.25 0 0 1 0 20.5h-1.5z" fill="#fff" stroke="none" stroke-width="0.9" vector-effect="non-scaling-stroke"/>
<circle cx="2066.7" cy="732" r="4.2" fill="#fff" stroke="#000" stroke-width="1.8" vector-effect="non-scaling-stroke"/>
<text x="2084.7" y="733.6" font-size="22" fill="#000" font-weight="700" textLength="97.3" lengthAdjust="spacingAndGlyphs" stroke="#000" stroke-width="1.3">PHOENIX</text>
<text x="2084.7" y="751" font-size="22" fill="#000" font-weight="700" textLength="97.3" lengthAdjust="spacingAndGlyphs" stroke="#000" stroke-width="1.3">CONTACT</text>
<line x1="1681" y1="876" x2="1681" y2="891.5" stroke="#0000e6" stroke-width="1.02" vector-effect="non-scaling-stroke"/>
<circle cx="1681" cy="869.8" r="6" fill="#fff" stroke="#0000e6" stroke-width="0.96" vector-effect="non-scaling-stroke"/>
<line x1="1725" y1="876" x2="1725" y2="891.5" stroke="#0000e6" stroke-width="1.02" vector-effect="non-scaling-stroke"/>
<circle cx="1725" cy="869.8" r="6" fill="#fff" stroke="#0000e6" stroke-width="0.96" vector-effect="non-scaling-stroke"/>
<line x1="1791" y1="876" x2="1791" y2="891.5" stroke="#0000e6" stroke-width="1.02" vector-effect="non-scaling-stroke"/>
<circle cx="1791" cy="869.8" r="6" fill="#fff" stroke="#0000e6" stroke-width="0.96" vector-effect="non-scaling-stroke"/>
<line x1="1835" y1="876" x2="1835" y2="891.5" stroke="#0000e6" stroke-width="1.02" vector-effect="non-scaling-stroke"/>
<circle cx="1835" cy="869.8" r="6" fill="#fff" stroke="#0000e6" stroke-width="0.96" vector-effect="non-scaling-stroke"/>
<line x1="1901.6" y1="876" x2="1901.6" y2="891.5" stroke="#0000e6" stroke-width="1.02" vector-effect="non-scaling-stroke"/>
<circle cx="1901.6" cy="869.8" r="6" fill="#fff" stroke="#0000e6" stroke-width="0.96" vector-effect="non-scaling-stroke"/>
<line x1="1945.6" y1="876" x2="1945.6" y2="891.5" stroke="#0000e6" stroke-width="1.02" vector-effect="non-scaling-stroke"/>
<circle cx="1945.6" cy="869.8" r="6" fill="#fff" stroke="#0000e6" stroke-width="0.96" vector-effect="non-scaling-stroke"/>
<line x1="2011.7" y1="876" x2="2011.7" y2="891.5" stroke="#0000e6" stroke-width="1.02" vector-effect="non-scaling-stroke"/>
<circle cx="2011.7" cy="869.8" r="6" fill="#fff" stroke="#0000e6" stroke-width="0.96" vector-effect="non-scaling-stroke"/>
<line x1="2056" y1="876" x2="2056" y2="891.5" stroke="#0000e6" stroke-width="1.02" vector-effect="non-scaling-stroke"/>
<circle cx="2056" cy="869.8" r="6" fill="#fff" stroke="#0000e6" stroke-width="0.96" vector-effect="non-scaling-stroke"/>
<line x1="2100" y1="876" x2="2100" y2="891.5" stroke="#0000e6" stroke-width="1.02" vector-effect="non-scaling-stroke"/>
<circle cx="2100" cy="869.8" r="6" fill="#fff" stroke="#0000e6" stroke-width="0.96" vector-effect="non-scaling-stroke"/>
<line x1="2144" y1="876" x2="2144" y2="891.5" stroke="#0000e6" stroke-width="1.02" vector-effect="non-scaling-stroke"/>
<circle cx="2144" cy="869.8" r="6" fill="#fff" stroke="#0000e6" stroke-width="0.96" vector-effect="non-scaling-stroke"/>
<line x1="2188" y1="876" x2="2188" y2="891.5" stroke="#0000e6" stroke-width="1.02" vector-effect="non-scaling-stroke"/>
<circle cx="2188" cy="869.8" r="6" fill="#fff" stroke="#0000e6" stroke-width="0.96" vector-effect="non-scaling-stroke"/>
<line x1="2298" y1="876" x2="2298" y2="891.5" stroke="#0000e6" stroke-width="1.02" vector-effect="non-scaling-stroke"/>
<circle cx="2298" cy="869.8" r="6" fill="#fff" stroke="#0000e6" stroke-width="0.96" vector-effect="non-scaling-stroke"/>
<line x1="2342.6" y1="876" x2="2342.6" y2="891.5" stroke="#0000e6" stroke-width="1.02" vector-effect="non-scaling-stroke"/>
<circle cx="2342.6" cy="869.8" r="6" fill="#fff" stroke="#0000e6" stroke-width="0.96" vector-effect="non-scaling-stroke"/>
<line x1="2386.7" y1="876" x2="2386.7" y2="891.5" stroke="#0000e6" stroke-width="1.02" vector-effect="non-scaling-stroke"/>
<circle cx="2386.7" cy="869.8" r="6" fill="#fff" stroke="#0000e6" stroke-width="0.96" vector-effect="non-scaling-stroke"/>
<line x1="2431" y1="876" x2="2431" y2="891.5" stroke="#0000e6" stroke-width="1.02" vector-effect="non-scaling-stroke"/>
<circle cx="2431" cy="869.8" r="6" fill="#fff" stroke="#0000e6" stroke-width="0.96" vector-effect="non-scaling-stroke"/>
<line x1="2497" y1="876" x2="2497" y2="891.5" stroke="#0000e6" stroke-width="1.02" vector-effect="non-scaling-stroke"/>
<circle cx="2497" cy="869.8" r="6" fill="#fff" stroke="#0000e6" stroke-width="0.96" vector-effect="non-scaling-stroke"/>
<line x1="2541" y1="876" x2="2541" y2="891.5" stroke="#0000e6" stroke-width="1.02" vector-effect="non-scaling-stroke"/>
<circle cx="2541" cy="869.8" r="6" fill="#fff" stroke="#0000e6" stroke-width="0.96" vector-effect="non-scaling-stroke"/>
<line x1="2585" y1="876" x2="2585" y2="891.5" stroke="#0000e6" stroke-width="1.02" vector-effect="non-scaling-stroke"/>
<circle cx="2585" cy="869.8" r="6" fill="#fff" stroke="#0000e6" stroke-width="0.96" vector-effect="non-scaling-stroke"/>
<line x1="2188" y1="891.5" x2="2203" y2="905" stroke="#111" stroke-width="0.9" vector-effect="non-scaling-stroke"/>
<circle cx="2210" cy="913" r="11" fill="#fff" stroke="#111" stroke-width="0.9" vector-effect="non-scaling-stroke"/>
<line x1="2210" y1="907" x2="2210" y2="914" stroke="#111" stroke-width="0.9" vector-effect="non-scaling-stroke"/>
<line x1="2204" y1="914" x2="2216" y2="914" stroke="#111" stroke-width="0.9" vector-effect="non-scaling-stroke"/>
<line x1="2205.5" y1="917" x2="2214.5" y2="917" stroke="#111" stroke-width="0.9" vector-effect="non-scaling-stroke"/>
<line x1="2207.5" y1="920" x2="2212.5" y2="920" stroke="#111" stroke-width="0.9" vector-effect="non-scaling-stroke"/>
<polyline points="2541,891.5 2541,941" fill="none" stroke="#0000e6" stroke-width="1.02" vector-effect="non-scaling-stroke"/>
<rect x="2535.6" y="941" width="11.1" height="33" fill="none" stroke="#0000e6" stroke-width="1.08" vector-effect="non-scaling-stroke"/>
<polyline points="2541,974 2541,1023.7 2585,1023.7 2585,891.5" fill="none" stroke="#0000e6" stroke-width="1.02" vector-effect="non-scaling-stroke"/>
<text x="0" y="0" font-size="12.5" fill="#000000" transform="translate(2536,937) rotate(-90)">x1</text>
<text x="0" y="0" font-size="12.5" fill="#000000" transform="translate(2536,990) rotate(-90)">x2</text>
<text x="2485" y="964.8" font-size="16.5" fill="#0000e6" textLength="33.0" lengthAdjust="spacingAndGlyphs">-PF1</text>
<polyline points="1681,891.5 1681,935.7 1174,935.7 1174,957.7" fill="none" stroke="#cc2020" stroke-width="1.02" vector-effect="non-scaling-stroke"/>
<line x1="1380" y1="935.7" x2="1436" y2="935.7" stroke="#0000e6" stroke-width="1.02" vector-effect="non-scaling-stroke"/>
<rect x="1388.5" y="929.2" width="39" height="13" fill="#fff" stroke="#0000e6" stroke-width="1.08" vector-effect="non-scaling-stroke" rx="6.5"/>
<circle cx="1394.5" cy="935.7" r="6.2" fill="none" stroke="#0000e6" stroke-width="1.08" vector-effect="non-scaling-stroke"/>
<circle cx="1421.5" cy="935.7" r="6.2" fill="none" stroke="#0000e6" stroke-width="1.08" vector-effect="non-scaling-stroke"/>
<line x1="1299" y1="928.7" x2="1313" y2="942.7" stroke="#dd1111" stroke-width="0.96" vector-effect="non-scaling-stroke"/>
<polyline points="1725,891.5 1725,1023.5 1174,1023.5 1174,1003.5" fill="none" stroke="#cc2020" stroke-width="1.02" vector-effect="non-scaling-stroke"/>
<line x1="1380" y1="1023.5" x2="1436" y2="1023.5" stroke="#0000e6" stroke-width="1.02" vector-effect="non-scaling-stroke"/>
<rect x="1388.5" y="1017" width="39" height="13" fill="#fff" stroke="#0000e6" stroke-width="1.08" vector-effect="non-scaling-stroke" rx="6.5"/>
<circle cx="1394.5" cy="1023.5" r="6.2" fill="none" stroke="#0000e6" stroke-width="1.08" vector-effect="non-scaling-stroke"/>
<circle cx="1421.5" cy="1023.5" r="6.2" fill="none" stroke="#0000e6" stroke-width="1.08" vector-effect="non-scaling-stroke"/>
<line x1="1299" y1="1016.5" x2="1313" y2="1030.5" stroke="#dd1111" stroke-width="0.96" vector-effect="non-scaling-stroke"/>
<polyline points="1791,891.5 1791,1067.7 1218,1067.7 1218,1089.7" fill="none" stroke="#cc2020" stroke-width="1.02" vector-effect="non-scaling-stroke"/>
<line x1="1380" y1="1067.7" x2="1436" y2="1067.7" stroke="#0000e6" stroke-width="1.02" vector-effect="non-scaling-stroke"/>
<rect x="1388.5" y="1061.2" width="39" height="13" fill="#fff" stroke="#0000e6" stroke-width="1.08" vector-effect="non-scaling-stroke" rx="6.5"/>
<circle cx="1394.5" cy="1067.7" r="6.2" fill="none" stroke="#0000e6" stroke-width="1.08" vector-effect="non-scaling-stroke"/>
<circle cx="1421.5" cy="1067.7" r="6.2" fill="none" stroke="#0000e6" stroke-width="1.08" vector-effect="non-scaling-stroke"/>
<line x1="1299" y1="1060.7" x2="1313" y2="1074.7" stroke="#dd1111" stroke-width="0.96" vector-effect="non-scaling-stroke"/>
<polyline points="1835,891.5 1835,1156 1218,1156 1218,1136" fill="none" stroke="#cc2020" stroke-width="1.02" vector-effect="non-scaling-stroke"/>
<line x1="1380" y1="1156" x2="1436" y2="1156" stroke="#0000e6" stroke-width="1.02" vector-effect="non-scaling-stroke"/>
<rect x="1388.5" y="1149.5" width="39" height="13" fill="#fff" stroke="#0000e6" stroke-width="1.08" vector-effect="non-scaling-stroke" rx="6.5"/>
<circle cx="1394.5" cy="1156" r="6.2" fill="none" stroke="#0000e6" stroke-width="1.08" vector-effect="non-scaling-stroke"/>
<circle cx="1421.5" cy="1156" r="6.2" fill="none" stroke="#0000e6" stroke-width="1.08" vector-effect="non-scaling-stroke"/>
<line x1="1299" y1="1149" x2="1313" y2="1163" stroke="#dd1111" stroke-width="0.96" vector-effect="non-scaling-stroke"/>
<polyline points="1901.6,891.5 1901.6,1200 1262,1200 1262,1222" fill="none" stroke="#cc2020" stroke-width="1.02" vector-effect="non-scaling-stroke"/>
<line x1="1380" y1="1200" x2="1436" y2="1200" stroke="#0000e6" stroke-width="1.02" vector-effect="non-scaling-stroke"/>
<rect x="1388.5" y="1193.5" width="39" height="13" fill="#fff" stroke="#0000e6" stroke-width="1.08" vector-effect="non-scaling-stroke" rx="6.5"/>
<circle cx="1394.5" cy="1200" r="6.2" fill="none" stroke="#0000e6" stroke-width="1.08" vector-effect="non-scaling-stroke"/>
<circle cx="1421.5" cy="1200" r="6.2" fill="none" stroke="#0000e6" stroke-width="1.08" vector-effect="non-scaling-stroke"/>
<line x1="1299" y1="1193" x2="1313" y2="1207" stroke="#dd1111" stroke-width="0.96" vector-effect="non-scaling-stroke"/>
<polyline points="1945.6,891.5 1945.6,1288.5 1262,1288.5 1262,1268.5" fill="none" stroke="#cc2020" stroke-width="1.02" vector-effect="non-scaling-stroke"/>
<line x1="1380" y1="1288.5" x2="1436" y2="1288.5" stroke="#0000e6" stroke-width="1.02" vector-effect="non-scaling-stroke"/>
<rect x="1388.5" y="1282" width="39" height="13" fill="#fff" stroke="#0000e6" stroke-width="1.08" vector-effect="non-scaling-stroke" rx="6.5"/>
<circle cx="1394.5" cy="1288.5" r="6.2" fill="none" stroke="#0000e6" stroke-width="1.08" vector-effect="non-scaling-stroke"/>
<circle cx="1421.5" cy="1288.5" r="6.2" fill="none" stroke="#0000e6" stroke-width="1.08" vector-effect="non-scaling-stroke"/>
<line x1="1299" y1="1281.5" x2="1313" y2="1295.5" stroke="#dd1111" stroke-width="0.96" vector-effect="non-scaling-stroke"/>
<line x1="1630.5" y1="928.7" x2="1644.5" y2="942.7" stroke="#dd1111" stroke-width="0.96" vector-effect="non-scaling-stroke"/>
<line x1="1718" y1="951" x2="1732" y2="965" stroke="#dd1111" stroke-width="0.96" vector-effect="non-scaling-stroke"/>
<line x1="1784" y1="951" x2="1798" y2="965" stroke="#dd1111" stroke-width="0.96" vector-effect="non-scaling-stroke"/>
<line x1="1828" y1="951" x2="1842" y2="965" stroke="#dd1111" stroke-width="0.96" vector-effect="non-scaling-stroke"/>
<line x1="1894.6" y1="951" x2="1908.6" y2="965" stroke="#dd1111" stroke-width="0.96" vector-effect="non-scaling-stroke"/>
<line x1="1938.6" y1="951" x2="1952.6" y2="965" stroke="#dd1111" stroke-width="0.96" vector-effect="non-scaling-stroke"/>
<polyline points="1174,957.7 1174,968.4 1149,968.4" fill="none" stroke="#0000e6" stroke-width="1.2" vector-effect="non-scaling-stroke"/>
<polyline points="1174,1003.5 1174,990.7 1149,990.7" fill="none" stroke="#0000e6" stroke-width="1.2" vector-effect="non-scaling-stroke"/>
<path d="M1149 968.4a5.5 5.6 0 0 0 0 11.2a5.5 5.6 0 0 0 0 11.1" fill="none" stroke="#0000e6" stroke-width="1.2" vector-effect="non-scaling-stroke"/>
<text x="0" y="0" font-size="12.5" fill="#000000" transform="translate(1170,964) rotate(-90)">l</text>
<text x="0" y="0" font-size="12.5" fill="#000000" transform="translate(1170,1004) rotate(-90)">k</text>
<path d="M1377.7 941.0L1360.7 957.6V968.5M1350 968.0L1360.7 992.0V1002.0L1377.7 1017.0" fill="none" stroke="#0000e6" stroke-width="1.8" vector-effect="non-scaling-stroke"/>
<polyline points="1218,1089.9 1218,1100.6 1193,1100.6" fill="none" stroke="#0000e6" stroke-width="1.2" vector-effect="non-scaling-stroke"/>
<polyline points="1218,1135.7 1218,1122.9 1193,1122.9" fill="none" stroke="#0000e6" stroke-width="1.2" vector-effect="non-scaling-stroke"/>
<path d="M1193 1100.6a5.5 5.6 0 0 0 0 11.2a5.5 5.6 0 0 0 0 11.1" fill="none" stroke="#0000e6" stroke-width="1.2" vector-effect="non-scaling-stroke"/>
<text x="0" y="0" font-size="12.5" fill="#000000" transform="translate(1214,1096.2) rotate(-90)">l</text>
<text x="0" y="0" font-size="12.5" fill="#000000" transform="translate(1214,1136.2) rotate(-90)">k</text>
<path d="M1377.7 1073.2L1360.7 1089.8V1100.7M1350 1100.2L1360.7 1124.2V1134.2L1377.7 1149.2" fill="none" stroke="#0000e6" stroke-width="1.8" vector-effect="non-scaling-stroke"/>
<polyline points="1262,1222.1 1262,1232.8 1237,1232.8" fill="none" stroke="#0000e6" stroke-width="1.2" vector-effect="non-scaling-stroke"/>
<polyline points="1262,1267.9 1262,1255.1 1237,1255.1" fill="none" stroke="#0000e6" stroke-width="1.2" vector-effect="non-scaling-stroke"/>
<path d="M1237 1232.8a5.5 5.6 0 0 0 0 11.2a5.5 5.6 0 0 0 0 11.1" fill="none" stroke="#0000e6" stroke-width="1.2" vector-effect="non-scaling-stroke"/>
<text x="0" y="0" font-size="12.5" fill="#000000" transform="translate(1258,1228.4) rotate(-90)">l</text>
<text x="0" y="0" font-size="12.5" fill="#000000" transform="translate(1258,1268.4) rotate(-90)">k</text>
<path d="M1377.7 1205.4L1360.7 1222.0V1232.9M1350 1232.4L1360.7 1256.4V1266.4L1377.7 1281.4" fill="none" stroke="#0000e6" stroke-width="1.8" vector-effect="non-scaling-stroke"/>
<text x="1094.4" y="986.5" font-size="16.5" fill="#0000e6" textLength="35.0" lengthAdjust="spacingAndGlyphs">-TA1</text>
<text x="1094.4" y="1118.5" font-size="16.5" fill="#0000e6" textLength="35.0" lengthAdjust="spacingAndGlyphs">-TA2</text>
<text x="1094.4" y="1250.8" font-size="16.5" fill="#0000e6" textLength="35.0" lengthAdjust="spacingAndGlyphs">-TA3</text>
<text x="1376.7" y="910" font-size="16.5" fill="#0000e6" textLength="36.1" lengthAdjust="spacingAndGlyphs">-XD5</text>
<line x1="2011.7" y1="891.5" x2="2011.7" y2="1217" stroke="#000" stroke-width="1.02" vector-effect="non-scaling-stroke"/>
<circle cx="2011.7" cy="1222.5" r="5.5" fill="#fff" stroke="#0000e6" stroke-width="0.96" vector-effect="non-scaling-stroke"/>
<rect x="2007.2" y="1229.5" width="9" height="26" fill="none" stroke="#0000e6" stroke-width="1.08" vector-effect="non-scaling-stroke"/>
<line x1="2011.7" y1="1229.5" x2="2011.7" y2="1255.5" stroke="#0000e6" stroke-width="0.9" vector-effect="non-scaling-stroke"/>
<circle cx="2011.7" cy="1262.5" r="5.5" fill="#fff" stroke="#0000e6" stroke-width="0.96" vector-effect="non-scaling-stroke"/>
<polyline points="2011.7,1268 2011.7,1332.3 1284,1332.3 1284,1613" fill="none" stroke="#000" stroke-width="1.02" vector-effect="non-scaling-stroke"/>
<path d="M2020.7 1242h20M2024.7 1236v12l9-6z" fill="none" stroke="#0000e6" stroke-width="0.96" vector-effect="non-scaling-stroke"/>
<line x1="2033.7" y1="1236" x2="2033.7" y2="1248" stroke="#0000e6" stroke-width="0.96" vector-effect="non-scaling-stroke"/>
<path d="M2023.7 1254l5-5M2027.7 1256l5-5" fill="none" stroke="#0000e6" stroke-width="0.96" vector-effect="non-scaling-stroke"/>
<line x1="2004.7" y1="1127" x2="2018.7" y2="1141" stroke="#dd1111" stroke-width="0.96" vector-effect="non-scaling-stroke"/>
<line x1="2056" y1="891.5" x2="2056" y2="1217" stroke="#000" stroke-width="1.02" vector-effect="non-scaling-stroke"/>
<circle cx="2056" cy="1222.5" r="5.5" fill="#fff" stroke="#0000e6" stroke-width="0.96" vector-effect="non-scaling-stroke"/>
<rect x="2051.5" y="1229.5" width="9" height="26" fill="none" stroke="#0000e6" stroke-width="1.08" vector-effect="non-scaling-stroke"/>
<line x1="2056" y1="1229.5" x2="2056" y2="1255.5" stroke="#0000e6" stroke-width="0.9" vector-effect="non-scaling-stroke"/>
<circle cx="2056" cy="1262.5" r="5.5" fill="#fff" stroke="#0000e6" stroke-width="0.96" vector-effect="non-scaling-stroke"/>
<polyline points="2056,1268 2056,1354.5 1328.6,1354.5 1328.6,1613" fill="none" stroke="#000" stroke-width="1.02" vector-effect="non-scaling-stroke"/>
<path d="M2065 1242h20M2069 1236v12l9-6z" fill="none" stroke="#0000e6" stroke-width="0.96" vector-effect="non-scaling-stroke"/>
<line x1="2078" y1="1236" x2="2078" y2="1248" stroke="#0000e6" stroke-width="0.96" vector-effect="non-scaling-stroke"/>
<path d="M2068 1254l5-5M2072 1256l5-5" fill="none" stroke="#0000e6" stroke-width="0.96" vector-effect="non-scaling-stroke"/>
<line x1="2049" y1="1127" x2="2063" y2="1141" stroke="#dd1111" stroke-width="0.96" vector-effect="non-scaling-stroke"/>
<line x1="2100" y1="891.5" x2="2100" y2="1217" stroke="#000" stroke-width="1.02" vector-effect="non-scaling-stroke"/>
<circle cx="2100" cy="1222.5" r="5.5" fill="#fff" stroke="#0000e6" stroke-width="0.96" vector-effect="non-scaling-stroke"/>
<rect x="2095.5" y="1229.5" width="9" height="26" fill="none" stroke="#0000e6" stroke-width="1.08" vector-effect="non-scaling-stroke"/>
<line x1="2100" y1="1229.5" x2="2100" y2="1255.5" stroke="#0000e6" stroke-width="0.9" vector-effect="non-scaling-stroke"/>
<circle cx="2100" cy="1262.5" r="5.5" fill="#fff" stroke="#0000e6" stroke-width="0.96" vector-effect="non-scaling-stroke"/>
<polyline points="2100,1268 2100,1377 1372,1377 1372,1613" fill="none" stroke="#000" stroke-width="1.02" vector-effect="non-scaling-stroke"/>
<path d="M2109 1242h20M2113 1236v12l9-6z" fill="none" stroke="#0000e6" stroke-width="0.96" vector-effect="non-scaling-stroke"/>
<line x1="2122" y1="1236" x2="2122" y2="1248" stroke="#0000e6" stroke-width="0.96" vector-effect="non-scaling-stroke"/>
<path d="M2112 1254l5-5M2116 1256l5-5" fill="none" stroke="#0000e6" stroke-width="0.96" vector-effect="non-scaling-stroke"/>
<line x1="2093" y1="1127" x2="2107" y2="1141" stroke="#dd1111" stroke-width="0.96" vector-effect="non-scaling-stroke"/>
<text x="1968" y="1229.5" font-size="16.5" fill="#0000e6" textLength="33.7" lengthAdjust="spacingAndGlyphs">-FC2</text>
<line x1="2144" y1="891.5" x2="2144" y2="1480.5" stroke="#0000e6" stroke-width="1.02" vector-effect="non-scaling-stroke"/>
<line x1="2137" y1="1127" x2="2151" y2="1141" stroke="#dd1111" stroke-width="0.96" vector-effect="non-scaling-stroke"/>
<line x1="2188" y1="891.5" x2="2188" y2="1414.5" stroke="#33dd33" stroke-width="1.02" vector-effect="non-scaling-stroke"/>
<line x1="2181" y1="1127" x2="2195" y2="1141" stroke="#dd1111" stroke-width="0.96" vector-effect="non-scaling-stroke"/>
<line x1="1497.6" y1="1326" x2="1511.6" y2="1340" stroke="#dd1111" stroke-width="0.96" vector-effect="non-scaling-stroke"/>
<line x1="1519.6" y1="1348" x2="1533.6" y2="1362" stroke="#dd1111" stroke-width="0.96" vector-effect="non-scaling-stroke"/>
<line x1="1541.6" y1="1370" x2="1555.6" y2="1384" stroke="#dd1111" stroke-width="0.96" vector-effect="non-scaling-stroke"/>
<polyline points="1152,1541 1163,1530 1274,1530 1284,1541" fill="none" stroke="#000" stroke-width="1.02" vector-effect="non-scaling-stroke"/>
<line x1="1210.6" y1="1523" x2="1224.6" y2="1537" stroke="#dd1111" stroke-width="0.96" vector-effect="non-scaling-stroke"/>
<polyline points="1196,1563 1207,1552 1318,1552 1328,1563" fill="none" stroke="#000" stroke-width="1.02" vector-effect="non-scaling-stroke"/>
<line x1="1254.6" y1="1545" x2="1268.6" y2="1559" stroke="#dd1111" stroke-width="0.96" vector-effect="non-scaling-stroke"/>
<polyline points="1240,1585 1251,1574 1362,1574 1372,1585" fill="none" stroke="#000" stroke-width="1.02" vector-effect="non-scaling-stroke"/>
<line x1="1298.6" y1="1567" x2="1312.6" y2="1581" stroke="#dd1111" stroke-width="0.96" vector-effect="non-scaling-stroke"/>
<rect x="1438" y="1399" width="838.6" height="44" fill="none" stroke="#000" stroke-width="1.8" vector-effect="non-scaling-stroke"/>
<rect x="1393.6" y="1465" width="817" height="44" fill="none" stroke="#000" stroke-width="1.8" vector-effect="non-scaling-stroke"/>
<rect x="2430" y="1399" width="387" height="44" fill="none" stroke="#000" stroke-width="1.8" vector-effect="non-scaling-stroke"/>
<rect x="2474.5" y="1465" width="365" height="44" fill="none" stroke="#000" stroke-width="1.8" vector-effect="non-scaling-stroke"/>
<circle cx="1461" cy="1421" r="6.5" fill="#fff" stroke="#0000e6" stroke-width="1.08" vector-effect="non-scaling-stroke"/>
<line x1="1451" y1="1421" x2="1471" y2="1421" stroke="#0000e6" stroke-width="1.08" vector-effect="non-scaling-stroke"/>
<text x="1527" y="1427" font-size="18" fill="#0000e6" textLength="56.4" lengthAdjust="spacingAndGlyphs">-WE1 =</text>
<circle cx="2188" cy="1421" r="6.5" fill="#fff" stroke="#0000e6" stroke-width="1.08" vector-effect="non-scaling-stroke"/>
<line x1="2178" y1="1421" x2="2198" y2="1421" stroke="#0000e6" stroke-width="1.08" vector-effect="non-scaling-stroke"/>
<circle cx="2232.6" cy="1421" r="6.5" fill="#fff" stroke="#0000e6" stroke-width="1.08" vector-effect="non-scaling-stroke"/>
<line x1="2222.6" y1="1421" x2="2242.6" y2="1421" stroke="#0000e6" stroke-width="1.08" vector-effect="non-scaling-stroke"/>
<circle cx="1416.8" cy="1487" r="6.5" fill="#fff" stroke="#0000e6" stroke-width="1.08" vector-effect="non-scaling-stroke"/>
<line x1="1406.8" y1="1487" x2="1426.8" y2="1487" stroke="#0000e6" stroke-width="1.08" vector-effect="non-scaling-stroke"/>
<text x="1504.6" y="1494" font-size="18" fill="#0000e6" textLength="56.9" lengthAdjust="spacingAndGlyphs">-WE2 =</text>
<circle cx="2144" cy="1487" r="6.5" fill="#fff" stroke="#0000e6" stroke-width="1.08" vector-effect="non-scaling-stroke"/>
<line x1="2134" y1="1487" x2="2154" y2="1487" stroke="#0000e6" stroke-width="1.08" vector-effect="non-scaling-stroke"/>
<circle cx="2188" cy="1487" r="6.5" fill="#fff" stroke="#0000e6" stroke-width="1.08" vector-effect="non-scaling-stroke"/>
<line x1="2178" y1="1487" x2="2198" y2="1487" stroke="#0000e6" stroke-width="1.08" vector-effect="non-scaling-stroke"/>
<circle cx="2452.4" cy="1421" r="6.5" fill="#fff" stroke="#0000e6" stroke-width="1.08" vector-effect="non-scaling-stroke"/>
<line x1="2442.4" y1="1421" x2="2462.4" y2="1421" stroke="#0000e6" stroke-width="1.08" vector-effect="non-scaling-stroke"/>
<text x="2542.5" y="1428.2" font-size="18" fill="#0000e6" textLength="80.5" lengthAdjust="spacingAndGlyphs">+A2-WE1 =</text>
<circle cx="2518.8" cy="1487" r="6.5" fill="#fff" stroke="#0000e6" stroke-width="1.08" vector-effect="non-scaling-stroke"/>
<line x1="2508.8" y1="1487" x2="2528.8" y2="1487" stroke="#0000e6" stroke-width="1.08" vector-effect="non-scaling-stroke"/>
<text x="2608.5" y="1494.6" font-size="18" fill="#0000e6" textLength="81.5" lengthAdjust="spacingAndGlyphs">+A2-WE2 =</text>
<line x1="1461" y1="1427.5" x2="1461" y2="1613" stroke="#33dd33" stroke-width="1.02" vector-effect="non-scaling-stroke"/>
<line x1="1416.8" y1="1493.5" x2="1416.8" y2="1613" stroke="#0000e6" stroke-width="1.02" vector-effect="non-scaling-stroke"/>
<polyline points="2232.6,1427.5 2232.6,1530 2452.4,1530 2452.4,1427.5" fill="none" stroke="#33dd33" stroke-width="1.02" vector-effect="non-scaling-stroke"/>
<polyline points="2188,1493.5 2188,1553 2518.8,1553 2518.8,1493.5" fill="none" stroke="#0000e6" stroke-width="1.02" vector-effect="non-scaling-stroke"/>
<line x1="2342.5" y1="1509" x2="2342.5" y2="1575" stroke="#0000e6" stroke-width="0.96" vector-effect="non-scaling-stroke"/>
<line x1="2335.5" y1="1523" x2="2349.5" y2="1537" stroke="#dd1111" stroke-width="0.96" vector-effect="non-scaling-stroke"/>
<line x1="2335.5" y1="1546" x2="2349.5" y2="1560" stroke="#dd1111" stroke-width="0.96" vector-effect="non-scaling-stroke"/>
<text x="2300.6" y="1505.9" font-size="16.5" fill="#0000e6" textLength="41.2" lengthAdjust="spacingAndGlyphs">-WD1</text>
<line x1="1152" y1="1606" x2="1152" y2="1613" stroke="#0000e6" stroke-width="1.02" vector-effect="non-scaling-stroke"/>
<circle cx="1152" cy="1619" r="6" fill="#fff" stroke="#0000e6" stroke-width="0.96" vector-effect="non-scaling-stroke"/>
<text x="0" y="0" font-size="13" fill="#000000" transform="translate(1143,1626) rotate(-90)">1</text>
<line x1="1196" y1="1606" x2="1196" y2="1613" stroke="#0000e6" stroke-width="1.02" vector-effect="non-scaling-stroke"/>
<circle cx="1196" cy="1619" r="6" fill="#fff" stroke="#0000e6" stroke-width="0.96" vector-effect="non-scaling-stroke"/>
<text x="0" y="0" font-size="13" fill="#000000" transform="translate(1187,1626) rotate(-90)">2</text>
<line x1="1240" y1="1606" x2="1240" y2="1613" stroke="#0000e6" stroke-width="1.02" vector-effect="non-scaling-stroke"/>
<circle cx="1240" cy="1619" r="6" fill="#fff" stroke="#0000e6" stroke-width="0.96" vector-effect="non-scaling-stroke"/>
<text x="0" y="0" font-size="13" fill="#000000" transform="translate(1231,1626) rotate(-90)">3</text>
<line x1="1284" y1="1606" x2="1284" y2="1613" stroke="#0000e6" stroke-width="1.02" vector-effect="non-scaling-stroke"/>
<circle cx="1284" cy="1619" r="6" fill="#fff" stroke="#0000e6" stroke-width="0.96" vector-effect="non-scaling-stroke"/>
<text x="0" y="0" font-size="13" fill="#000000" transform="translate(1275,1626) rotate(-90)">4</text>
<line x1="1328.6" y1="1606" x2="1328.6" y2="1613" stroke="#0000e6" stroke-width="1.02" vector-effect="non-scaling-stroke"/>
<circle cx="1328.6" cy="1619" r="6" fill="#fff" stroke="#0000e6" stroke-width="0.96" vector-effect="non-scaling-stroke"/>
<text x="0" y="0" font-size="13" fill="#000000" transform="translate(1319.6,1626) rotate(-90)">5</text>
<line x1="1372" y1="1606" x2="1372" y2="1613" stroke="#0000e6" stroke-width="1.02" vector-effect="non-scaling-stroke"/>
<circle cx="1372" cy="1619" r="6" fill="#fff" stroke="#0000e6" stroke-width="0.96" vector-effect="non-scaling-stroke"/>
<text x="0" y="0" font-size="13" fill="#000000" transform="translate(1363,1626) rotate(-90)">6</text>
<line x1="1416.8" y1="1606" x2="1416.8" y2="1613" stroke="#0000e6" stroke-width="1.02" vector-effect="non-scaling-stroke"/>
<circle cx="1416.8" cy="1619" r="6" fill="#fff" stroke="#0000e6" stroke-width="0.96" vector-effect="non-scaling-stroke"/>
<text x="0" y="0" font-size="13" fill="#000000" transform="translate(1407.8,1626) rotate(-90)">7</text>
<line x1="1461" y1="1606" x2="1461" y2="1613" stroke="#0000e6" stroke-width="1.02" vector-effect="non-scaling-stroke"/>
<circle cx="1461" cy="1619" r="6" fill="#fff" stroke="#0000e6" stroke-width="0.96" vector-effect="non-scaling-stroke"/>
<text x="0" y="0" font-size="13" fill="#000000" transform="translate(1452,1626) rotate(-90)">8</text>
<circle cx="1477.7" cy="1619" r="9" fill="#fff" stroke="#111" stroke-width="0.9" vector-effect="non-scaling-stroke"/>
<line x1="1477.7" y1="1613" x2="1477.7" y2="1620" stroke="#111" stroke-width="0.9" vector-effect="non-scaling-stroke"/>
<line x1="1471.7" y1="1620" x2="1483.7" y2="1620" stroke="#111" stroke-width="0.9" vector-effect="non-scaling-stroke"/>
<line x1="1473.2" y1="1623" x2="1482.2" y2="1623" stroke="#111" stroke-width="0.9" vector-effect="non-scaling-stroke"/>
<line x1="1475.2" y1="1626" x2="1480.2" y2="1626" stroke="#111" stroke-width="0.9" vector-effect="non-scaling-stroke"/>
<line x1="1467" y1="1619" x2="1468" y2="1619" stroke="#111" stroke-width="0.9" vector-effect="non-scaling-stroke"/>
<text x="1095" y="1625.5" font-size="17.5" fill="#0000e6" textLength="36.0" lengthAdjust="spacingAndGlyphs">-XD1</text>
<text x="1152.5" y="1663" font-size="17" fill="#000000" textLength="100.1" lengthAdjust="spacingAndGlyphs">Power supply</text>
<line x1="1145" y1="1503" x2="1159" y2="1517" stroke="#000" stroke-width="0.9" vector-effect="non-scaling-stroke"/>
<line x1="1189" y1="1503" x2="1203" y2="1517" stroke="#000" stroke-width="0.9" vector-effect="non-scaling-stroke"/>
<line x1="1233" y1="1503" x2="1247" y2="1517" stroke="#000" stroke-width="0.9" vector-effect="non-scaling-stroke"/>
<line x1="1409.8" y1="1525" x2="1423.8" y2="1539" stroke="#000" stroke-width="0.9" vector-effect="non-scaling-stroke"/>
<line x1="1454" y1="1525" x2="1468" y2="1539" stroke="#000" stroke-width="0.9" vector-effect="non-scaling-stroke"/>
<line x1="1409.8" y1="1568" x2="1423.8" y2="1582" stroke="#dd1111" stroke-width="0.96" vector-effect="non-scaling-stroke"/>
<line x1="1454" y1="1568" x2="1468" y2="1582" stroke="#dd1111" stroke-width="0.96" vector-effect="non-scaling-stroke"/>
</g></svg>
</svg></body></html>
